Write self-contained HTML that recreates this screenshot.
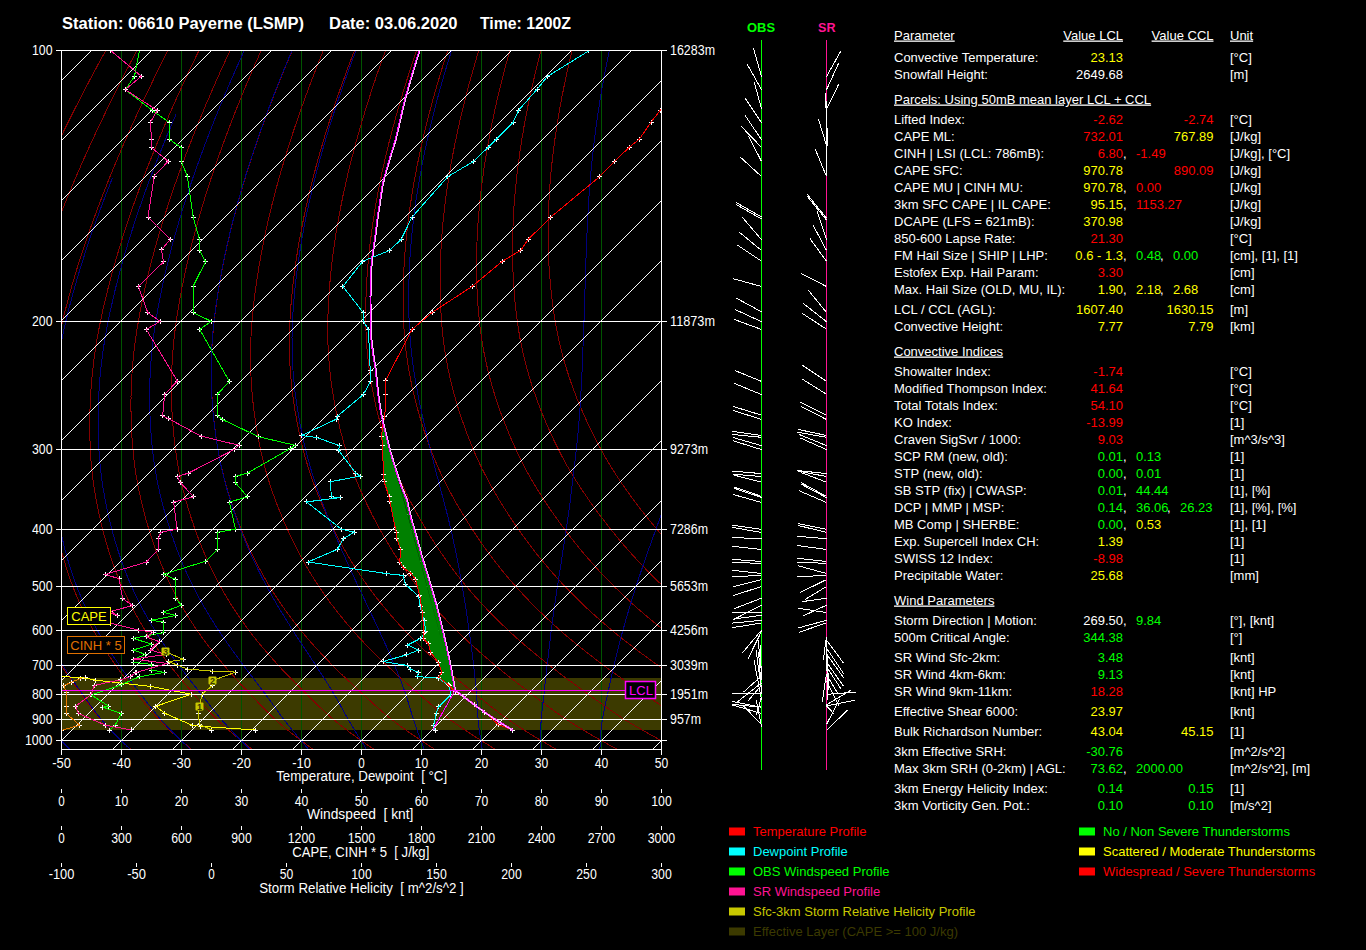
<!DOCTYPE html><html><head><meta charset="utf-8"><style>html,body{margin:0;padding:0;background:#000;width:1366px;height:950px;overflow:hidden}svg{display:block}text{font-family:"Liberation Sans",sans-serif}</style></head><body>
<svg width="1366" height="950" viewBox="0 0 1366 950">
<rect width="1366" height="950" fill="#000"/>
<defs><clipPath id="box"><rect x="62" y="51" width="599" height="698"/></clipPath></defs>
<g clip-path="url(#box)" shape-rendering="crispEdges">
<rect x="61" y="678" width="600" height="52" fill="#3c3a00"/>
<g stroke="#005400" stroke-width="1">
<line x1="121.5" y1="50" x2="121.5" y2="749"/>
<line x1="181.5" y1="50" x2="181.5" y2="749"/>
<line x1="241.5" y1="50" x2="241.5" y2="749"/>
<line x1="301.5" y1="50" x2="301.5" y2="749"/>
<line x1="361.5" y1="50" x2="361.5" y2="749"/>
<line x1="421.5" y1="50" x2="421.5" y2="749"/>
<line x1="481.5" y1="50" x2="481.5" y2="749"/>
<line x1="541.5" y1="50" x2="541.5" y2="749"/>
<line x1="601.5" y1="50" x2="601.5" y2="749"/>
</g>
<g fill="none" stroke="#860000" stroke-width="1">
<polyline points="118.6,27.3 116.6,30.9 114.6,34.5 112.6,38.1 110.6,41.6 108.6,45.2 106.7,48.7 104.8,52.3 102.8,55.8 100.9,59.3 99,62.8 97.1,66.3 95.3,69.8 93.4,73.3 91.6,76.8 89.7,80.2 87.9,83.7 86.1,87.1 84.3,90.5 82.5,94 80.8,97.4 79,100.8 77.3,104.2 75.5,107.6 73.8,111 72.1,114.3 70.4,117.7 68.8,121 67.1,124.4 65.4,127.7 63.8,131 62.2,134.4 60.6,137.7 59,141 57.4,144.2 55.8,147.5 54.2,150.8 52.7,154.1 51.2,157.3 49.6,160.5 48.1,163.8 46.6,167 45.2,170.2 43.7,173.4 42.2,176.6 40.8,179.8 39.3,183 37.9,186.2 36.5,189.3 35.1,192.5 33.7,195.6 32.4,198.8 31,201.9 29.7,205 28.3,208.2 27,211.3 25.7,214.4 24.4,217.4 23.1,220.5 21.9,223.6 20.6,226.6 19.4,229.7 18.2,232.7 16.9,235.8 15.7,238.8 14.5,241.8 13.4,244.8 12.2,247.8 11,250.8 9.9,253.8 8.8,256.8 7.7,259.8 6.6,262.7 5.5,265.7 4.4,268.6 3.3,271.6 2.3,274.5 1.2,277.4 0.2,280.3 -0.8,283.2 -1.8,286.1 -2.8,289 -3.8,291.9 -4.8,294.8 -5.7,297.6 -6.6,300.5 -7.6,303.3 -8.5,306.2 -9.4,309 -10.3,311.8 -11.2,314.6 -12,317.4 -12.9,320.2 -13.7,323 -14.5,325.8 -15.4,328.6 -16.1,331.3 -16.9,334 -17.7,336.8 -18.4,339.5 -19.1,342.2 -19.8,344.9 -20.5,347.6 -21.2,350.2 -21.9,352.9 -22.5,355.6 -23.1,358.2 -23.8,360.8 -24.4,363.4 -24.9,366 -25.5,368.6 -26.1,371.2 -26.6,373.8 -27.1,376.4 -27.7,378.9 -28.2,381.5 -28.7,384 -29.1,386.6 -29.6,389.1 -30,391.6 -30.5,394.1 -30.9,396.6 -31.3,399.1 -31.7,401.6 -32.1,404.1 -32.5,406.6 -32.8,409 -33.2,411.5 -33.5,414 -33.9,416.4 -34.2,418.8 -34.5,421.3 -34.8,423.7 -35.1,426.1 -35.3,428.6 -35.6,431 -35.9,433.4 -36.1,435.8 -36.3,438.2 -36.6,440.6 -36.8,443 -37,445.3 -37.2,447.7 -37.4,450.1 -37.6,452.5 -37.7,454.8 -37.9,457.2 -38,459.5 -38.1,461.8 -38.2,464.2 -38.3,466.5 -38.4,468.8 -38.4,471.1 -38.5,473.4 -38.5,475.6 -38.5,477.9 -38.6,480.2 -38.6,482.4 -38.5,484.7 -38.5,486.9 -38.5,489.2 -38.4,491.4 -38.4,493.6 -38.3,495.8 -38.2,498.1 -38.1,500.3 -38,502.5 -37.9,504.7 -37.8,506.9 -37.6,509.1 -37.5,511.2 -37.3,513.4 -37.2,515.6 -37,517.8 -36.8,519.9 -36.6,522.1 -36.4,524.3 -36.2,526.4 -36,528.6 -35.8,530.7 -35.6,532.9 -35.3,535 -35.1,537.2 -34.8,539.3 -34.5,541.4 -34.2,543.5 -33.9,545.7 -33.6,547.8 -33.3,549.9 -33,552 -32.6,554.1 -32.3,556.1 -31.9,558.2 -31.5,560.3 -31.1,562.4 -30.7,564.4 -30.3,566.5 -29.9,568.6 -29.5,570.6 -29,572.7 -28.6,574.7 -28.1,576.7 -27.6,578.7 -27.1,580.8 -26.6,582.8 -26.1,584.8 -25.6,586.8 -25,588.8 -24.5,590.8 -23.9,592.7 -23.3,594.7 -22.7,596.7 -22.1,598.6 -21.5,600.6 -20.9,602.6 -20.2,604.5 -19.6,606.4 -18.9,608.4 -18.3,610.3 -17.6,612.2 -16.9,614.1 -16.2,616 -15.4,617.9 -14.7,619.8 -14,621.7 -13.2,623.6 -12.4,625.5 -11.7,627.4 -10.9,629.2 -10.1,631.1 -9.3,633 -8.4,634.8 -7.6,636.7 -6.7,638.5 -5.9,640.3 -5,642.2 -4.1,644 -3.2,645.8 -2.3,647.6 -1.4,649.4 -0.5,651.2 0.5,653 1.4,654.8 2.4,656.6 3.4,658.4 4.3,660.2 5.3,662 6.3,663.8 7.3,665.6 8.3,667.4 9.4,669.1 10.4,670.9 11.4,672.7 12.5,674.4 13.6,676.2 14.6,677.9 15.7,679.7 16.8,681.4 17.9,683.2 19,684.9 20.1,686.7 21.3,688.4 22.4,690.2 23.5,691.9 24.7,693.7 25.8,695.4 27,697.2 28.1,699 29.2,700.7 30.4,702.5 31.6,704.3 32.7,706.1 33.9,707.8 35.1,709.6 36.3,711.3 37.6,713.1 38.8,714.8 40.1,716.5 41.4,718.2 42.7,719.9 44,721.5 45.4,723.2 46.7,724.8 48.1,726.5 49.5,728.1 50.9,729.7 52.4,731.3 53.8,732.9 55.3,734.5 56.8,736.1 58.3,737.6 59.8,739.2 61.3,740.7 62.9,742.3 64.4,743.9 66,745.4 67.5,747 69.1,748.5 70.7,750 72.3,751.6"/>
<polyline points="149.2,27.3 147.3,30.9 145.3,34.5 143.4,38.1 141.5,41.6 139.6,45.2 137.8,48.7 135.9,52.3 134,55.8 132.2,59.3 130.4,62.8 128.6,66.3 126.8,69.8 125,73.3 123.2,76.8 121.4,80.2 119.7,83.7 118,87.1 116.2,90.5 114.5,94 112.8,97.4 111.2,100.8 109.5,104.2 107.8,107.6 106.2,111 104.6,114.3 103,117.7 101.4,121 99.8,124.4 98.2,127.7 96.6,131 95.1,134.4 93.5,137.7 92,141 90.5,144.2 89,147.5 87.5,150.8 86.1,154.1 84.6,157.3 83.1,160.5 81.7,163.8 80.3,167 78.9,170.2 77.5,173.4 76.1,176.6 74.7,179.8 73.4,183 72.1,186.2 70.7,189.3 69.4,192.5 68.1,195.6 66.8,198.8 65.5,201.9 64.3,205 63,208.2 61.8,211.3 60.6,214.4 59.4,217.4 58.2,220.5 57,223.6 55.8,226.6 54.6,229.7 53.5,232.7 52.3,235.8 51.2,238.8 50.1,241.8 49,244.8 47.9,247.8 46.9,250.8 45.8,253.8 44.8,256.8 43.7,259.8 42.7,262.7 41.7,265.7 40.7,268.6 39.7,271.6 38.8,274.5 37.8,277.4 36.9,280.3 35.9,283.2 35,286.1 34.1,289 33.2,291.9 32.3,294.8 31.5,297.6 30.6,300.5 29.8,303.3 28.9,306.2 28.1,309 27.3,311.8 26.5,314.6 25.7,317.4 25,320.2 24.2,323 23.5,325.8 22.8,328.6 22.1,331.3 21.4,334 20.7,336.8 20.1,339.5 19.4,342.2 18.8,344.9 18.2,347.6 17.6,350.2 17.1,352.9 16.5,355.6 16,358.2 15.4,360.8 14.9,363.4 14.4,366 13.9,368.6 13.5,371.2 13,373.8 12.6,376.4 12.2,378.9 11.8,381.5 11.4,384 11,386.6 10.6,389.1 10.3,391.6 9.9,394.1 9.6,396.6 9.3,399.1 9,401.6 8.7,404.1 8.4,406.6 8.1,409 7.9,411.5 7.6,414 7.4,416.4 7.2,418.8 6.9,421.3 6.7,423.7 6.5,426.1 6.4,428.6 6.2,431 6,433.4 5.9,435.8 5.8,438.2 5.6,440.6 5.5,443 5.4,445.3 5.3,447.7 5.2,450.1 5.1,452.5 5.1,454.8 5,457.2 5,459.5 5,461.8 5,464.2 5,466.5 5,468.8 5,471.1 5.1,473.4 5.2,475.6 5.2,477.9 5.3,480.2 5.4,482.4 5.5,484.7 5.7,486.9 5.8,489.2 6,491.4 6.1,493.6 6.3,495.8 6.5,498.1 6.7,500.3 6.9,502.5 7.1,504.7 7.3,506.9 7.6,509.1 7.8,511.2 8.1,513.4 8.3,515.6 8.6,517.8 8.9,519.9 9.2,522.1 9.5,524.3 9.8,526.4 10.1,528.6 10.5,530.7 10.8,532.9 11.2,535 11.5,537.2 11.9,539.3 12.3,541.4 12.7,543.5 13.1,545.7 13.5,547.8 13.9,549.9 14.4,552 14.8,554.1 15.3,556.1 15.8,558.2 16.3,560.3 16.8,562.4 17.3,564.4 17.8,566.5 18.3,568.6 18.9,570.6 19.4,572.7 20,574.7 20.6,576.7 21.2,578.7 21.8,580.8 22.4,582.8 23,584.8 23.7,586.8 24.3,588.8 25,590.8 25.7,592.7 26.4,594.7 27.1,596.7 27.8,598.6 28.5,600.6 29.3,602.6 30,604.5 30.8,606.4 31.6,608.4 32.4,610.3 33.2,612.2 34,614.1 34.8,616 35.6,617.9 36.5,619.8 37.4,621.7 38.2,623.6 39.1,625.5 40,627.4 40.9,629.2 41.8,631.1 42.8,633 43.7,634.8 44.7,636.7 45.6,638.5 46.6,640.3 47.6,642.2 48.6,644 49.7,645.8 50.7,647.6 51.7,649.4 52.8,651.2 53.9,653 54.9,654.8 56,656.6 57.1,658.4 58.2,660.2 59.3,662 60.4,663.8 61.6,665.6 62.7,667.4 63.8,669.1 65,670.9 66.2,672.7 67.4,674.4 68.6,676.2 69.8,677.9 71,679.7 72.2,681.4 73.4,683.2 74.7,684.9 75.9,686.7 77.2,688.4 78.4,690.2 79.7,691.9 81,693.7 82.2,695.4 83.5,697.2 84.8,699 86.1,700.7 87.3,702.5 88.6,704.3 89.9,706.1 91.2,707.8 92.6,709.6 93.9,711.3 95.3,713.1 96.7,714.8 98.1,716.5 99.5,718.2 100.9,719.9 102.4,721.5 103.9,723.2 105.4,724.8 106.9,726.5 108.4,728.1 110,729.7 111.6,731.3 113.2,732.9 114.8,734.5 116.4,736.1 118,737.6 119.7,739.2 121.4,740.7 123,742.3 124.7,743.9 126.4,745.4 128.1,747 129.8,748.5 131.6,750 133.3,751.6"/>
<polyline points="179.8,27.3 178,30.9 176.1,34.5 174.3,38.1 172.4,41.6 170.6,45.2 168.8,48.7 167,52.3 165.2,55.8 163.5,59.3 161.7,62.8 160,66.3 158.2,69.8 156.5,73.3 154.8,76.8 153.1,80.2 151.5,83.7 149.8,87.1 148.2,90.5 146.5,94 144.9,97.4 143.3,100.8 141.7,104.2 140.1,107.6 138.6,111 137,114.3 135.5,117.7 133.9,121 132.4,124.4 130.9,127.7 129.4,131 128,134.4 126.5,137.7 125.1,141 123.6,144.2 122.2,147.5 120.8,150.8 119.4,154.1 118,157.3 116.7,160.5 115.3,163.8 114,167 112.6,170.2 111.3,173.4 110,176.6 108.7,179.8 107.4,183 106.2,186.2 104.9,189.3 103.7,192.5 102.5,195.6 101.3,198.8 100.1,201.9 98.9,205 97.7,208.2 96.6,211.3 95.4,214.4 94.3,217.4 93.2,220.5 92.1,223.6 91,226.6 89.9,229.7 88.8,232.7 87.8,235.8 86.7,238.8 85.7,241.8 84.7,244.8 83.7,247.8 82.7,250.8 81.7,253.8 80.7,256.8 79.8,259.8 78.9,262.7 77.9,265.7 77,268.6 76.1,271.6 75.2,274.5 74.4,277.4 73.5,280.3 72.7,283.2 71.8,286.1 71,289 70.2,291.9 69.4,294.8 68.6,297.6 67.9,300.5 67.1,303.3 66.4,306.2 65.6,309 64.9,311.8 64.2,314.6 63.5,317.4 62.8,320.2 62.2,323 61.5,325.8 60.9,328.6 60.3,331.3 59.7,334 59.1,336.8 58.5,339.5 58,342.2 57.5,344.9 57,347.6 56.5,350.2 56,352.9 55.5,355.6 55.1,358.2 54.6,360.8 54.2,363.4 53.8,366 53.4,368.6 53,371.2 52.7,373.8 52.3,376.4 52,378.9 51.7,381.5 51.4,384 51.1,386.6 50.8,389.1 50.5,391.6 50.3,394.1 50.1,396.6 49.8,399.1 49.6,401.6 49.4,404.1 49.2,406.6 49.1,409 48.9,411.5 48.7,414 48.6,416.4 48.5,418.8 48.4,421.3 48.3,423.7 48.2,426.1 48.1,428.6 48,431 47.9,433.4 47.9,435.8 47.8,438.2 47.8,440.6 47.8,443 47.8,445.3 47.8,447.7 47.8,450.1 47.8,452.5 47.8,454.8 47.9,457.2 48,459.5 48,461.8 48.1,464.2 48.3,466.5 48.4,468.8 48.5,471.1 48.7,473.4 48.8,475.6 49,477.9 49.2,480.2 49.4,482.4 49.6,484.7 49.8,486.9 50.1,489.2 50.3,491.4 50.6,493.6 50.9,495.8 51.2,498.1 51.5,500.3 51.8,502.5 52.1,504.7 52.4,506.9 52.8,509.1 53.1,511.2 53.5,513.4 53.9,515.6 54.2,517.8 54.6,519.9 55,522.1 55.4,524.3 55.9,526.4 56.3,528.6 56.7,530.7 57.2,532.9 57.6,535 58.1,537.2 58.6,539.3 59.1,541.4 59.6,543.5 60.1,545.7 60.6,547.8 61.2,549.9 61.7,552 62.3,554.1 62.9,556.1 63.4,558.2 64,560.3 64.7,562.4 65.3,564.4 65.9,566.5 66.6,568.6 67.2,570.6 67.9,572.7 68.6,574.7 69.3,576.7 70,578.7 70.7,580.8 71.4,582.8 72.2,584.8 72.9,586.8 73.7,588.8 74.5,590.8 75.3,592.7 76.1,594.7 76.9,596.7 77.7,598.6 78.6,600.6 79.4,602.6 80.3,604.5 81.2,606.4 82.1,608.4 83,610.3 83.9,612.2 84.8,614.1 85.8,616 86.7,617.9 87.7,619.8 88.7,621.7 89.7,623.6 90.7,625.5 91.7,627.4 92.7,629.2 93.8,631.1 94.8,633 95.9,634.8 97,636.7 98,638.5 99.2,640.3 100.3,642.2 101.4,644 102.5,645.8 103.7,647.6 104.9,649.4 106,651.2 107.2,653 108.4,654.8 109.6,656.6 110.9,658.4 112.1,660.2 113.3,662 114.6,663.8 115.8,665.6 117.1,667.4 118.3,669.1 119.6,670.9 120.9,672.7 122.2,674.4 123.6,676.2 124.9,677.9 126.2,679.7 127.6,681.4 128.9,683.2 130.3,684.9 131.7,686.7 133.1,688.4 134.4,690.2 135.8,691.9 137.2,693.7 138.6,695.4 140,697.2 141.4,699 142.9,700.7 144.3,702.5 145.7,704.3 147.1,706.1 148.6,707.8 150,709.6 151.5,711.3 153,713.1 154.5,714.8 156,716.5 157.6,718.2 159.2,719.9 160.8,721.5 162.4,723.2 164.1,724.8 165.7,726.5 167.4,728.1 169.1,729.7 170.8,731.3 172.5,732.9 174.3,734.5 176,736.1 177.8,737.6 179.6,739.2 181.4,740.7 183.2,742.3 185,743.9 186.9,745.4 188.7,747 190.6,748.5 192.4,750 194.3,751.6"/>
<polyline points="210.5,27.3 208.7,30.9 206.9,34.5 205.1,38.1 203.3,41.6 201.6,45.2 199.9,48.7 198.1,52.3 196.4,55.8 194.7,59.3 193,62.8 191.4,66.3 189.7,69.8 188.1,73.3 186.5,76.8 184.8,80.2 183.2,83.7 181.7,87.1 180.1,90.5 178.5,94 177,97.4 175.4,100.8 173.9,104.2 172.4,107.6 170.9,111 169.5,114.3 168,117.7 166.5,121 165.1,124.4 163.7,127.7 162.3,131 160.9,134.4 159.5,137.7 158.1,141 156.7,144.2 155.4,147.5 154.1,150.8 152.8,154.1 151.5,157.3 150.2,160.5 148.9,163.8 147.6,167 146.4,170.2 145.1,173.4 143.9,176.6 142.7,179.8 141.5,183 140.3,186.2 139.1,189.3 138,192.5 136.8,195.6 135.7,198.8 134.6,201.9 133.5,205 132.4,208.2 131.3,211.3 130.3,214.4 129.2,217.4 128.2,220.5 127.1,223.6 126.1,226.6 125.1,229.7 124.1,232.7 123.2,235.8 122.2,238.8 121.3,241.8 120.3,244.8 119.4,247.8 118.5,250.8 117.6,253.8 116.7,256.8 115.9,259.8 115,262.7 114.2,265.7 113.3,268.6 112.5,271.6 111.7,274.5 110.9,277.4 110.2,280.3 109.4,283.2 108.7,286.1 107.9,289 107.2,291.9 106.5,294.8 105.8,297.6 105.1,300.5 104.4,303.3 103.8,306.2 103.1,309 102.5,311.8 101.9,314.6 101.3,317.4 100.7,320.2 100.1,323 99.6,325.8 99,328.6 98.5,331.3 98,334 97.5,336.8 97,339.5 96.6,342.2 96.1,344.9 95.7,347.6 95.3,350.2 94.9,352.9 94.5,355.6 94.2,358.2 93.8,360.8 93.5,363.4 93.2,366 92.9,368.6 92.6,371.2 92.3,373.8 92.1,376.4 91.8,378.9 91.6,381.5 91.4,384 91.2,386.6 91,389.1 90.8,391.6 90.7,394.1 90.5,396.6 90.4,399.1 90.3,401.6 90.2,404.1 90.1,406.6 90,409 89.9,411.5 89.9,414 89.8,416.4 89.8,418.8 89.8,421.3 89.8,423.7 89.8,426.1 89.8,428.6 89.8,431 89.8,433.4 89.9,435.8 89.9,438.2 90,440.6 90.1,443 90.2,445.3 90.3,447.7 90.4,450.1 90.5,452.5 90.6,454.8 90.8,457.2 90.9,459.5 91.1,461.8 91.3,464.2 91.5,466.5 91.7,468.8 92,471.1 92.2,473.4 92.5,475.6 92.8,477.9 93.1,480.2 93.4,482.4 93.7,484.7 94,486.9 94.4,489.2 94.7,491.4 95.1,493.6 95.5,495.8 95.9,498.1 96.3,500.3 96.7,502.5 97.1,504.7 97.5,506.9 98,509.1 98.4,511.2 98.9,513.4 99.4,515.6 99.9,517.8 100.4,519.9 100.9,522.1 101.4,524.3 101.9,526.4 102.5,528.6 103,530.7 103.6,532.9 104.1,535 104.7,537.2 105.3,539.3 105.9,541.4 106.5,543.5 107.1,545.7 107.8,547.8 108.4,549.9 109.1,552 109.7,554.1 110.4,556.1 111.1,558.2 111.8,560.3 112.5,562.4 113.3,564.4 114,566.5 114.8,568.6 115.5,570.6 116.3,572.7 117.1,574.7 117.9,576.7 118.7,578.7 119.6,580.8 120.4,582.8 121.3,584.8 122.1,586.8 123,588.8 123.9,590.8 124.8,592.7 125.8,594.7 126.7,596.7 127.6,598.6 128.6,600.6 129.6,602.6 130.6,604.5 131.6,606.4 132.6,608.4 133.6,610.3 134.6,612.2 135.7,614.1 136.7,616 137.8,617.9 138.9,619.8 140,621.7 141.1,623.6 142.2,625.5 143.4,627.4 144.5,629.2 145.7,631.1 146.8,633 148,634.8 149.2,636.7 150.4,638.5 151.7,640.3 152.9,642.2 154.2,644 155.4,645.8 156.7,647.6 158,649.4 159.3,651.2 160.6,653 161.9,654.8 163.3,656.6 164.6,658.4 165.9,660.2 167.3,662 168.7,663.8 170,665.6 171.4,667.4 172.8,669.1 174.2,670.9 175.7,672.7 177.1,674.4 178.6,676.2 180,677.9 181.5,679.7 183,681.4 184.4,683.2 185.9,684.9 187.4,686.7 188.9,688.4 190.5,690.2 192,691.9 193.5,693.7 195,695.4 196.6,697.2 198.1,699 199.7,700.7 201.2,702.5 202.8,704.3 204.3,706.1 205.9,707.8 207.5,709.6 209.1,711.3 210.7,713.1 212.4,714.8 214,716.5 215.7,718.2 217.4,719.9 219.2,721.5 220.9,723.2 222.7,724.8 224.5,726.5 226.3,728.1 228.1,729.7 230,731.3 231.9,732.9 233.7,734.5 235.6,736.1 237.5,737.6 239.5,739.2 241.4,740.7 243.4,742.3 245.3,743.9 247.3,745.4 249.3,747 251.3,748.5 253.3,750 255.3,751.6"/>
<polyline points="241.1,27.3 239.4,30.9 237.6,34.5 235.9,38.1 234.2,41.6 232.6,45.2 230.9,48.7 229.3,52.3 227.6,55.8 226,59.3 224.4,62.8 222.8,66.3 221.2,69.8 219.6,73.3 218.1,76.8 216.5,80.2 215,83.7 213.5,87.1 212,90.5 210.5,94 209.1,97.4 207.6,100.8 206.1,104.2 204.7,107.6 203.3,111 201.9,114.3 200.5,117.7 199.1,121 197.8,124.4 196.4,127.7 195.1,131 193.8,134.4 192.4,137.7 191.2,141 189.9,144.2 188.6,147.5 187.3,150.8 186.1,154.1 184.9,157.3 183.7,160.5 182.5,163.8 181.3,167 180.1,170.2 178.9,173.4 177.8,176.6 176.7,179.8 175.5,183 174.4,186.2 173.4,189.3 172.3,192.5 171.2,195.6 170.2,198.8 169.1,201.9 168.1,205 167.1,208.2 166.1,211.3 165.1,214.4 164.1,217.4 163.2,220.5 162.2,223.6 161.3,226.6 160.4,229.7 159.5,232.7 158.6,235.8 157.7,238.8 156.8,241.8 156,244.8 155.2,247.8 154.3,250.8 153.5,253.8 152.7,256.8 151.9,259.8 151.2,262.7 150.4,265.7 149.7,268.6 148.9,271.6 148.2,274.5 147.5,277.4 146.8,280.3 146.1,283.2 145.5,286.1 144.8,289 144.2,291.9 143.6,294.8 143,297.6 142.4,300.5 141.8,303.3 141.2,306.2 140.7,309 140.1,311.8 139.6,314.6 139.1,317.4 138.6,320.2 138.1,323 137.6,325.8 137.1,328.6 136.7,331.3 136.3,334 135.9,336.8 135.5,339.5 135.1,342.2 134.8,344.9 134.4,347.6 134.1,350.2 133.8,352.9 133.5,355.6 133.3,358.2 133,360.8 132.8,363.4 132.5,366 132.3,368.6 132.1,371.2 132,373.8 131.8,376.4 131.7,378.9 131.5,381.5 131.4,384 131.3,386.6 131.2,389.1 131.1,391.6 131.1,394.1 131,396.6 131,399.1 130.9,401.6 130.9,404.1 130.9,406.6 130.9,409 131,411.5 131,414 131.1,416.4 131.1,418.8 131.2,421.3 131.3,423.7 131.4,426.1 131.5,428.6 131.6,431 131.7,433.4 131.9,435.8 132,438.2 132.2,440.6 132.4,443 132.6,445.3 132.7,447.7 133,450.1 133.2,452.5 133.4,454.8 133.7,457.2 133.9,459.5 134.2,461.8 134.5,464.2 134.8,466.5 135.1,468.8 135.5,471.1 135.8,473.4 136.2,475.6 136.6,477.9 137,480.2 137.4,482.4 137.8,484.7 138.2,486.9 138.7,489.2 139.1,491.4 139.6,493.6 140.1,495.8 140.6,498.1 141.1,500.3 141.6,502.5 142.1,504.7 142.7,506.9 143.2,509.1 143.8,511.2 144.3,513.4 144.9,515.6 145.5,517.8 146.1,519.9 146.7,522.1 147.3,524.3 148,526.4 148.6,528.6 149.3,530.7 149.9,532.9 150.6,535 151.3,537.2 152,539.3 152.7,541.4 153.4,543.5 154.1,545.7 154.9,547.8 155.6,549.9 156.4,552 157.2,554.1 158,556.1 158.8,558.2 159.6,560.3 160.4,562.4 161.3,564.4 162.1,566.5 163,568.6 163.9,570.6 164.8,572.7 165.7,574.7 166.6,576.7 167.5,578.7 168.5,580.8 169.4,582.8 170.4,584.8 171.4,586.8 172.4,588.8 173.4,590.8 174.4,592.7 175.4,594.7 176.5,596.7 177.6,598.6 178.6,600.6 179.7,602.6 180.8,604.5 181.9,606.4 183.1,608.4 184.2,610.3 185.4,612.2 186.5,614.1 187.7,616 188.9,617.9 190.1,619.8 191.3,621.7 192.6,623.6 193.8,625.5 195,627.4 196.3,629.2 197.6,631.1 198.9,633 200.2,634.8 201.5,636.7 202.8,638.5 204.2,640.3 205.6,642.2 206.9,644 208.3,645.8 209.7,647.6 211.1,649.4 212.5,651.2 214,653 215.4,654.8 216.9,656.6 218.3,658.4 219.8,660.2 221.3,662 222.8,663.8 224.3,665.6 225.8,667.4 227.3,669.1 228.9,670.9 230.4,672.7 232,674.4 233.6,676.2 235.1,677.9 236.7,679.7 238.3,681.4 239.9,683.2 241.6,684.9 243.2,686.7 244.8,688.4 246.5,690.2 248.1,691.9 249.8,693.7 251.5,695.4 253.1,697.2 254.8,699 256.5,700.7 258.1,702.5 259.8,704.3 261.5,706.1 263.2,707.8 264.9,709.6 266.7,711.3 268.4,713.1 270.2,714.8 272,716.5 273.9,718.2 275.7,719.9 277.6,721.5 279.5,723.2 281.4,724.8 283.3,726.5 285.2,728.1 287.2,729.7 289.2,731.3 291.2,732.9 293.2,734.5 295.2,736.1 297.3,737.6 299.4,739.2 301.5,740.7 303.5,742.3 305.6,743.9 307.8,745.4 309.9,747 312,748.5 314.2,750 316.3,751.6"/>
<polyline points="271.7,27.3 270.1,30.9 268.4,34.5 266.8,38.1 265.2,41.6 263.6,45.2 262,48.7 260.4,52.3 258.8,55.8 257.3,59.3 255.7,62.8 254.2,66.3 252.7,69.8 251.2,73.3 249.7,76.8 248.3,80.2 246.8,83.7 245.4,87.1 243.9,90.5 242.5,94 241.1,97.4 239.7,100.8 238.4,104.2 237,107.6 235.7,111 234.3,114.3 233,117.7 231.7,121 230.4,124.4 229.2,127.7 227.9,131 226.7,134.4 225.4,137.7 224.2,141 223,144.2 221.8,147.5 220.6,150.8 219.5,154.1 218.3,157.3 217.2,160.5 216.1,163.8 214.9,167 213.8,170.2 212.8,173.4 211.7,176.6 210.6,179.8 209.6,183 208.6,186.2 207.6,189.3 206.6,192.5 205.6,195.6 204.6,198.8 203.6,201.9 202.7,205 201.8,208.2 200.8,211.3 199.9,214.4 199.1,217.4 198.2,220.5 197.3,223.6 196.5,226.6 195.6,229.7 194.8,232.7 194,235.8 193.2,238.8 192.4,241.8 191.6,244.8 190.9,247.8 190.2,250.8 189.4,253.8 188.7,256.8 188,259.8 187.3,262.7 186.6,265.7 186,268.6 185.3,271.6 184.7,274.5 184.1,277.4 183.5,280.3 182.9,283.2 182.3,286.1 181.7,289 181.2,291.9 180.7,294.8 180.1,297.6 179.6,300.5 179.1,303.3 178.6,306.2 178.2,309 177.7,311.8 177.3,314.6 176.8,317.4 176.4,320.2 176,323 175.6,325.8 175.3,328.6 174.9,331.3 174.6,334 174.3,336.8 174,339.5 173.7,342.2 173.4,344.9 173.2,347.6 173,350.2 172.7,352.9 172.5,355.6 172.4,358.2 172.2,360.8 172.1,363.4 171.9,366 171.8,368.6 171.7,371.2 171.6,373.8 171.5,376.4 171.5,378.9 171.4,381.5 171.4,384 171.4,386.6 171.4,389.1 171.4,391.6 171.4,394.1 171.5,396.6 171.5,399.1 171.6,401.6 171.7,404.1 171.8,406.6 171.9,409 172,411.5 172.1,414 172.3,416.4 172.5,418.8 172.6,421.3 172.8,423.7 173,426.1 173.2,428.6 173.4,431 173.6,433.4 173.9,435.8 174.1,438.2 174.4,440.6 174.7,443 174.9,445.3 175.2,447.7 175.5,450.1 175.9,452.5 176.2,454.8 176.5,457.2 176.9,459.5 177.3,461.8 177.7,464.2 178.1,466.5 178.5,468.8 178.9,471.1 179.4,473.4 179.9,475.6 180.3,477.9 180.8,480.2 181.3,482.4 181.9,484.7 182.4,486.9 182.9,489.2 183.5,491.4 184.1,493.6 184.7,495.8 185.3,498.1 185.9,500.3 186.5,502.5 187.1,504.7 187.8,506.9 188.4,509.1 189.1,511.2 189.8,513.4 190.4,515.6 191.1,517.8 191.8,519.9 192.6,522.1 193.3,524.3 194,526.4 194.8,528.6 195.5,530.7 196.3,532.9 197.1,535 197.9,537.2 198.7,539.3 199.5,541.4 200.3,543.5 201.2,545.7 202,547.8 202.9,549.9 203.8,552 204.6,554.1 205.6,556.1 206.5,558.2 207.4,560.3 208.3,562.4 209.3,564.4 210.3,566.5 211.2,568.6 212.2,570.6 213.2,572.7 214.2,574.7 215.3,576.7 216.3,578.7 217.4,580.8 218.4,582.8 219.5,584.8 220.6,586.8 221.7,588.8 222.9,590.8 224,592.7 225.1,594.7 226.3,596.7 227.5,598.6 228.7,600.6 229.9,602.6 231.1,604.5 232.3,606.4 233.6,608.4 234.8,610.3 236.1,612.2 237.4,614.1 238.7,616 240,617.9 241.3,619.8 242.7,621.7 244,623.6 245.4,625.5 246.7,627.4 248.1,629.2 249.5,631.1 250.9,633 252.3,634.8 253.8,636.7 255.2,638.5 256.7,640.3 258.2,642.2 259.7,644 261.2,645.8 262.7,647.6 264.2,649.4 265.8,651.2 267.4,653 268.9,654.8 270.5,656.6 272.1,658.4 273.7,660.2 275.3,662 276.9,663.8 278.5,665.6 280.2,667.4 281.8,669.1 283.5,670.9 285.2,672.7 286.8,674.4 288.5,676.2 290.3,677.9 292,679.7 293.7,681.4 295.5,683.2 297.2,684.9 299,686.7 300.7,688.4 302.5,690.2 304.3,691.9 306.1,693.7 307.9,695.4 309.7,697.2 311.4,699 313.3,700.7 315.1,702.5 316.9,704.3 318.7,706.1 320.5,707.8 322.4,709.6 324.3,711.3 326.2,713.1 328.1,714.8 330,716.5 332,718.2 334,719.9 336,721.5 338,723.2 340,724.8 342.1,726.5 344.2,728.1 346.3,729.7 348.4,731.3 350.5,732.9 352.7,734.5 354.9,736.1 357.1,737.6 359.3,739.2 361.5,740.7 363.7,742.3 366,743.9 368.2,745.4 370.5,747 372.7,748.5 375,750 377.3,751.6"/>
<polyline points="302.3,27.3 300.8,30.9 299.2,34.5 297.6,38.1 296.1,41.6 294.5,45.2 293,48.7 291.5,52.3 290,55.8 288.5,59.3 287.1,62.8 285.6,66.3 284.2,69.8 282.8,73.3 281.3,76.8 280,80.2 278.6,83.7 277.2,87.1 275.9,90.5 274.5,94 273.2,97.4 271.9,100.8 270.6,104.2 269.3,107.6 268,111 266.8,114.3 265.5,117.7 264.3,121 263.1,124.4 261.9,127.7 260.7,131 259.5,134.4 258.4,137.7 257.2,141 256.1,144.2 255,147.5 253.9,150.8 252.8,154.1 251.7,157.3 250.7,160.5 249.6,163.8 248.6,167 247.6,170.2 246.6,173.4 245.6,176.6 244.6,179.8 243.7,183 242.7,186.2 241.8,189.3 240.8,192.5 239.9,195.6 239,198.8 238.2,201.9 237.3,205 236.5,208.2 235.6,211.3 234.8,214.4 234,217.4 233.2,220.5 232.4,223.6 231.6,226.6 230.9,229.7 230.1,232.7 229.4,235.8 228.7,238.8 228,241.8 227.3,244.8 226.6,247.8 226,250.8 225.3,253.8 224.7,256.8 224.1,259.8 223.5,262.7 222.9,265.7 222.3,268.6 221.7,271.6 221.2,274.5 220.7,277.4 220.1,280.3 219.6,283.2 219.1,286.1 218.7,289 218.2,291.9 217.7,294.8 217.3,297.6 216.9,300.5 216.5,303.3 216.1,306.2 215.7,309 215.3,311.8 214.9,314.6 214.6,317.4 214.3,320.2 214,323 213.7,325.8 213.4,328.6 213.1,331.3 212.9,334 212.7,336.8 212.4,339.5 212.3,342.2 212.1,344.9 211.9,347.6 211.8,350.2 211.7,352.9 211.6,355.6 211.5,358.2 211.4,360.8 211.3,363.4 211.3,366 211.3,368.6 211.3,371.2 211.3,373.8 211.3,376.4 211.3,378.9 211.4,381.5 211.4,384 211.5,386.6 211.6,389.1 211.7,391.6 211.8,394.1 212,396.6 212.1,399.1 212.3,401.6 212.5,404.1 212.6,406.6 212.8,409 213.1,411.5 213.3,414 213.5,416.4 213.8,418.8 214,421.3 214.3,423.7 214.6,426.1 214.9,428.6 215.2,431 215.5,433.4 215.9,435.8 216.2,438.2 216.6,440.6 216.9,443 217.3,445.3 217.7,447.7 218.1,450.1 218.5,452.5 219,454.8 219.4,457.2 219.9,459.5 220.3,461.8 220.8,464.2 221.4,466.5 221.9,468.8 222.4,471.1 223,473.4 223.5,475.6 224.1,477.9 224.7,480.2 225.3,482.4 225.9,484.7 226.6,486.9 227.2,489.2 227.9,491.4 228.6,493.6 229.2,495.8 229.9,498.1 230.7,500.3 231.4,502.5 232.1,504.7 232.9,506.9 233.6,509.1 234.4,511.2 235.2,513.4 236,515.6 236.8,517.8 237.6,519.9 238.4,522.1 239.2,524.3 240.1,526.4 240.9,528.6 241.8,530.7 242.7,532.9 243.6,535 244.5,537.2 245.4,539.3 246.3,541.4 247.2,543.5 248.2,545.7 249.1,547.8 250.1,549.9 251.1,552 252.1,554.1 253.1,556.1 254.1,558.2 255.2,560.3 256.2,562.4 257.3,564.4 258.4,566.5 259.5,568.6 260.6,570.6 261.7,572.7 262.8,574.7 263.9,576.7 265.1,578.7 266.3,580.8 267.5,582.8 268.6,584.8 269.9,586.8 271.1,588.8 272.3,590.8 273.6,592.7 274.8,594.7 276.1,596.7 277.4,598.6 278.7,600.6 280,602.6 281.4,604.5 282.7,606.4 284.1,608.4 285.4,610.3 286.8,612.2 288.2,614.1 289.7,616 291.1,617.9 292.5,619.8 294,621.7 295.4,623.6 296.9,625.5 298.4,627.4 299.9,629.2 301.4,631.1 303,633 304.5,634.8 306.1,636.7 307.6,638.5 309.2,640.3 310.8,642.2 312.4,644 314.1,645.8 315.7,647.6 317.4,649.4 319,651.2 320.7,653 322.4,654.8 324.1,656.6 325.8,658.4 327.5,660.2 329.3,662 331,663.8 332.8,665.6 334.5,667.4 336.3,669.1 338.1,670.9 339.9,672.7 341.7,674.4 343.5,676.2 345.4,677.9 347.2,679.7 349.1,681.4 351,683.2 352.8,684.9 354.7,686.7 356.6,688.4 358.5,690.2 360.4,691.9 362.3,693.7 364.3,695.4 366.2,697.2 368.1,699 370.1,700.7 372,702.5 373.9,704.3 375.9,706.1 377.9,707.8 379.9,709.6 381.9,711.3 383.9,713.1 385.9,714.8 388,716.5 390.1,718.2 392.2,719.9 394.4,721.5 396.5,723.2 398.7,724.8 400.9,726.5 403.1,728.1 405.4,729.7 407.6,731.3 409.9,732.9 412.2,734.5 414.5,736.1 416.8,737.6 419.2,739.2 421.5,740.7 423.9,742.3 426.3,743.9 428.7,745.4 431.1,747 433.5,748.5 435.9,750 438.3,751.6"/>
<polyline points="333,27.3 331.5,30.9 329.9,34.5 328.5,38.1 327,41.6 325.5,45.2 324.1,48.7 322.6,52.3 321.2,55.8 319.8,59.3 318.4,62.8 317,66.3 315.7,69.8 314.3,73.3 313,76.8 311.7,80.2 310.3,83.7 309.1,87.1 307.8,90.5 306.5,94 305.3,97.4 304,100.8 302.8,104.2 301.6,107.6 300.4,111 299.2,114.3 298.1,117.7 296.9,121 295.8,124.4 294.6,127.7 293.5,131 292.4,134.4 291.4,137.7 290.3,141 289.2,144.2 288.2,147.5 287.2,150.8 286.2,154.1 285.2,157.3 284.2,160.5 283.2,163.8 282.3,167 281.3,170.2 280.4,173.4 279.5,176.6 278.6,179.8 277.7,183 276.8,186.2 276,189.3 275.1,192.5 274.3,195.6 273.5,198.8 272.7,201.9 271.9,205 271.1,208.2 270.4,211.3 269.6,214.4 268.9,217.4 268.2,220.5 267.5,223.6 266.8,226.6 266.1,229.7 265.5,232.7 264.8,235.8 264.2,238.8 263.6,241.8 263,244.8 262.4,247.8 261.8,250.8 261.2,253.8 260.7,256.8 260.2,259.8 259.6,262.7 259.1,265.7 258.6,268.6 258.2,271.6 257.7,274.5 257.2,277.4 256.8,280.3 256.4,283.2 256,286.1 255.6,289 255.2,291.9 254.8,294.8 254.5,297.6 254.1,300.5 253.8,303.3 253.5,306.2 253.2,309 252.9,311.8 252.6,314.6 252.4,317.4 252.1,320.2 251.9,323 251.7,325.8 251.5,328.6 251.3,331.3 251.2,334 251,336.8 250.9,339.5 250.8,342.2 250.7,344.9 250.7,347.6 250.6,350.2 250.6,352.9 250.6,355.6 250.6,358.2 250.6,360.8 250.6,363.4 250.7,366 250.7,368.6 250.8,371.2 250.9,373.8 251,376.4 251.1,378.9 251.3,381.5 251.4,384 251.6,386.6 251.8,389.1 252,391.6 252.2,394.1 252.4,396.6 252.7,399.1 252.9,401.6 253.2,404.1 253.5,406.6 253.8,409 254.1,411.5 254.4,414 254.8,416.4 255.1,418.8 255.5,421.3 255.8,423.7 256.2,426.1 256.6,428.6 257,431 257.4,433.4 257.9,435.8 258.3,438.2 258.8,440.6 259.2,443 259.7,445.3 260.2,447.7 260.7,450.1 261.2,452.5 261.7,454.8 262.3,457.2 262.8,459.5 263.4,461.8 264,464.2 264.6,466.5 265.2,468.8 265.9,471.1 266.5,473.4 267.2,475.6 267.9,477.9 268.6,480.2 269.3,482.4 270,484.7 270.8,486.9 271.5,489.2 272.3,491.4 273,493.6 273.8,495.8 274.6,498.1 275.5,500.3 276.3,502.5 277.1,504.7 278,506.9 278.8,509.1 279.7,511.2 280.6,513.4 281.5,515.6 282.4,517.8 283.3,519.9 284.2,522.1 285.2,524.3 286.1,526.4 287.1,528.6 288.1,530.7 289,532.9 290,535 291,537.2 292.1,539.3 293.1,541.4 294.1,543.5 295.2,545.7 296.3,547.8 297.4,549.9 298.4,552 299.6,554.1 300.7,556.1 301.8,558.2 303,560.3 304.1,562.4 305.3,564.4 306.5,566.5 307.7,568.6 308.9,570.6 310.1,572.7 311.4,574.7 312.6,576.7 313.9,578.7 315.2,580.8 316.5,582.8 317.8,584.8 319.1,586.8 320.4,588.8 321.8,590.8 323.1,592.7 324.5,594.7 325.9,596.7 327.3,598.6 328.7,600.6 330.2,602.6 331.6,604.5 333.1,606.4 334.6,608.4 336.1,610.3 337.6,612.2 339.1,614.1 340.6,616 342.2,617.9 343.7,619.8 345.3,621.7 346.9,623.6 348.5,625.5 350.1,627.4 351.7,629.2 353.3,631.1 355,633 356.7,634.8 358.3,636.7 360,638.5 361.7,640.3 363.5,642.2 365.2,644 367,645.8 368.7,647.6 370.5,649.4 372.3,651.2 374.1,653 375.9,654.8 377.7,656.6 379.6,658.4 381.4,660.2 383.3,662 385.1,663.8 387,665.6 388.9,667.4 390.8,669.1 392.7,670.9 394.6,672.7 396.6,674.4 398.5,676.2 400.5,677.9 402.5,679.7 404.5,681.4 406.5,683.2 408.5,684.9 410.5,686.7 412.5,688.4 414.5,690.2 416.6,691.9 418.6,693.7 420.7,695.4 422.7,697.2 424.8,699 426.9,700.7 428.9,702.5 431,704.3 433.1,706.1 435.2,707.8 437.3,709.6 439.5,711.3 441.6,713.1 443.8,714.8 446,716.5 448.2,718.2 450.5,719.9 452.8,721.5 455.1,723.2 457.4,724.8 459.7,726.5 462.1,728.1 464.4,729.7 466.8,731.3 469.2,732.9 471.7,734.5 474.1,736.1 476.6,737.6 479.1,739.2 481.6,740.7 484.1,742.3 486.6,743.9 489.1,745.4 491.6,747 494.2,748.5 496.8,750 499.4,751.6"/>
<polyline points="363.6,27.3 362.2,30.9 360.7,34.5 359.3,38.1 357.9,41.6 356.5,45.2 355.1,48.7 353.8,52.3 352.4,55.8 351.1,59.3 349.7,62.8 348.4,66.3 347.1,69.8 345.9,73.3 344.6,76.8 343.4,80.2 342.1,83.7 340.9,87.1 339.7,90.5 338.5,94 337.3,97.4 336.2,100.8 335,104.2 333.9,107.6 332.8,111 331.7,114.3 330.6,117.7 329.5,121 328.4,124.4 327.4,127.7 326.4,131 325.3,134.4 324.3,137.7 323.3,141 322.4,144.2 321.4,147.5 320.4,150.8 319.5,154.1 318.6,157.3 317.7,160.5 316.8,163.8 315.9,167 315.1,170.2 314.2,173.4 313.4,176.6 312.6,179.8 311.8,183 311,186.2 310.2,189.3 309.4,192.5 308.7,195.6 307.9,198.8 307.2,201.9 306.5,205 305.8,208.2 305.1,211.3 304.5,214.4 303.8,217.4 303.2,220.5 302.6,223.6 302,226.6 301.4,229.7 300.8,232.7 300.2,235.8 299.7,238.8 299.1,241.8 298.6,244.8 298.1,247.8 297.6,250.8 297.1,253.8 296.7,256.8 296.2,259.8 295.8,262.7 295.4,265.7 295,268.6 294.6,271.6 294.2,274.5 293.8,277.4 293.5,280.3 293.1,283.2 292.8,286.1 292.5,289 292.2,291.9 291.9,294.8 291.6,297.6 291.4,300.5 291.1,303.3 290.9,306.2 290.7,309 290.5,311.8 290.3,314.6 290.1,317.4 290,320.2 289.9,323 289.7,325.8 289.6,328.6 289.5,331.3 289.5,334 289.4,336.8 289.4,339.5 289.4,342.2 289.4,344.9 289.4,347.6 289.4,350.2 289.5,352.9 289.6,355.6 289.7,358.2 289.8,360.8 289.9,363.4 290,366 290.2,368.6 290.4,371.2 290.5,373.8 290.8,376.4 291,378.9 291.2,381.5 291.5,384 291.7,386.6 292,389.1 292.3,391.6 292.6,394.1 292.9,396.6 293.3,399.1 293.6,401.6 294,404.1 294.3,406.6 294.7,409 295.1,411.5 295.6,414 296,416.4 296.4,418.8 296.9,421.3 297.4,423.7 297.8,426.1 298.3,428.6 298.8,431 299.3,433.4 299.9,435.8 300.4,438.2 301,440.6 301.5,443 302.1,445.3 302.7,447.7 303.3,450.1 303.9,452.5 304.5,454.8 305.2,457.2 305.8,459.5 306.5,461.8 307.2,464.2 307.9,466.5 308.6,468.8 309.4,471.1 310.1,473.4 310.9,475.6 311.7,477.9 312.5,480.2 313.3,482.4 314.1,484.7 314.9,486.9 315.8,489.2 316.7,491.4 317.5,493.6 318.4,495.8 319.3,498.1 320.3,500.3 321.2,502.5 322.1,504.7 323.1,506.9 324,509.1 325,511.2 326,513.4 327,515.6 328,517.8 329.1,519.9 330.1,522.1 331.1,524.3 332.2,526.4 333.3,528.6 334.3,530.7 335.4,532.9 336.5,535 337.6,537.2 338.8,539.3 339.9,541.4 341.1,543.5 342.2,545.7 343.4,547.8 344.6,549.9 345.8,552 347,554.1 348.2,556.1 349.5,558.2 350.7,560.3 352,562.4 353.3,564.4 354.6,566.5 355.9,568.6 357.2,570.6 358.6,572.7 359.9,574.7 361.3,576.7 362.7,578.7 364.1,580.8 365.5,582.8 366.9,584.8 368.3,586.8 369.8,588.8 371.2,590.8 372.7,592.7 374.2,594.7 375.7,596.7 377.2,598.6 378.8,600.6 380.3,602.6 381.9,604.5 383.5,606.4 385.1,608.4 386.7,610.3 388.3,612.2 389.9,614.1 391.6,616 393.3,617.9 394.9,619.8 396.6,621.7 398.3,623.6 400,625.5 401.8,627.4 403.5,629.2 405.3,631.1 407,633 408.8,634.8 410.6,636.7 412.4,638.5 414.3,640.3 416.1,642.2 418,644 419.8,645.8 421.7,647.6 423.6,649.4 425.5,651.2 427.5,653 429.4,654.8 431.4,656.6 433.3,658.4 435.3,660.2 437.3,662 439.3,663.8 441.3,665.6 443.3,667.4 445.3,669.1 447.3,670.9 449.4,672.7 451.5,674.4 453.5,676.2 455.6,677.9 457.7,679.7 459.8,681.4 462,683.2 464.1,684.9 466.2,686.7 468.4,688.4 470.6,690.2 472.7,691.9 474.9,693.7 477.1,695.4 479.3,697.2 481.5,699 483.7,700.7 485.9,702.5 488.1,704.3 490.3,706.1 492.5,707.8 494.8,709.6 497.1,711.3 499.3,713.1 501.7,714.8 504,716.5 506.4,718.2 508.7,719.9 511.2,721.5 513.6,723.2 516,724.8 518.5,726.5 521,728.1 523.5,729.7 526,731.3 528.6,732.9 531.1,734.5 533.7,736.1 536.3,737.6 538.9,739.2 541.6,740.7 544.2,742.3 546.9,743.9 549.5,745.4 552.2,747 554.9,748.5 557.6,750 560.4,751.6"/>
<polyline points="394.2,27.3 392.8,30.9 391.5,34.5 390.1,38.1 388.8,41.6 387.5,45.2 386.2,48.7 384.9,52.3 383.6,55.8 382.3,59.3 381.1,62.8 379.9,66.3 378.6,69.8 377.4,73.3 376.2,76.8 375.1,80.2 373.9,83.7 372.8,87.1 371.6,90.5 370.5,94 369.4,97.4 368.3,100.8 367.2,104.2 366.2,107.6 365.1,111 364.1,114.3 363.1,117.7 362.1,121 361.1,124.4 360.1,127.7 359.2,131 358.2,134.4 357.3,137.7 356.4,141 355.5,144.2 354.6,147.5 353.7,150.8 352.9,154.1 352,157.3 351.2,160.5 350.4,163.8 349.6,167 348.8,170.2 348,173.4 347.3,176.6 346.5,179.8 345.8,183 345.1,186.2 344.4,189.3 343.7,192.5 343,195.6 342.4,198.8 341.7,201.9 341.1,205 340.5,208.2 339.9,211.3 339.3,214.4 338.8,217.4 338.2,220.5 337.7,223.6 337.1,226.6 336.6,229.7 336.1,232.7 335.6,235.8 335.2,238.8 334.7,241.8 334.3,244.8 333.9,247.8 333.4,250.8 333,253.8 332.7,256.8 332.3,259.8 331.9,262.7 331.6,265.7 331.3,268.6 331,271.6 330.7,274.5 330.4,277.4 330.1,280.3 329.9,283.2 329.6,286.1 329.4,289 329.2,291.9 329,294.8 328.8,297.6 328.6,300.5 328.5,303.3 328.3,306.2 328.2,309 328.1,311.8 328,314.6 327.9,317.4 327.9,320.2 327.8,323 327.8,325.8 327.7,328.6 327.8,331.3 327.8,334 327.8,336.8 327.9,339.5 327.9,342.2 328,344.9 328.2,347.6 328.3,350.2 328.4,352.9 328.6,355.6 328.8,358.2 329,360.8 329.2,363.4 329.4,366 329.7,368.6 329.9,371.2 330.2,373.8 330.5,376.4 330.8,378.9 331.1,381.5 331.5,384 331.8,386.6 332.2,389.1 332.6,391.6 333,394.1 333.4,396.6 333.8,399.1 334.3,401.6 334.7,404.1 335.2,406.6 335.7,409 336.2,411.5 336.7,414 337.2,416.4 337.8,418.8 338.3,421.3 338.9,423.7 339.4,426.1 340,428.6 340.6,431 341.2,433.4 341.9,435.8 342.5,438.2 343.2,440.6 343.8,443 344.5,445.3 345.2,447.7 345.9,450.1 346.6,452.5 347.3,454.8 348,457.2 348.8,459.5 349.6,461.8 350.4,464.2 351.2,466.5 352,468.8 352.8,471.1 353.7,473.4 354.6,475.6 355.4,477.9 356.3,480.2 357.3,482.4 358.2,484.7 359.1,486.9 360.1,489.2 361,491.4 362,493.6 363,495.8 364,498.1 365.1,500.3 366.1,502.5 367.1,504.7 368.2,506.9 369.3,509.1 370.3,511.2 371.4,513.4 372.5,515.6 373.7,517.8 374.8,519.9 375.9,522.1 377.1,524.3 378.2,526.4 379.4,528.6 380.6,530.7 381.8,532.9 383,535 384.2,537.2 385.5,539.3 386.7,541.4 388,543.5 389.2,545.7 390.5,547.8 391.8,549.9 393.1,552 394.5,554.1 395.8,556.1 397.2,558.2 398.5,560.3 399.9,562.4 401.3,564.4 402.7,566.5 404.1,568.6 405.6,570.6 407,572.7 408.5,574.7 410,576.7 411.5,578.7 413,580.8 414.5,582.8 416,584.8 417.6,586.8 419.1,588.8 420.7,590.8 422.3,592.7 423.9,594.7 425.5,596.7 427.2,598.6 428.8,600.6 430.5,602.6 432.2,604.5 433.9,606.4 435.6,608.4 437.3,610.3 439,612.2 440.8,614.1 442.6,616 444.3,617.9 446.1,619.8 447.9,621.7 449.8,623.6 451.6,625.5 453.4,627.4 455.3,629.2 457.2,631.1 459.1,633 461,634.8 462.9,636.7 464.8,638.5 466.8,640.3 468.8,642.2 470.7,644 472.7,645.8 474.7,647.6 476.8,649.4 478.8,651.2 480.8,653 482.9,654.8 485,656.6 487.1,658.4 489.2,660.2 491.3,662 493.4,663.8 495.5,665.6 497.6,667.4 499.8,669.1 502,670.9 504.1,672.7 506.3,674.4 508.5,676.2 510.8,677.9 513,679.7 515.2,681.4 517.5,683.2 519.7,684.9 522,686.7 524.3,688.4 526.6,690.2 528.9,691.9 531.2,693.7 533.5,695.4 535.8,697.2 538.1,699 540.5,700.7 542.8,702.5 545.1,704.3 547.5,706.1 549.9,707.8 552.2,709.6 554.6,711.3 557.1,713.1 559.5,714.8 562,716.5 564.5,718.2 567,719.9 569.5,721.5 572.1,723.2 574.7,724.8 577.3,726.5 579.9,728.1 582.6,729.7 585.2,731.3 587.9,732.9 590.6,734.5 593.3,736.1 596.1,737.6 598.8,739.2 601.6,740.7 604.4,742.3 607.2,743.9 610,745.4 612.8,747 615.7,748.5 618.5,750 621.4,751.6"/>
<polyline points="424.9,27.3 423.5,30.9 422.2,34.5 421,38.1 419.7,41.6 418.5,45.2 417.2,48.7 416,52.3 414.8,55.8 413.6,59.3 412.4,62.8 411.3,66.3 410.1,69.8 409,73.3 407.9,76.8 406.8,80.2 405.7,83.7 404.6,87.1 403.5,90.5 402.5,94 401.5,97.4 400.5,100.8 399.5,104.2 398.5,107.6 397.5,111 396.5,114.3 395.6,117.7 394.7,121 393.8,124.4 392.9,127.7 392,131 391.1,134.4 390.3,137.7 389.4,141 388.6,144.2 387.8,147.5 387,150.8 386.2,154.1 385.5,157.3 384.7,160.5 384,163.8 383.2,167 382.5,170.2 381.8,173.4 381.2,176.6 380.5,179.8 379.9,183 379.2,186.2 378.6,189.3 378,192.5 377.4,195.6 376.8,198.8 376.3,201.9 375.7,205 375.2,208.2 374.7,211.3 374.2,214.4 373.7,217.4 373.2,220.5 372.7,223.6 372.3,226.6 371.9,229.7 371.5,232.7 371.1,235.8 370.7,238.8 370.3,241.8 369.9,244.8 369.6,247.8 369.3,250.8 368.9,253.8 368.6,256.8 368.4,259.8 368.1,262.7 367.8,265.7 367.6,268.6 367.4,271.6 367.2,274.5 367,277.4 366.8,280.3 366.6,283.2 366.4,286.1 366.3,289 366.2,291.9 366.1,294.8 366,297.6 365.9,300.5 365.8,303.3 365.8,306.2 365.7,309 365.7,311.8 365.7,314.6 365.7,317.4 365.7,320.2 365.7,323 365.8,325.8 365.9,328.6 366,331.3 366.1,334 366.2,336.8 366.3,339.5 366.5,342.2 366.7,344.9 366.9,347.6 367.1,350.2 367.3,352.9 367.6,355.6 367.9,358.2 368.2,360.8 368.5,363.4 368.8,366 369.1,368.6 369.5,371.2 369.8,373.8 370.2,376.4 370.6,378.9 371,381.5 371.5,384 371.9,386.6 372.4,389.1 372.9,391.6 373.4,394.1 373.9,396.6 374.4,399.1 374.9,401.6 375.5,404.1 376,406.6 376.6,409 377.2,411.5 377.8,414 378.4,416.4 379.1,418.8 379.7,421.3 380.4,423.7 381.1,426.1 381.7,428.6 382.4,431 383.1,433.4 383.9,435.8 384.6,438.2 385.3,440.6 386.1,443 386.9,445.3 387.7,447.7 388.4,450.1 389.3,452.5 390.1,454.8 390.9,457.2 391.8,459.5 392.7,461.8 393.5,464.2 394.4,466.5 395.4,468.8 396.3,471.1 397.3,473.4 398.2,475.6 399.2,477.9 400.2,480.2 401.2,482.4 402.3,484.7 403.3,486.9 404.4,489.2 405.4,491.4 406.5,493.6 407.6,495.8 408.7,498.1 409.8,500.3 411,502.5 412.1,504.7 413.3,506.9 414.5,509.1 415.7,511.2 416.9,513.4 418.1,515.6 419.3,517.8 420.5,519.9 421.8,522.1 423,524.3 424.3,526.4 425.6,528.6 426.9,530.7 428.2,532.9 429.5,535 430.8,537.2 432.2,539.3 433.5,541.4 434.9,543.5 436.3,545.7 437.7,547.8 439.1,549.9 440.5,552 441.9,554.1 443.4,556.1 444.8,558.2 446.3,560.3 447.8,562.4 449.3,564.4 450.8,566.5 452.4,568.6 453.9,570.6 455.5,572.7 457,574.7 458.6,576.7 460.2,578.7 461.9,580.8 463.5,582.8 465.1,584.8 466.8,586.8 468.5,588.8 470.2,590.8 471.9,592.7 473.6,594.7 475.3,596.7 477.1,598.6 478.9,600.6 480.6,602.6 482.4,604.5 484.3,606.4 486.1,608.4 487.9,610.3 489.8,612.2 491.6,614.1 493.5,616 495.4,617.9 497.3,619.8 499.3,621.7 501.2,623.6 503.2,625.5 505.1,627.4 507.1,629.2 509.1,631.1 511.1,633 513.1,634.8 515.2,636.7 517.2,638.5 519.3,640.3 521.4,642.2 523.5,644 525.6,645.8 527.7,647.6 529.9,649.4 532,651.2 534.2,653 536.4,654.8 538.6,656.6 540.8,658.4 543,660.2 545.2,662 547.5,663.8 549.7,665.6 552,667.4 554.3,669.1 556.6,670.9 558.9,672.7 561.2,674.4 563.5,676.2 565.9,677.9 568.2,679.7 570.6,681.4 573,683.2 575.4,684.9 577.8,686.7 580.2,688.4 582.6,690.2 585,691.9 587.5,693.7 589.9,695.4 592.3,697.2 594.8,699 597.3,700.7 599.7,702.5 602.2,704.3 604.7,706.1 607.2,707.8 609.7,709.6 612.2,711.3 614.8,713.1 617.4,714.8 620,716.5 622.6,718.2 625.3,719.9 627.9,721.5 630.6,723.2 633.4,724.8 636.1,726.5 638.9,728.1 641.6,729.7 644.4,731.3 647.3,732.9 650.1,734.5 653,736.1 655.8,737.6 658.7,739.2 661.6,740.7 664.6,742.3 667.5,743.9 670.4,745.4 673.4,747 676.4,748.5 679.4,750 682.4,751.6"/>
<polyline points="455.5,27.3 454.2,30.9 453,34.5 451.8,38.1 450.6,41.6 449.4,45.2 448.3,48.7 447.1,52.3 446,55.8 444.9,59.3 443.8,62.8 442.7,66.3 441.6,69.8 440.5,73.3 439.5,76.8 438.5,80.2 437.5,83.7 436.5,87.1 435.5,90.5 434.5,94 433.5,97.4 432.6,100.8 431.7,104.2 430.8,107.6 429.9,111 429,114.3 428.1,117.7 427.3,121 426.4,124.4 425.6,127.7 424.8,131 424,134.4 423.2,137.7 422.5,141 421.7,144.2 421,147.5 420.3,150.8 419.6,154.1 418.9,157.3 418.2,160.5 417.6,163.8 416.9,167 416.3,170.2 415.7,173.4 415.1,176.6 414.5,179.8 413.9,183 413.4,186.2 412.8,189.3 412.3,192.5 411.8,195.6 411.3,198.8 410.8,201.9 410.3,205 409.9,208.2 409.4,211.3 409,214.4 408.6,217.4 408.2,220.5 407.8,223.6 407.5,226.6 407.1,229.7 406.8,232.7 406.5,235.8 406.2,238.8 405.9,241.8 405.6,244.8 405.3,247.8 405.1,250.8 404.9,253.8 404.6,256.8 404.4,259.8 404.2,262.7 404.1,265.7 403.9,268.6 403.8,271.6 403.6,274.5 403.5,277.4 403.4,280.3 403.3,283.2 403.3,286.1 403.2,289 403.2,291.9 403.2,294.8 403.1,297.6 403.1,300.5 403.2,303.3 403.2,306.2 403.2,309 403.3,311.8 403.4,314.6 403.5,317.4 403.6,320.2 403.7,323 403.8,325.8 404,328.6 404.2,331.3 404.4,334 404.6,336.8 404.8,339.5 405.1,342.2 405.3,344.9 405.6,347.6 405.9,350.2 406.3,352.9 406.6,355.6 407,358.2 407.3,360.8 407.7,363.4 408.2,366 408.6,368.6 409,371.2 409.5,373.8 410,376.4 410.5,378.9 411,381.5 411.5,384 412,386.6 412.6,389.1 413.2,391.6 413.7,394.1 414.3,396.6 415,399.1 415.6,401.6 416.2,404.1 416.9,406.6 417.6,409 418.3,411.5 419,414 419.7,416.4 420.4,418.8 421.1,421.3 421.9,423.7 422.7,426.1 423.4,428.6 424.2,431 425,433.4 425.9,435.8 426.7,438.2 427.5,440.6 428.4,443 429.3,445.3 430.1,447.7 431,450.1 431.9,452.5 432.9,454.8 433.8,457.2 434.8,459.5 435.7,461.8 436.7,464.2 437.7,466.5 438.7,468.8 439.8,471.1 440.8,473.4 441.9,475.6 443,477.9 444.1,480.2 445.2,482.4 446.3,484.7 447.5,486.9 448.6,489.2 449.8,491.4 451,493.6 452.2,495.8 453.4,498.1 454.6,500.3 455.9,502.5 457.1,504.7 458.4,506.9 459.7,509.1 461,511.2 462.3,513.4 463.6,515.6 464.9,517.8 466.3,519.9 467.6,522.1 469,524.3 470.3,526.4 471.7,528.6 473.1,530.7 474.5,532.9 476,535 477.4,537.2 478.8,539.3 480.3,541.4 481.8,543.5 483.3,545.7 484.8,547.8 486.3,549.9 487.8,552 489.4,554.1 490.9,556.1 492.5,558.2 494.1,560.3 495.7,562.4 497.3,564.4 498.9,566.5 500.6,568.6 502.2,570.6 503.9,572.7 505.6,574.7 507.3,576.7 509,578.7 510.8,580.8 512.5,582.8 514.3,584.8 516,586.8 517.8,588.8 519.6,590.8 521.5,592.7 523.3,594.7 525.1,596.7 527,598.6 528.9,600.6 530.8,602.6 532.7,604.5 534.6,606.4 536.6,608.4 538.5,610.3 540.5,612.2 542.5,614.1 544.5,616 546.5,617.9 548.5,619.8 550.6,621.7 552.6,623.6 554.7,625.5 556.8,627.4 558.9,629.2 561,631.1 563.1,633 565.3,634.8 567.5,636.7 569.6,638.5 571.8,640.3 574,642.2 576.3,644 578.5,645.8 580.8,647.6 583,649.4 585.3,651.2 587.6,653 589.9,654.8 592.2,656.6 594.5,658.4 596.9,660.2 599.2,662 601.6,663.8 604,665.6 606.4,667.4 608.8,669.1 611.2,670.9 613.6,672.7 616.1,674.4 618.5,676.2 621,677.9 623.5,679.7 626,681.4 628.5,683.2 631,684.9 633.5,686.7 636.1,688.4 638.6,690.2 641.2,691.9 643.7,693.7 646.3,695.4 648.9,697.2 651.5,699 654.1,700.7 656.6,702.5 659.3,704.3 661.9,706.1 664.5,707.8 667.2,709.6 669.8,711.3 672.5,713.1 675.2,714.8 678,716.5 680.7,718.2 683.5,719.9 686.3,721.5 689.2,723.2 692,724.8 694.9,726.5 697.8,728.1 700.7,729.7 703.6,731.3 706.6,732.9 709.6,734.5 712.6,736.1 715.6,737.6 718.6,739.2 721.7,740.7 724.7,742.3 727.8,743.9 730.9,745.4 734,747 737.1,748.5 740.2,750 743.4,751.6"/>
<polyline points="486.1,27.3 484.9,30.9 483.8,34.5 482.6,38.1 481.5,41.6 480.4,45.2 479.3,48.7 478.2,52.3 477.2,55.8 476.1,59.3 475.1,62.8 474.1,66.3 473.1,69.8 472.1,73.3 471.1,76.8 470.2,80.2 469.2,83.7 468.3,87.1 467.4,90.5 466.5,94 465.6,97.4 464.7,100.8 463.9,104.2 463.1,107.6 462.2,111 461.4,114.3 460.6,117.7 459.9,121 459.1,124.4 458.4,127.7 457.6,131 456.9,134.4 456.2,137.7 455.5,141 454.8,144.2 454.2,147.5 453.6,150.8 452.9,154.1 452.3,157.3 451.7,160.5 451.1,163.8 450.6,167 450,170.2 449.5,173.4 449,176.6 448.5,179.8 448,183 447.5,186.2 447,189.3 446.6,192.5 446.1,195.6 445.7,198.8 445.3,201.9 444.9,205 444.6,208.2 444.2,211.3 443.9,214.4 443.5,217.4 443.2,220.5 442.9,223.6 442.6,226.6 442.4,229.7 442.1,232.7 441.9,235.8 441.7,238.8 441.4,241.8 441.3,244.8 441.1,247.8 440.9,250.8 440.8,253.8 440.6,256.8 440.5,259.8 440.4,262.7 440.3,265.7 440.2,268.6 440.2,271.6 440.1,274.5 440.1,277.4 440.1,280.3 440.1,283.2 440.1,286.1 440.1,289 440.2,291.9 440.2,294.8 440.3,297.6 440.4,300.5 440.5,303.3 440.6,306.2 440.8,309 440.9,311.8 441.1,314.6 441.2,317.4 441.4,320.2 441.6,323 441.9,325.8 442.1,328.6 442.4,331.3 442.7,334 443,336.8 443.3,339.5 443.6,342.2 444,344.9 444.4,347.6 444.8,350.2 445.2,352.9 445.6,355.6 446.1,358.2 446.5,360.8 447,363.4 447.5,366 448,368.6 448.6,371.2 449.1,373.8 449.7,376.4 450.3,378.9 450.9,381.5 451.5,384 452.1,386.6 452.8,389.1 453.4,391.6 454.1,394.1 454.8,396.6 455.5,399.1 456.3,401.6 457,404.1 457.7,406.6 458.5,409 459.3,411.5 460.1,414 460.9,416.4 461.7,418.8 462.6,421.3 463.4,423.7 464.3,426.1 465.2,428.6 466,431 466.9,433.4 467.9,435.8 468.8,438.2 469.7,440.6 470.7,443 471.6,445.3 472.6,447.7 473.6,450.1 474.6,452.5 475.6,454.8 476.7,457.2 477.7,459.5 478.8,461.8 479.9,464.2 481,466.5 482.1,468.8 483.3,471.1 484.4,473.4 485.6,475.6 486.8,477.9 488,480.2 489.2,482.4 490.4,484.7 491.7,486.9 492.9,489.2 494.2,491.4 495.5,493.6 496.8,495.8 498.1,498.1 499.4,500.3 500.8,502.5 502.1,504.7 503.5,506.9 504.9,509.1 506.3,511.2 507.7,513.4 509.1,515.6 510.6,517.8 512,519.9 513.5,522.1 514.9,524.3 516.4,526.4 517.9,528.6 519.4,530.7 520.9,532.9 522.4,535 524,537.2 525.5,539.3 527.1,541.4 528.7,543.5 530.3,545.7 531.9,547.8 533.5,549.9 535.2,552 536.8,554.1 538.5,556.1 540.2,558.2 541.9,560.3 543.6,562.4 545.3,564.4 547.1,566.5 548.8,568.6 550.6,570.6 552.4,572.7 554.2,574.7 556,576.7 557.8,578.7 559.7,580.8 561.5,582.8 563.4,584.8 565.3,586.8 567.2,588.8 569.1,590.8 571,592.7 573,594.7 575,596.7 576.9,598.6 578.9,600.6 580.9,602.6 583,604.5 585,606.4 587.1,608.4 589.2,610.3 591.2,612.2 593.3,614.1 595.5,616 597.6,617.9 599.7,619.8 601.9,621.7 604.1,623.6 606.3,625.5 608.5,627.4 610.7,629.2 612.9,631.1 615.2,633 617.4,634.8 619.7,636.7 622,638.5 624.3,640.3 626.7,642.2 629,644 631.4,645.8 633.8,647.6 636.1,649.4 638.5,651.2 641,653 643.4,654.8 645.8,656.6 648.3,658.4 650.8,660.2 653.2,662 655.7,663.8 658.2,665.6 660.7,667.4 663.3,669.1 665.8,670.9 668.4,672.7 670.9,674.4 673.5,676.2 676.1,677.9 678.7,679.7 681.4,681.4 684,683.2 686.6,684.9 689.3,686.7 692,688.4 694.6,690.2 697.3,691.9 700,693.7 702.7,695.4 705.4,697.2 708.1,699 710.9,700.7 713.6,702.5 716.3,704.3 719.1,706.1 721.8,707.8 724.6,709.6 727.4,711.3 730.2,713.1 733.1,714.8 736,716.5 738.9,718.2 741.8,719.9 744.7,721.5 747.7,723.2 750.7,724.8 753.7,726.5 756.7,728.1 759.8,729.7 762.8,731.3 765.9,732.9 769.1,734.5 772.2,736.1 775.3,737.6 778.5,739.2 781.7,740.7 784.9,742.3 788.1,743.9 791.3,745.4 794.6,747 797.8,748.5 801.1,750 804.4,751.6"/>
<polyline points="516.7,27.3 515.6,30.9 514.6,34.5 513.5,38.1 512.4,41.6 511.4,45.2 510.4,48.7 509.4,52.3 508.4,55.8 507.4,59.3 506.4,62.8 505.5,66.3 504.6,69.8 503.7,73.3 502.8,76.8 501.9,80.2 501,83.7 500.2,87.1 499.3,90.5 498.5,94 497.7,97.4 496.9,100.8 496.1,104.2 495.4,107.6 494.6,111 493.9,114.3 493.2,117.7 492.5,121 491.8,124.4 491.1,127.7 490.4,131 489.8,134.4 489.2,137.7 488.6,141 488,144.2 487.4,147.5 486.8,150.8 486.3,154.1 485.7,157.3 485.2,160.5 484.7,163.8 484.2,167 483.8,170.2 483.3,173.4 482.9,176.6 482.4,179.8 482,183 481.6,186.2 481.2,189.3 480.9,192.5 480.5,195.6 480.2,198.8 479.8,201.9 479.5,205 479.2,208.2 479,211.3 478.7,214.4 478.5,217.4 478.2,220.5 478,223.6 477.8,226.6 477.6,229.7 477.4,232.7 477.3,235.8 477.1,238.8 477,241.8 476.9,244.8 476.8,247.8 476.7,250.8 476.7,253.8 476.6,256.8 476.6,259.8 476.6,262.7 476.5,265.7 476.6,268.6 476.6,271.6 476.6,274.5 476.7,277.4 476.7,280.3 476.8,283.2 476.9,286.1 477,289 477.2,291.9 477.3,294.8 477.5,297.6 477.6,300.5 477.8,303.3 478,306.2 478.3,309 478.5,311.8 478.7,314.6 479,317.4 479.3,320.2 479.6,323 479.9,325.8 480.2,328.6 480.6,331.3 481,334 481.4,336.8 481.8,339.5 482.2,342.2 482.7,344.9 483.1,347.6 483.6,350.2 484.1,352.9 484.6,355.6 485.2,358.2 485.7,360.8 486.3,363.4 486.9,366 487.5,368.6 488.1,371.2 488.8,373.8 489.4,376.4 490.1,378.9 490.8,381.5 491.5,384 492.2,386.6 493,389.1 493.7,391.6 494.5,394.1 495.3,396.6 496.1,399.1 496.9,401.6 497.8,404.1 498.6,406.6 499.5,409 500.3,411.5 501.2,414 502.1,416.4 503.1,418.8 504,421.3 504.9,423.7 505.9,426.1 506.9,428.6 507.9,431 508.8,433.4 509.9,435.8 510.9,438.2 511.9,440.6 513,443 514,445.3 515.1,447.7 516.2,450.1 517.3,452.5 518.4,454.8 519.6,457.2 520.7,459.5 521.9,461.8 523.1,464.2 524.3,466.5 525.5,468.8 526.7,471.1 528,473.4 529.3,475.6 530.5,477.9 531.8,480.2 533.2,482.4 534.5,484.7 535.8,486.9 537.2,489.2 538.6,491.4 540,493.6 541.4,495.8 542.8,498.1 544.2,500.3 545.7,502.5 547.1,504.7 548.6,506.9 550.1,509.1 551.6,511.2 553.1,513.4 554.6,515.6 556.2,517.8 557.7,519.9 559.3,522.1 560.9,524.3 562.5,526.4 564.1,528.6 565.7,530.7 567.3,532.9 568.9,535 570.6,537.2 572.2,539.3 573.9,541.4 575.6,543.5 577.3,545.7 579,547.8 580.8,549.9 582.5,552 584.3,554.1 586.1,556.1 587.9,558.2 589.7,560.3 591.5,562.4 593.3,564.4 595.2,566.5 597,568.6 598.9,570.6 600.8,572.7 602.7,574.7 604.7,576.7 606.6,578.7 608.6,580.8 610.5,582.8 612.5,584.8 614.5,586.8 616.5,588.8 618.6,590.8 620.6,592.7 622.7,594.7 624.8,596.7 626.9,598.6 629,600.6 631.1,602.6 633.2,604.5 635.4,606.4 637.6,608.4 639.8,610.3 642,612.2 644.2,614.1 646.4,616 648.7,617.9 651,619.8 653.2,621.7 655.5,623.6 657.8,625.5 660.2,627.4 662.5,629.2 664.8,631.1 667.2,633 669.6,634.8 672,636.7 674.4,638.5 676.9,640.3 679.3,642.2 681.8,644 684.3,645.8 686.8,647.6 689.3,649.4 691.8,651.2 694.3,653 696.9,654.8 699.5,656.6 702,658.4 704.6,660.2 707.2,662 709.8,663.8 712.5,665.6 715.1,667.4 717.8,669.1 720.4,670.9 723.1,672.7 725.8,674.4 728.5,676.2 731.2,677.9 734,679.7 736.7,681.4 739.5,683.2 742.3,684.9 745.1,686.7 747.9,688.4 750.7,690.2 753.5,691.9 756.3,693.7 759.1,695.4 762,697.2 764.8,699 767.7,700.7 770.5,702.5 773.4,704.3 776.3,706.1 779.2,707.8 782.1,709.6 785,711.3 788,713.1 790.9,714.8 793.9,716.5 797,718.2 800,719.9 803.1,721.5 806.2,723.2 809.3,724.8 812.5,726.5 815.7,728.1 818.8,729.7 822.1,731.3 825.3,732.9 828.5,734.5 831.8,736.1 835.1,737.6 838.4,739.2 841.7,740.7 845.1,742.3 848.4,743.9 851.8,745.4 855.2,747 858.6,748.5 862,750 865.4,751.6"/>
<polyline points="547.4,27.3 546.3,30.9 545.3,34.5 544.3,38.1 543.3,41.6 542.4,45.2 541.4,48.7 540.5,52.3 539.6,55.8 538.7,59.3 537.8,62.8 536.9,66.3 536.1,69.8 535.2,73.3 534.4,76.8 533.6,80.2 532.8,83.7 532,87.1 531.2,90.5 530.5,94 529.8,97.4 529,100.8 528.3,104.2 527.6,107.6 527,111 526.3,114.3 525.7,117.7 525,121 524.4,124.4 523.8,127.7 523.3,131 522.7,134.4 522.1,137.7 521.6,141 521.1,144.2 520.6,147.5 520.1,150.8 519.6,154.1 519.2,157.3 518.7,160.5 518.3,163.8 517.9,167 517.5,170.2 517.1,173.4 516.7,176.6 516.4,179.8 516.1,183 515.7,186.2 515.4,189.3 515.1,192.5 514.9,195.6 514.6,198.8 514.4,201.9 514.1,205 513.9,208.2 513.7,211.3 513.5,214.4 513.4,217.4 513.2,220.5 513.1,223.6 513,226.6 512.9,229.7 512.8,232.7 512.7,235.8 512.6,238.8 512.6,241.8 512.6,244.8 512.6,247.8 512.6,250.8 512.6,253.8 512.6,256.8 512.6,259.8 512.7,262.7 512.8,265.7 512.9,268.6 513,271.6 513.1,274.5 513.2,277.4 513.4,280.3 513.6,283.2 513.8,286.1 514,289 514.2,291.9 514.4,294.8 514.6,297.6 514.9,300.5 515.2,303.3 515.5,306.2 515.8,309 516.1,311.8 516.4,314.6 516.8,317.4 517.2,320.2 517.5,323 517.9,325.8 518.4,328.6 518.8,331.3 519.3,334 519.7,336.8 520.2,339.5 520.8,342.2 521.3,344.9 521.9,347.6 522.4,350.2 523,352.9 523.6,355.6 524.3,358.2 524.9,360.8 525.6,363.4 526.3,366 527,368.6 527.7,371.2 528.4,373.8 529.2,376.4 529.9,378.9 530.7,381.5 531.5,384 532.3,386.6 533.2,389.1 534,391.6 534.9,394.1 535.8,396.6 536.7,399.1 537.6,401.6 538.5,404.1 539.5,406.6 540.4,409 541.4,411.5 542.4,414 543.4,416.4 544.4,418.8 545.4,421.3 546.4,423.7 547.5,426.1 548.6,428.6 549.7,431 550.8,433.4 551.9,435.8 553,438.2 554.1,440.6 555.3,443 556.4,445.3 557.6,447.7 558.8,450.1 560,452.5 561.2,454.8 562.4,457.2 563.7,459.5 565,461.8 566.2,464.2 567.5,466.5 568.9,468.8 570.2,471.1 571.6,473.4 572.9,475.6 574.3,477.9 575.7,480.2 577.1,482.4 578.6,484.7 580,486.9 581.5,489.2 583,491.4 584.5,493.6 586,495.8 587.5,498.1 589,500.3 590.6,502.5 592.2,504.7 593.7,506.9 595.3,509.1 596.9,511.2 598.5,513.4 600.2,515.6 601.8,517.8 603.5,519.9 605.1,522.1 606.8,524.3 608.5,526.4 610.2,528.6 611.9,530.7 613.7,532.9 615.4,535 617.2,537.2 618.9,539.3 620.7,541.4 622.5,543.5 624.3,545.7 626.2,547.8 628,549.9 629.9,552 631.7,554.1 633.6,556.1 635.5,558.2 637.4,560.3 639.4,562.4 641.3,564.4 643.3,566.5 645.3,568.6 647.3,570.6 649.3,572.7 651.3,574.7 653.3,576.7 655.4,578.7 657.4,580.8 659.5,582.8 661.6,584.8 663.7,586.8 665.9,588.8 668,590.8 670.2,592.7 672.4,594.7 674.6,596.7 676.8,598.6 679,600.6 681.3,602.6 683.5,604.5 685.8,606.4 688.1,608.4 690.4,610.3 692.7,612.2 695.1,614.1 697.4,616 699.8,617.9 702.2,619.8 704.6,621.7 707,623.6 709.4,625.5 711.8,627.4 714.3,629.2 716.8,631.1 719.3,633 721.8,634.8 724.3,636.7 726.8,638.5 729.4,640.3 732,642.2 734.5,644 737.1,645.8 739.8,647.6 742.4,649.4 745,651.2 747.7,653 750.4,654.8 753.1,656.6 755.8,658.4 758.5,660.2 761.2,662 764,663.8 766.7,665.6 769.5,667.4 772.2,669.1 775,670.9 777.9,672.7 780.7,674.4 783.5,676.2 786.4,677.9 789.2,679.7 792.1,681.4 795,683.2 797.9,684.9 800.8,686.7 803.7,688.4 806.7,690.2 809.6,691.9 812.6,693.7 815.5,695.4 818.5,697.2 821.5,699 824.5,700.7 827.4,702.5 830.4,704.3 833.5,706.1 836.5,707.8 839.5,709.6 842.6,711.3 845.7,713.1 848.8,714.8 851.9,716.5 855.1,718.2 858.3,719.9 861.5,721.5 864.7,723.2 868,724.8 871.3,726.5 874.6,728.1 877.9,729.7 881.3,731.3 884.6,732.9 888,734.5 891.4,736.1 894.9,737.6 898.3,739.2 901.8,740.7 905.2,742.3 908.7,743.9 912.2,745.4 915.8,747 919.3,748.5 922.8,750 926.4,751.6"/>
<polyline points="578,27.3 577,30.9 576.1,34.5 575.2,38.1 574.3,41.6 573.4,45.2 572.5,48.7 571.6,52.3 570.8,55.8 569.9,59.3 569.1,62.8 568.3,66.3 567.5,69.8 566.8,73.3 566,76.8 565.3,80.2 564.6,83.7 563.9,87.1 563.2,90.5 562.5,94 561.8,97.4 561.2,100.8 560.6,104.2 559.9,107.6 559.3,111 558.8,114.3 558.2,117.7 557.6,121 557.1,124.4 556.6,127.7 556.1,131 555.6,134.4 555.1,137.7 554.7,141 554.2,144.2 553.8,147.5 553.4,150.8 553,154.1 552.6,157.3 552.2,160.5 551.9,163.8 551.6,167 551.2,170.2 550.9,173.4 550.6,176.6 550.4,179.8 550.1,183 549.9,186.2 549.6,189.3 549.4,192.5 549.2,195.6 549.1,198.8 548.9,201.9 548.7,205 548.6,208.2 548.5,211.3 548.4,214.4 548.3,217.4 548.2,220.5 548.2,223.6 548.1,226.6 548.1,229.7 548.1,232.7 548.1,235.8 548.1,238.8 548.2,241.8 548.2,244.8 548.3,247.8 548.4,250.8 548.5,253.8 548.6,256.8 548.7,259.8 548.9,262.7 549,265.7 549.2,268.6 549.4,271.6 549.6,274.5 549.8,277.4 550.1,280.3 550.3,283.2 550.6,286.1 550.9,289 551.2,291.9 551.5,294.8 551.8,297.6 552.2,300.5 552.5,303.3 552.9,306.2 553.3,309 553.7,311.8 554.1,314.6 554.6,317.4 555,320.2 555.5,323 556,325.8 556.5,328.6 557,331.3 557.6,334 558.1,336.8 558.7,339.5 559.3,342.2 560,344.9 560.6,347.6 561.3,350.2 562,352.9 562.7,355.6 563.4,358.2 564.1,360.8 564.9,363.4 565.6,366 566.4,368.6 567.2,371.2 568.1,373.8 568.9,376.4 569.8,378.9 570.7,381.5 571.5,384 572.5,386.6 573.4,389.1 574.3,391.6 575.3,394.1 576.3,396.6 577.2,399.1 578.2,401.6 579.3,404.1 580.3,406.6 581.4,409 582.4,411.5 583.5,414 584.6,416.4 585.7,418.8 586.8,421.3 588,423.7 589.1,426.1 590.3,428.6 591.5,431 592.7,433.4 593.9,435.8 595.1,438.2 596.3,440.6 597.5,443 598.8,445.3 600.1,447.7 601.4,450.1 602.7,452.5 604,454.8 605.3,457.2 606.7,459.5 608,461.8 609.4,464.2 610.8,466.5 612.2,468.8 613.7,471.1 615.1,473.4 616.6,475.6 618.1,477.9 619.6,480.2 621.1,482.4 622.7,484.7 624.2,486.9 625.8,489.2 627.4,491.4 629,493.6 630.6,495.8 632.2,498.1 633.8,500.3 635.5,502.5 637.2,504.7 638.8,506.9 640.5,509.1 642.2,511.2 644,513.4 645.7,515.6 647.4,517.8 649.2,519.9 651,522.1 652.8,524.3 654.6,526.4 656.4,528.6 658.2,530.7 660,532.9 661.9,535 663.7,537.2 665.6,539.3 667.5,541.4 669.4,543.5 671.3,545.7 673.3,547.8 675.2,549.9 677.2,552 679.2,554.1 681.2,556.1 683.2,558.2 685.2,560.3 687.3,562.4 689.3,564.4 691.4,566.5 693.5,568.6 695.6,570.6 697.7,572.7 699.8,574.7 702,576.7 704.2,578.7 706.3,580.8 708.5,582.8 710.8,584.8 713,586.8 715.2,588.8 717.5,590.8 719.8,592.7 722.1,594.7 724.4,596.7 726.7,598.6 729,600.6 731.4,602.6 733.8,604.5 736.2,606.4 738.6,608.4 741,610.3 743.4,612.2 745.9,614.1 748.4,616 750.9,617.9 753.4,619.8 755.9,621.7 758.4,623.6 761,625.5 763.5,627.4 766.1,629.2 768.7,631.1 771.3,633 773.9,634.8 776.6,636.7 779.2,638.5 781.9,640.3 784.6,642.2 787.3,644 790,645.8 792.8,647.6 795.5,649.4 798.3,651.2 801.1,653 803.9,654.8 806.7,656.6 809.5,658.4 812.4,660.2 815.2,662 818.1,663.8 820.9,665.6 823.8,667.4 826.7,669.1 829.7,670.9 832.6,672.7 835.5,674.4 838.5,676.2 841.5,677.9 844.5,679.7 847.5,681.4 850.5,683.2 853.5,684.9 856.6,686.7 859.6,688.4 862.7,690.2 865.8,691.9 868.9,693.7 871.9,695.4 875,697.2 878.1,699 881.3,700.7 884.4,702.5 887.5,704.3 890.7,706.1 893.8,707.8 897,709.6 900.2,711.3 903.4,713.1 906.7,714.8 909.9,716.5 913.2,718.2 916.6,719.9 919.9,721.5 923.3,723.2 926.7,724.8 930.1,726.5 933.5,728.1 937,729.7 940.5,731.3 944,732.9 947.5,734.5 951,736.1 954.6,737.6 958.2,739.2 961.8,740.7 965.4,742.3 969,743.9 972.7,745.4 976.3,747 980,748.5 983.7,750 987.4,751.6"/>
</g>
<g fill="none" stroke="#000080" stroke-width="1">
<polyline points="72,751.6 71.7,751.2 71.3,750.9 70.9,750.5 70.6,750.1 70.2,749.8 69.8,749.4 69.5,749 69.1,748.7 68.7,748.3 68.4,747.9 68,747.6 67.6,747.2 67.3,746.8 66.9,746.5 66.5,746.1 66.2,745.7 65.8,745.3 65.4,745 65.1,744.6 64.7,744.2 64.3,743.8 64,743.5 63.6,743.1 63.2,742.7 62.8,742.3 62.5,741.9 62.1,741.6 61.7,741.2 61.4,740.8 61,740.4 60.6,740 60.2,739.6 59.9,739.2 59.5,738.9 59.1,738.5 58.8,738.1 58.4,737.7 58,737.3 57.6,736.9 57.3,736.5 56.9,736.1 56.5,735.7 56.1,735.3 55.8,734.9 55.4,734.5 55,734.1 54.7,733.7 54.3,733.3 53.9,732.9 53.5,732.5 53.2,732.1 52.8,731.6 52.4,731.2 52.1,730.8 51.7,730.4 51.3,730 51,729.5 50.6,729.1 50.2,728.7 49.9,728.3 49.5,727.8 49.1,727.4 48.8,727 48.4,726.6 48,726.1 47.7,725.7 47.3,725.2 46.9,724.8 46.6,724.4 46.2,723.9 45.8,723.5 45.5,723 45.1,722.6 44.8,722.1 44.4,721.7 44,721.2 43.7,720.8 43.3,720.3 43,719.9 42.6,719.4 42.2,718.9 41.9,718.5 41.5,718 41.2,717.5 40.8,717.1 40.5,716.6 40.1,716.1 39.8,715.6 39.4,715.2 39.1,714.7 38.7,714.2 38.4,713.7 38,713.2 37.7,712.7 37.3,712.2 37,711.7 36.6,711.2 36.3,710.7 35.9,710.2 35.6,709.7 35.2,709.2 34.9,708.7 34.6,708.2 34.2,707.7 33.9,707.2 33.5,706.7 33.2,706.1 32.9,705.6 32.5,705.1 32.2,704.6 31.8,704.1 31.5,703.5 31.1,703 30.8,702.5 30.5,702 30.1,701.4 29.8,700.9 29.4,700.4 29.1,699.8 28.8,699.3 28.4,698.8 28.1,698.2 27.7,697.7 27.4,697.1 27,696.6 26.7,696.1 26.3,695.5 26,695 25.6,694.4 25.3,693.9 24.9,693.4 24.6,692.8 24.2,692.3 23.9,691.7 23.5,691.2 23.2,690.6 22.8,690.1 22.5,689.5 22.1,689 21.7,688.4 21.4,687.9 21,687.3 20.7,686.7 20.3,686.2 20,685.6 19.6,685 19.2,684.5 18.9,683.9 18.5,683.3 18.2,682.8 17.8,682.2 17.5,681.6 17.1,681.1 16.7,680.5 16.4,679.9 16,679.3 15.7,678.7 15.3,678.2 14.9,677.6 14.6,677 14.2,676.4 13.9,675.8 13.5,675.2 13.2,674.6 12.8,674 12.4,673.4 12.1,672.8 11.7,672.2 11.4,671.6 11,671 10.7,670.4 10.3,669.8 9.9,669.2 9.6,668.6 9.2,667.9 8.9,667.3 8.5,666.7 8.2,666.1 7.8,665.4 7.5,664.8 7.1,664.2 6.7,663.5 6.4,662.9 6,662.3 5.7,661.6 5.3,661 5,660.3 4.6,659.7 4.3,659 3.9,658.4 3.6,657.7 3.2,657.1 2.9,656.4 2.5,655.7 2.2,655.1 1.8,654.4 1.5,653.7 1.1,653.1 0.7,652.4 0.4,651.7 0,651.1 -0.3,650.4 -0.7,649.7 -1,649 -1.4,648.3 -1.7,647.6 -2.1,646.9 -2.4,646.2 -2.8,645.5 -3.1,644.8 -3.5,644.1 -3.8,643.4 -4.1,642.7 -4.5,642 -4.8,641.3 -5.2,640.6 -5.5,639.8 -5.9,639.1 -6.2,638.4 -6.5,637.6 -6.9,636.9 -7.2,636.2 -7.6,635.4 -7.9,634.7 -8.2,633.9 -8.6,633.2 -8.9,632.4 -9.2,631.6 -9.6,630.9 -9.9,630.1 -10.2,629.3 -10.5,628.5 -10.9,627.8 -11.2,627 -11.5,626.2 -11.8,625.4 -12.2,624.6 -12.5,623.8 -12.8,623 -13.1,622.2 -13.5,621.4 -13.8,620.6 -14.1,619.8 -14.4,618.9 -14.7,618.1 -15,617.3 -15.4,616.5 -15.7,615.6 -16,614.8 -16.3,613.9 -16.6,613.1 -16.9,612.2 -17.2,611.4 -17.5,610.5 -17.8,609.7 -18.1,608.8 -18.4,607.9 -18.7,607 -19,606.2 -19.3,605.3 -19.6,604.4 -19.9,603.5 -20.2,602.6 -20.5,601.7 -20.8,600.8 -21.1,599.8 -21.4,598.9 -21.7,598 -22,597.1 -22.3,596.1 -22.5,595.2 -22.8,594.3 -23.1,593.3 -23.4,592.3 -23.6,591.4 -23.9,590.4 -24.2,589.4 -24.5,588.5 -24.7,587.5 -25,586.5 -25.2,585.5 -25.5,584.5 -25.8,583.5 -26,582.5 -26.3,581.5 -26.5,580.5 -26.8,579.4 -27,578.4 -27.3,577.4 -27.5,576.3 -27.8,575.3 -28,574.2 -28.2,573.1 -28.5,572.1 -28.7,571 -28.9,569.9 -29.2,568.8 -29.4,567.7 -29.6,566.6 -29.9,565.5 -30.1,564.4 -30.3,563.3 -30.5,562.2 -30.7,561 -30.9,559.9 -31.1,558.7 -31.3,557.6 -31.5,556.4 -31.7,555.3 -31.9,554.1 -32.1,552.9 -32.3,551.7 -32.5,550.5 -32.7,549.3 -32.9,548.1 -33.1,546.9 -33.3,545.7 -33.4,544.4 -33.6,543.2 -33.8,541.9 -33.9,540.7 -34.1,539.4 -34.3,538.1 -34.4,536.9 -34.6,535.6 -34.7,534.3 -34.9,533 -35,531.7 -35.2,530.3 -35.3,529 -35.4,527.7 -35.6,526.3 -35.7,525 -35.8,523.6 -36,522.2 -36.1,520.8 -36.2,519.5 -36.3,518.1 -36.4,516.7 -36.5,515.2 -36.6,513.8 -36.7,512.4 -36.8,510.9 -36.9,509.5 -37,508 -37.1,506.6 -37.2,505.1 -37.3,503.6 -37.4,502.1 -37.4,500.6 -37.5,499 -37.6,497.5 -37.6,496 -37.7,494.4 -37.7,492.8 -37.7,491.3 -37.8,489.7 -37.8,488.1 -37.8,486.4 -37.9,484.8 -37.9,483.2 -37.9,481.5 -37.9,479.8 -37.9,478.1 -37.8,476.4 -37.8,474.7 -37.8,473 -37.7,471.3 -37.7,469.5 -37.6,467.7 -37.6,465.9 -37.5,464.1 -37.4,462.3 -37.3,460.4 -37.2,458.6 -37.1,456.7 -37,454.8 -36.9,452.9 -36.7,451 -36.6,449 -36.4,447 -36.3,445 -36.1,443 -35.9,441 -35.7,439 -35.5,436.9 -35.3,434.8 -35.1,432.8 -34.9,430.6 -34.6,428.5 -34.4,426.4 -34.1,424.2 -33.9,422 -33.6,419.8 -33.3,417.6 -33,415.3 -32.7,413 -32.4,410.7 -32,408.4 -31.7,406.1 -31.3,403.7 -31,401.3 -30.6,398.9 -30.2,396.5 -29.7,394 -29.3,391.5 -28.9,388.9 -28.4,386.4 -27.9,383.8 -27.4,381.2 -26.9,378.5 -26.3,375.9 -25.8,373.1 -25.2,370.4 -24.6,367.6 -24,364.8 -23.3,361.9 -22.6,359 -21.9,356.1 -21.2,353.1 -20.5,350.1 -19.7,347.1 -18.9,344 -18.1,340.8 -17.2,337.7 -16.3,334.4 -15.4,331.1 -14.4,327.8 -13.4,324.4 -12.4,321 -11.4,317.5 -10.3,314 -9.1,310.4 -8,306.8 -6.8,303.1 -5.6,299.4 -4.3,295.6"/>
<polyline points="132.6,751.6 132.2,751.2 131.9,750.9 131.5,750.5 131.1,750.1 130.7,749.8 130.3,749.4 129.9,749 129.6,748.7 129.2,748.3 128.8,747.9 128.4,747.6 128,747.2 127.6,746.8 127.2,746.5 126.8,746.1 126.5,745.7 126.1,745.3 125.7,745 125.3,744.6 124.9,744.2 124.5,743.8 124.1,743.5 123.7,743.1 123.3,742.7 123,742.3 122.6,741.9 122.2,741.6 121.8,741.2 121.4,740.8 121,740.4 120.6,740 120.2,739.6 119.8,739.2 119.4,738.9 119,738.5 118.6,738.1 118.2,737.7 117.8,737.3 117.4,736.9 117,736.5 116.6,736.1 116.2,735.7 115.8,735.3 115.4,734.9 115,734.5 114.7,734.1 114.3,733.7 113.9,733.3 113.5,732.9 113.1,732.5 112.7,732.1 112.3,731.6 111.9,731.2 111.5,730.8 111.1,730.4 110.7,730 110.3,729.5 109.9,729.1 109.5,728.7 109.1,728.3 108.7,727.8 108.3,727.4 107.9,727 107.6,726.6 107.2,726.1 106.8,725.7 106.4,725.2 106,724.8 105.6,724.4 105.2,723.9 104.8,723.5 104.4,723 104,722.6 103.6,722.1 103.3,721.7 102.9,721.2 102.5,720.8 102.1,720.3 101.7,719.9 101.3,719.4 100.9,718.9 100.5,718.5 100.1,718 99.8,717.5 99.4,717.1 99,716.6 98.6,716.1 98.2,715.6 97.8,715.2 97.5,714.7 97.1,714.2 96.7,713.7 96.3,713.2 95.9,712.7 95.6,712.2 95.2,711.7 94.8,711.2 94.4,710.7 94.1,710.2 93.7,709.7 93.3,709.2 92.9,708.7 92.6,708.2 92.2,707.7 91.8,707.2 91.4,706.7 91.1,706.1 90.7,705.6 90.3,705.1 89.9,704.6 89.6,704.1 89.2,703.5 88.8,703 88.4,702.5 88.1,702 87.7,701.4 87.3,700.9 86.9,700.4 86.6,699.8 86.2,699.3 85.8,698.8 85.4,698.2 85,697.7 84.7,697.1 84.3,696.6 83.9,696.1 83.5,695.5 83.1,695 82.7,694.4 82.3,693.9 82,693.4 81.6,692.8 81.2,692.3 80.8,691.7 80.4,691.2 80,690.6 79.6,690.1 79.2,689.5 78.8,689 78.4,688.4 78,687.9 77.7,687.3 77.3,686.7 76.9,686.2 76.5,685.6 76.1,685 75.7,684.5 75.3,683.9 74.9,683.3 74.5,682.8 74.1,682.2 73.7,681.6 73.3,681.1 72.9,680.5 72.5,679.9 72.1,679.3 71.7,678.7 71.3,678.2 70.9,677.6 70.5,677 70.1,676.4 69.7,675.8 69.3,675.2 68.9,674.6 68.5,674 68.1,673.4 67.7,672.8 67.3,672.2 66.9,671.6 66.5,671 66.1,670.4 65.7,669.8 65.3,669.2 64.9,668.6 64.5,667.9 64.1,667.3 63.7,666.7 63.3,666.1 62.9,665.4 62.6,664.8 62.2,664.2 61.8,663.5 61.4,662.9 61,662.3 60.6,661.6 60.2,661 59.8,660.3 59.4,659.7 59,659 58.6,658.4 58.2,657.7 57.8,657.1 57.4,656.4 57,655.7 56.6,655.1 56.2,654.4 55.8,653.7 55.4,653.1 55,652.4 54.6,651.7 54.2,651.1 53.8,650.4 53.4,649.7 53,649 52.6,648.3 52.2,647.6 51.8,646.9 51.4,646.2 51.1,645.5 50.7,644.8 50.3,644.1 49.9,643.4 49.5,642.7 49.1,642 48.7,641.3 48.3,640.6 47.9,639.8 47.5,639.1 47.1,638.4 46.7,637.6 46.4,636.9 46,636.2 45.6,635.4 45.2,634.7 44.8,633.9 44.4,633.2 44.1,632.4 43.7,631.6 43.3,630.9 42.9,630.1 42.5,629.3 42.2,628.5 41.8,627.8 41.4,627 41,626.2 40.7,625.4 40.3,624.6 39.9,623.8 39.5,623 39.2,622.2 38.8,621.4 38.4,620.6 38.1,619.8 37.7,618.9 37.3,618.1 36.9,617.3 36.6,616.5 36.2,615.6 35.9,614.8 35.5,613.9 35.1,613.1 34.8,612.2 34.4,611.4 34,610.5 33.7,609.7 33.3,608.8 33,607.9 32.6,607 32.3,606.2 31.9,605.3 31.6,604.4 31.2,603.5 30.9,602.6 30.5,601.7 30.2,600.8 29.8,599.8 29.5,598.9 29.1,598 28.8,597.1 28.5,596.1 28.1,595.2 27.8,594.3 27.5,593.3 27.1,592.3 26.8,591.4 26.5,590.4 26.1,589.4 25.8,588.5 25.5,587.5 25.2,586.5 24.8,585.5 24.5,584.5 24.2,583.5 23.9,582.5 23.6,581.5 23.3,580.5 23,579.4 22.7,578.4 22.3,577.4 22,576.3 21.7,575.3 21.4,574.2 21.1,573.1 20.8,572.1 20.6,571 20.3,569.9 20,568.8 19.7,567.7 19.4,566.6 19.1,565.5 18.8,564.4 18.6,563.3 18.3,562.2 18,561 17.7,559.9 17.5,558.7 17.2,557.6 16.9,556.4 16.7,555.3 16.4,554.1 16.2,552.9 15.9,551.7 15.6,550.5 15.4,549.3 15.1,548.1 14.9,546.9 14.7,545.7 14.4,544.4 14.2,543.2 13.9,541.9 13.7,540.7 13.5,539.4 13.3,538.1 13,536.9 12.8,535.6 12.6,534.3 12.4,533 12.2,531.7 12,530.3 11.8,529 11.6,527.7 11.4,526.3 11.2,525 11,523.6 10.8,522.2 10.6,520.8 10.4,519.5 10.2,518.1 10,516.7 9.8,515.2 9.7,513.8 9.5,512.4 9.3,510.9 9.2,509.5 9,508 8.8,506.6 8.7,505.1 8.5,503.6 8.4,502.1 8.2,500.6 8.1,499 8,497.5 7.8,496 7.7,494.4 7.6,492.8 7.5,491.3 7.4,489.7 7.3,488.1 7.2,486.4 7.1,484.8 7,483.2 6.9,481.5 6.8,479.8 6.8,478.1 6.7,476.4 6.6,474.7 6.6,473 6.6,471.3 6.5,469.5 6.5,467.7 6.5,465.9 6.5,464.1 6.5,462.3 6.5,460.4 6.5,458.6 6.5,456.7 6.6,454.8 6.6,452.9 6.7,451 6.7,449 6.8,447 6.9,445 7,443 7.1,441 7.2,439 7.3,436.9 7.4,434.8 7.6,432.8 7.7,430.6 7.9,428.5 8,426.4 8.2,424.2 8.4,422 8.6,419.8 8.7,417.6 9,415.3 9.2,413 9.4,410.7 9.7,408.4 9.9,406.1 10.2,403.7 10.5,401.3 10.8,398.9 11.1,396.5 11.4,394 11.7,391.5 12.1,388.9 12.5,386.4 12.9,383.8 13.3,381.2 13.7,378.5 14.1,375.9 14.6,373.1 15.1,370.4 15.6,367.6 16.1,364.8 16.7,361.9 17.2,359 17.8,356.1 18.4,353.1 19.1,350.1 19.8,347.1 20.5,344 21.2,340.8 21.9,337.7 22.7,334.4 23.5,331.1 24.4,327.8 25.3,324.4 26.2,321 27.1,317.5 28.1,314 29.1,310.4 30.2,306.8 31.2,303.1 32.3,299.4 33.5,295.6 34.7,291.7 35.9,287.8 37.1,283.9 38.4,279.8 39.7,275.7 41.1,271.6 42.5,267.4 44,263.1 45.5,258.8 47,254.4 48.6,249.9 50.2,245.3 51.9,240.7 53.7,236"/>
<polyline points="192.7,751.6 192.3,751.2 191.9,750.9 191.6,750.5 191.2,750.1 190.8,749.8 190.4,749.4 190,749 189.6,748.7 189.2,748.3 188.9,747.9 188.5,747.6 188.1,747.2 187.7,746.8 187.3,746.5 186.9,746.1 186.5,745.7 186.1,745.3 185.7,745 185.3,744.6 185,744.2 184.6,743.8 184.2,743.5 183.8,743.1 183.4,742.7 183,742.3 182.6,741.9 182.2,741.6 181.8,741.2 181.4,740.8 181,740.4 180.6,740 180.2,739.6 179.8,739.2 179.4,738.9 179,738.5 178.6,738.1 178.2,737.7 177.8,737.3 177.4,736.9 176.9,736.5 176.5,736.1 176.1,735.7 175.7,735.3 175.3,734.9 174.9,734.5 174.5,734.1 174.1,733.7 173.7,733.3 173.3,732.9 172.9,732.5 172.5,732.1 172.1,731.6 171.7,731.2 171.3,730.8 170.9,730.4 170.5,730 170,729.5 169.6,729.1 169.2,728.7 168.8,728.3 168.4,727.8 168,727.4 167.6,727 167.2,726.6 166.8,726.1 166.4,725.7 166,725.2 165.6,724.8 165.2,724.4 164.8,723.9 164.3,723.5 163.9,723 163.5,722.6 163.1,722.1 162.7,721.7 162.3,721.2 161.9,720.8 161.5,720.3 161.1,719.9 160.7,719.4 160.3,718.9 159.9,718.5 159.5,718 159.1,717.5 158.7,717.1 158.3,716.6 157.9,716.1 157.5,715.6 157.1,715.2 156.7,714.7 156.3,714.2 155.9,713.7 155.5,713.2 155.1,712.7 154.7,712.2 154.3,711.7 153.9,711.2 153.5,710.7 153.1,710.2 152.7,709.7 152.3,709.2 151.9,708.7 151.5,708.2 151.1,707.7 150.7,707.2 150.3,706.7 149.9,706.1 149.5,705.6 149.1,705.1 148.7,704.6 148.3,704.1 147.9,703.5 147.5,703 147.1,702.5 146.7,702 146.3,701.4 145.9,700.9 145.5,700.4 145.1,699.8 144.7,699.3 144.2,698.8 143.8,698.2 143.4,697.7 143,697.1 142.6,696.6 142.2,696.1 141.8,695.5 141.4,695 141,694.4 140.5,693.9 140.1,693.4 139.7,692.8 139.3,692.3 138.9,691.7 138.4,691.2 138,690.6 137.6,690.1 137.2,689.5 136.8,689 136.3,688.4 135.9,687.9 135.5,687.3 135.1,686.7 134.6,686.2 134.2,685.6 133.8,685 133.4,684.5 132.9,683.9 132.5,683.3 132.1,682.8 131.6,682.2 131.2,681.6 130.8,681.1 130.3,680.5 129.9,679.9 129.5,679.3 129,678.7 128.6,678.2 128.2,677.6 127.7,677 127.3,676.4 126.9,675.8 126.4,675.2 126,674.6 125.6,674 125.1,673.4 124.7,672.8 124.3,672.2 123.8,671.6 123.4,671 123,670.4 122.5,669.8 122.1,669.2 121.6,668.6 121.2,667.9 120.8,667.3 120.3,666.7 119.9,666.1 119.5,665.4 119,664.8 118.6,664.2 118.2,663.5 117.7,662.9 117.3,662.3 116.9,661.6 116.4,661 116,660.3 115.5,659.7 115.1,659 114.7,658.4 114.2,657.7 113.8,657.1 113.3,656.4 112.9,655.7 112.5,655.1 112,654.4 111.6,653.7 111.1,653.1 110.7,652.4 110.3,651.7 109.8,651.1 109.4,650.4 108.9,649.7 108.5,649 108.1,648.3 107.6,647.6 107.2,646.9 106.7,646.2 106.3,645.5 105.9,644.8 105.4,644.1 105,643.4 104.6,642.7 104.1,642 103.7,641.3 103.2,640.6 102.8,639.8 102.4,639.1 101.9,638.4 101.5,637.6 101.1,636.9 100.6,636.2 100.2,635.4 99.8,634.7 99.3,633.9 98.9,633.2 98.5,632.4 98,631.6 97.6,630.9 97.2,630.1 96.8,629.3 96.3,628.5 95.9,627.8 95.5,627 95.1,626.2 94.6,625.4 94.2,624.6 93.8,623.8 93.4,623 92.9,622.2 92.5,621.4 92.1,620.6 91.7,619.8 91.3,618.9 90.8,618.1 90.4,617.3 90,616.5 89.6,615.6 89.2,614.8 88.8,613.9 88.3,613.1 87.9,612.2 87.5,611.4 87.1,610.5 86.7,609.7 86.3,608.8 85.9,607.9 85.5,607 85.1,606.2 84.6,605.3 84.2,604.4 83.8,603.5 83.4,602.6 83,601.7 82.6,600.8 82.2,599.8 81.8,598.9 81.4,598 81,597.1 80.6,596.1 80.3,595.2 79.9,594.3 79.5,593.3 79.1,592.3 78.7,591.4 78.3,590.4 77.9,589.4 77.5,588.5 77.2,587.5 76.8,586.5 76.4,585.5 76,584.5 75.6,583.5 75.3,582.5 74.9,581.5 74.5,580.5 74.2,579.4 73.8,578.4 73.4,577.4 73.1,576.3 72.7,575.3 72.3,574.2 72,573.1 71.6,572.1 71.3,571 70.9,569.9 70.6,568.8 70.2,567.7 69.9,566.6 69.5,565.5 69.2,564.4 68.8,563.3 68.5,562.2 68.2,561 67.8,559.9 67.5,558.7 67.2,557.6 66.8,556.4 66.5,555.3 66.2,554.1 65.9,552.9 65.6,551.7 65.2,550.5 64.9,549.3 64.6,548.1 64.3,546.9 64,545.7 63.7,544.4 63.4,543.2 63.1,541.9 62.8,540.7 62.5,539.4 62.2,538.1 61.9,536.9 61.6,535.6 61.3,534.3 61,533 60.8,531.7 60.5,530.3 60.2,529 59.9,527.7 59.7,526.3 59.4,525 59.1,523.6 58.9,522.2 58.6,520.8 58.4,519.5 58.1,518.1 57.8,516.7 57.6,515.2 57.3,513.8 57.1,512.4 56.9,510.9 56.6,509.5 56.4,508 56.1,506.6 55.9,505.1 55.7,503.6 55.5,502.1 55.3,500.6 55,499 54.8,497.5 54.6,496 54.4,494.4 54.2,492.8 54,491.3 53.9,489.7 53.7,488.1 53.5,486.4 53.3,484.8 53.2,483.2 53,481.5 52.8,479.8 52.7,478.1 52.6,476.4 52.4,474.7 52.3,473 52.2,471.3 52.1,469.5 52,467.7 51.9,465.9 51.8,464.1 51.7,462.3 51.6,460.4 51.6,458.6 51.5,456.7 51.5,454.8 51.4,452.9 51.4,451 51.4,449 51.4,447 51.4,445 51.4,443 51.4,441 51.4,439 51.4,436.9 51.5,434.8 51.5,432.8 51.6,430.6 51.6,428.5 51.7,426.4 51.8,424.2 51.8,422 51.9,419.8 52,417.6 52.2,415.3 52.3,413 52.4,410.7 52.6,408.4 52.7,406.1 52.9,403.7 53.1,401.3 53.3,398.9 53.5,396.5 53.8,394 54,391.5 54.3,388.9 54.5,386.4 54.8,383.8 55.1,381.2 55.5,378.5 55.8,375.9 56.2,373.1 56.5,370.4 56.9,367.6 57.4,364.8 57.8,361.9 58.3,359 58.8,356.1 59.3,353.1 59.8,350.1 60.4,347.1 61,344 61.6,340.8 62.2,337.7 62.9,334.4 63.6,331.1 64.3,327.8 65.1,324.4 65.9,321 66.8,317.5 67.6,314 68.5,310.4 69.4,306.8 70.4,303.1 71.4,299.4 72.4,295.6 73.5,291.7 74.5,287.8 75.7,283.9 76.8,279.8 78,275.7 79.3,271.6 80.6,267.4 81.9,263.1 83.3,258.8 84.7,254.4 86.1,249.9 87.6,245.3 89.2,240.7 90.8,236 92.4,231.2 94.2,226.3 95.9,221.3 97.8,216.3 99.7,211.1 101.6,205.9 103.6,200.5 105.7,195.1 107.9,189.6 110.1,183.9 112.4,178.1"/>
<polyline points="252,751.6 251.6,751.2 251.2,750.9 250.9,750.5 250.5,750.1 250.2,749.8 249.8,749.4 249.5,749 249.1,748.7 248.7,748.3 248.4,747.9 248,747.6 247.7,747.2 247.3,746.8 246.9,746.5 246.6,746.1 246.2,745.7 245.8,745.3 245.5,745 245.1,744.6 244.7,744.2 244.4,743.8 244,743.5 243.6,743.1 243.2,742.7 242.9,742.3 242.5,741.9 242.1,741.6 241.8,741.2 241.4,740.8 241,740.4 240.6,740 240.2,739.6 239.8,739.2 239.5,738.9 239.1,738.5 238.7,738.1 238.3,737.7 237.9,737.3 237.5,736.9 237.1,736.5 236.7,736.1 236.4,735.7 236,735.3 235.6,734.9 235.2,734.5 234.8,734.1 234.4,733.7 234,733.3 233.6,732.9 233.2,732.5 232.8,732.1 232.4,731.6 232.1,731.2 231.7,730.8 231.3,730.4 230.9,730 230.5,729.5 230.1,729.1 229.7,728.7 229.3,728.3 228.9,727.8 228.5,727.4 228.1,727 227.7,726.6 227.3,726.1 226.9,725.7 226.5,725.2 226.1,724.8 225.7,724.4 225.3,723.9 224.9,723.5 224.5,723 224.1,722.6 223.7,722.1 223.3,721.7 222.9,721.2 222.5,720.8 222.1,720.3 221.7,719.9 221.3,719.4 220.9,718.9 220.5,718.5 220.1,718 219.7,717.5 219.3,717.1 218.9,716.6 218.5,716.1 218.1,715.6 217.7,715.2 217.3,714.7 216.9,714.2 216.5,713.7 216.1,713.2 215.7,712.7 215.3,712.2 214.9,711.7 214.5,711.2 214.1,710.7 213.7,710.2 213.3,709.7 212.9,709.2 212.5,708.7 212.1,708.2 211.7,707.7 211.3,707.2 210.9,706.7 210.5,706.1 210.1,705.6 209.7,705.1 209.3,704.6 208.9,704.1 208.5,703.5 208.1,703 207.7,702.5 207.3,702 206.9,701.4 206.4,700.9 206,700.4 205.6,699.8 205.2,699.3 204.8,698.8 204.4,698.2 204,697.7 203.5,697.1 203.1,696.6 202.7,696.1 202.3,695.5 201.8,695 201.4,694.4 201,693.9 200.6,693.4 200.1,692.8 199.7,692.3 199.3,691.7 198.8,691.2 198.4,690.6 198,690.1 197.5,689.5 197.1,689 196.6,688.4 196.2,687.9 195.8,687.3 195.3,686.7 194.9,686.2 194.4,685.6 194,685 193.5,684.5 193.1,683.9 192.6,683.3 192.2,682.8 191.7,682.2 191.3,681.6 190.8,681.1 190.4,680.5 189.9,679.9 189.5,679.3 189,678.7 188.6,678.2 188.1,677.6 187.6,677 187.2,676.4 186.7,675.8 186.3,675.2 185.8,674.6 185.4,674 184.9,673.4 184.4,672.8 184,672.2 183.5,671.6 183,671 182.6,670.4 182.1,669.8 181.7,669.2 181.2,668.6 180.7,667.9 180.3,667.3 179.8,666.7 179.3,666.1 178.9,665.4 178.4,664.8 177.9,664.2 177.5,663.5 177,662.9 176.5,662.3 176.1,661.6 175.6,661 175.1,660.3 174.7,659.7 174.2,659 173.7,658.4 173.3,657.7 172.8,657.1 172.3,656.4 171.8,655.7 171.4,655.1 170.9,654.4 170.4,653.7 169.9,653.1 169.5,652.4 169,651.7 168.5,651.1 168,650.4 167.5,649.7 167.1,649 166.6,648.3 166.1,647.6 165.6,646.9 165.2,646.2 164.7,645.5 164.2,644.8 163.7,644.1 163.2,643.4 162.8,642.7 162.3,642 161.8,641.3 161.3,640.6 160.9,639.8 160.4,639.1 159.9,638.4 159.4,637.6 158.9,636.9 158.5,636.2 158,635.4 157.5,634.7 157,633.9 156.6,633.2 156.1,632.4 155.6,631.6 155.1,630.9 154.7,630.1 154.2,629.3 153.7,628.5 153.3,627.8 152.8,627 152.3,626.2 151.8,625.4 151.4,624.6 150.9,623.8 150.4,623 150,622.2 149.5,621.4 149,620.6 148.6,619.8 148.1,618.9 147.6,618.1 147.1,617.3 146.7,616.5 146.2,615.6 145.7,614.8 145.3,613.9 144.8,613.1 144.3,612.2 143.9,611.4 143.4,610.5 143,609.7 142.5,608.8 142,607.9 141.6,607 141.1,606.2 140.6,605.3 140.2,604.4 139.7,603.5 139.3,602.6 138.8,601.7 138.4,600.8 137.9,599.8 137.4,598.9 137,598 136.5,597.1 136.1,596.1 135.6,595.2 135.2,594.3 134.7,593.3 134.3,592.3 133.9,591.4 133.4,590.4 133,589.4 132.5,588.5 132.1,587.5 131.6,586.5 131.2,585.5 130.8,584.5 130.3,583.5 129.9,582.5 129.5,581.5 129,580.5 128.6,579.4 128.2,578.4 127.8,577.4 127.3,576.3 126.9,575.3 126.5,574.2 126.1,573.1 125.6,572.1 125.2,571 124.8,569.9 124.4,568.8 124,567.7 123.6,566.6 123.2,565.5 122.8,564.4 122.4,563.3 121.9,562.2 121.5,561 121.1,559.9 120.7,558.7 120.3,557.6 120,556.4 119.6,555.3 119.2,554.1 118.8,552.9 118.4,551.7 118,550.5 117.6,549.3 117.2,548.1 116.9,546.9 116.5,545.7 116.1,544.4 115.7,543.2 115.4,541.9 115,540.7 114.6,539.4 114.3,538.1 113.9,536.9 113.5,535.6 113.2,534.3 112.8,533 112.5,531.7 112.1,530.3 111.8,529 111.4,527.7 111.1,526.3 110.8,525 110.4,523.6 110.1,522.2 109.7,520.8 109.4,519.5 109.1,518.1 108.7,516.7 108.4,515.2 108.1,513.8 107.8,512.4 107.5,510.9 107.1,509.5 106.8,508 106.5,506.6 106.2,505.1 105.9,503.6 105.6,502.1 105.3,500.6 105,499 104.7,497.5 104.4,496 104.2,494.4 103.9,492.8 103.6,491.3 103.3,489.7 103.1,488.1 102.8,486.4 102.6,484.8 102.3,483.2 102.1,481.5 101.8,479.8 101.6,478.1 101.4,476.4 101.2,474.7 101,473 100.7,471.3 100.5,469.5 100.4,467.7 100.2,465.9 100,464.1 99.8,462.3 99.7,460.4 99.5,458.6 99.4,456.7 99.2,454.8 99.1,452.9 99,451 98.9,449 98.8,447 98.7,445 98.6,443 98.5,441 98.5,439 98.4,436.9 98.3,434.8 98.3,432.8 98.2,430.6 98.2,428.5 98.2,426.4 98.1,424.2 98.1,422 98.1,419.8 98.1,417.6 98.2,415.3 98.2,413 98.2,410.7 98.3,408.4 98.3,406.1 98.4,403.7 98.5,401.3 98.6,398.9 98.7,396.5 98.8,394 99,391.5 99.1,388.9 99.3,386.4 99.5,383.8 99.7,381.2 99.9,378.5 100.1,375.9 100.4,373.1 100.7,370.4 101,367.6 101.3,364.8 101.6,361.9 102,359 102.3,356.1 102.7,353.1 103.2,350.1 103.6,347.1 104.1,344 104.6,340.8 105.1,337.7 105.7,334.4 106.3,331.1 106.9,327.8 107.5,324.4 108.2,321 108.9,317.5 109.7,314 110.4,310.4 111.2,306.8 112.1,303.1 112.9,299.4 113.8,295.6 114.7,291.7 115.7,287.8 116.7,283.9 117.7,279.8 118.8,275.7 119.9,271.6 121.1,267.4 122.2,263.1 123.5,258.8 124.7,254.4 126.1,249.9 127.4,245.3 128.8,240.7 130.3,236 131.8,231.2 133.4,226.3 135,221.3 136.7,216.3 138.4,211.1 140.2,205.9 142.1,200.5 144,195.1 146,189.6 148.1,183.9 150.2,178.1 152.5,172.3 154.7,166.3 157.1,160.2 159.6,153.9 162.2,147.5 164.8,141 167.5,134.4 170.4,127.6 173.3,120.6 176.4,113.5"/>
<polyline points="310.2,751.6 309.9,751.2 309.6,750.9 309.3,750.5 309,750.1 308.7,749.8 308.4,749.4 308.1,749 307.8,748.7 307.5,748.3 307.2,747.9 306.9,747.6 306.6,747.2 306.3,746.8 306,746.5 305.7,746.1 305.4,745.7 305.1,745.3 304.8,745 304.5,744.6 304.2,744.2 303.8,743.8 303.5,743.5 303.2,743.1 302.9,742.7 302.6,742.3 302.3,741.9 302,741.6 301.6,741.2 301.3,740.8 301,740.4 300.7,740 300.3,739.6 300,739.2 299.7,738.9 299.3,738.5 299,738.1 298.7,737.7 298.3,737.3 298,736.9 297.7,736.5 297.3,736.1 297,735.7 296.7,735.3 296.3,734.9 296,734.5 295.6,734.1 295.3,733.7 295,733.3 294.6,732.9 294.3,732.5 294,732.1 293.6,731.6 293.3,731.2 292.9,730.8 292.6,730.4 292.2,730 291.9,729.5 291.6,729.1 291.2,728.7 290.9,728.3 290.5,727.8 290.2,727.4 289.8,727 289.5,726.6 289.1,726.1 288.8,725.7 288.4,725.2 288.1,724.8 287.7,724.4 287.4,723.9 287,723.5 286.7,723 286.3,722.6 286,722.1 285.6,721.7 285.2,721.2 284.9,720.8 284.5,720.3 284.2,719.9 283.8,719.4 283.5,718.9 283.1,718.5 282.7,718 282.4,717.5 282,717.1 281.7,716.6 281.3,716.1 280.9,715.6 280.6,715.2 280.2,714.7 279.9,714.2 279.5,713.7 279.1,713.2 278.8,712.7 278.4,712.2 278.1,711.7 277.7,711.2 277.3,710.7 277,710.2 276.6,709.7 276.2,709.2 275.9,708.7 275.5,708.2 275.2,707.7 274.8,707.2 274.4,706.7 274,706.1 273.7,705.6 273.3,705.1 272.9,704.6 272.6,704.1 272.2,703.5 271.8,703 271.4,702.5 271.1,702 270.7,701.4 270.3,700.9 269.9,700.4 269.5,699.8 269.1,699.3 268.7,698.8 268.4,698.2 268,697.7 267.6,697.1 267.2,696.6 266.8,696.1 266.4,695.5 266,695 265.6,694.4 265.2,693.9 264.8,693.4 264.4,692.8 263.9,692.3 263.5,691.7 263.1,691.2 262.7,690.6 262.3,690.1 261.9,689.5 261.4,689 261,688.4 260.6,687.9 260.2,687.3 259.7,686.7 259.3,686.2 258.9,685.6 258.5,685 258,684.5 257.6,683.9 257.2,683.3 256.7,682.8 256.3,682.2 255.8,681.6 255.4,681.1 255,680.5 254.5,679.9 254.1,679.3 253.6,678.7 253.2,678.2 252.7,677.6 252.3,677 251.8,676.4 251.4,675.8 250.9,675.2 250.5,674.6 250,674 249.6,673.4 249.1,672.8 248.6,672.2 248.2,671.6 247.7,671 247.3,670.4 246.8,669.8 246.3,669.2 245.9,668.6 245.4,667.9 244.9,667.3 244.5,666.7 244,666.1 243.5,665.4 243.1,664.8 242.6,664.2 242.1,663.5 241.7,662.9 241.2,662.3 240.7,661.6 240.2,661 239.8,660.3 239.3,659.7 238.8,659 238.3,658.4 237.8,657.7 237.4,657.1 236.9,656.4 236.4,655.7 235.9,655.1 235.4,654.4 234.9,653.7 234.4,653.1 233.9,652.4 233.5,651.7 233,651.1 232.5,650.4 232,649.7 231.5,649 231,648.3 230.5,647.6 230,646.9 229.5,646.2 229,645.5 228.5,644.8 228,644.1 227.5,643.4 227,642.7 226.5,642 226,641.3 225.5,640.6 225,639.8 224.5,639.1 224,638.4 223.5,637.6 223,636.9 222.5,636.2 222,635.4 221.5,634.7 221,633.9 220.4,633.2 219.9,632.4 219.4,631.6 218.9,630.9 218.4,630.1 217.9,629.3 217.4,628.5 216.9,627.8 216.4,627 215.9,626.2 215.4,625.4 214.9,624.6 214.4,623.8 213.9,623 213.4,622.2 212.9,621.4 212.3,620.6 211.8,619.8 211.3,618.9 210.8,618.1 210.3,617.3 209.8,616.5 209.3,615.6 208.8,614.8 208.3,613.9 207.8,613.1 207.3,612.2 206.7,611.4 206.2,610.5 205.7,609.7 205.2,608.8 204.7,607.9 204.2,607 203.7,606.2 203.2,605.3 202.7,604.4 202.2,603.5 201.7,602.6 201.2,601.7 200.7,600.8 200.1,599.8 199.6,598.9 199.1,598 198.6,597.1 198.1,596.1 197.6,595.2 197.1,594.3 196.6,593.3 196.1,592.3 195.6,591.4 195.1,590.4 194.6,589.4 194.1,588.5 193.6,587.5 193.1,586.5 192.6,585.5 192.1,584.5 191.6,583.5 191.2,582.5 190.7,581.5 190.2,580.5 189.7,579.4 189.2,578.4 188.7,577.4 188.2,576.3 187.7,575.3 187.2,574.2 186.8,573.1 186.3,572.1 185.8,571 185.3,569.9 184.8,568.8 184.4,567.7 183.9,566.6 183.4,565.5 182.9,564.4 182.5,563.3 182,562.2 181.5,561 181,559.9 180.6,558.7 180.1,557.6 179.6,556.4 179.2,555.3 178.7,554.1 178.3,552.9 177.8,551.7 177.3,550.5 176.9,549.3 176.4,548.1 176,546.9 175.5,545.7 175.1,544.4 174.6,543.2 174.2,541.9 173.7,540.7 173.3,539.4 172.9,538.1 172.4,536.9 172,535.6 171.5,534.3 171.1,533 170.7,531.7 170.3,530.3 169.8,529 169.4,527.7 169,526.3 168.6,525 168.1,523.6 167.7,522.2 167.3,520.8 166.9,519.5 166.5,518.1 166.1,516.7 165.6,515.2 165.2,513.8 164.8,512.4 164.4,510.9 164,509.5 163.6,508 163.2,506.6 162.8,505.1 162.5,503.6 162.1,502.1 161.7,500.6 161.3,499 160.9,497.5 160.5,496 160.2,494.4 159.8,492.8 159.4,491.3 159.1,489.7 158.7,488.1 158.4,486.4 158,484.8 157.7,483.2 157.4,481.5 157,479.8 156.7,478.1 156.4,476.4 156.1,474.7 155.8,473 155.5,471.3 155.2,469.5 154.9,467.7 154.6,465.9 154.3,464.1 154.1,462.3 153.8,460.4 153.5,458.6 153.3,456.7 153.1,454.8 152.8,452.9 152.6,451 152.4,449 152.2,447 152,445 151.8,443 151.6,441 151.5,439 151.3,436.9 151.1,434.8 151,432.8 150.8,430.6 150.7,428.5 150.5,426.4 150.4,424.2 150.3,422 150.2,419.8 150.1,417.6 150,415.3 149.9,413 149.8,410.7 149.8,408.4 149.7,406.1 149.7,403.7 149.6,401.3 149.6,398.9 149.6,396.5 149.6,394 149.7,391.5 149.7,388.9 149.7,386.4 149.8,383.8 149.9,381.2 150,378.5 150.1,375.9 150.2,373.1 150.4,370.4 150.6,367.6 150.7,364.8 150.9,361.9 151.2,359 151.4,356.1 151.7,353.1 152,350.1 152.3,347.1 152.7,344 153,340.8 153.4,337.7 153.8,334.4 154.3,331.1 154.8,327.8 155.3,324.4 155.8,321 156.4,317.5 157,314 157.6,310.4 158.3,306.8 159,303.1 159.7,299.4 160.5,295.6 161.2,291.7 162.1,287.8 162.9,283.9 163.8,279.8 164.7,275.7 165.7,271.6 166.7,267.4 167.7,263.1 168.8,258.8 169.9,254.4 171,249.9 172.2,245.3 173.5,240.7 174.8,236 176.2,231.2 177.6,226.3 179,221.3 180.5,216.3 182.1,211.1 183.7,205.9 185.4,200.5 187.2,195.1 189,189.6 190.9,183.9 192.8,178.1 194.9,172.3 197,166.3 199.2,160.2 201.5,153.9 203.8,147.5 206.3,141 208.8,134.4 211.5,127.6 214.2,120.6 217.1,113.5 220.1,106.2 223.2,98.8 226.4,91.1 229.7,83.3 233.2,75.3 236.8,67.1 240.6,58.7 244.5,50 248.6,41.1"/>
<polyline points="367.6,751.6 367.4,751.2 367.2,750.9 367,750.5 366.8,750.1 366.6,749.8 366.4,749.4 366.2,749 365.9,748.7 365.7,748.3 365.5,747.9 365.3,747.6 365.1,747.2 364.9,746.8 364.6,746.5 364.4,746.1 364.2,745.7 364,745.3 363.7,745 363.5,744.6 363.3,744.2 363.1,743.8 362.8,743.5 362.6,743.1 362.4,742.7 362.2,742.3 361.9,741.9 361.7,741.6 361.5,741.2 361.2,740.8 361,740.4 360.7,740 360.5,739.6 360.2,739.2 360,738.9 359.7,738.5 359.5,738.1 359.2,737.7 359,737.3 358.8,736.9 358.5,736.5 358.3,736.1 358,735.7 357.8,735.3 357.5,734.9 357.3,734.5 357,734.1 356.8,733.7 356.5,733.3 356.3,732.9 356,732.5 355.8,732.1 355.5,731.6 355.2,731.2 355,730.8 354.7,730.4 354.5,730 354.2,729.5 354,729.1 353.7,728.7 353.5,728.3 353.2,727.8 352.9,727.4 352.7,727 352.4,726.6 352.2,726.1 351.9,725.7 351.6,725.2 351.4,724.8 351.1,724.4 350.9,723.9 350.6,723.5 350.3,723 350.1,722.6 349.8,722.1 349.5,721.7 349.3,721.2 349,720.8 348.7,720.3 348.5,719.9 348.2,719.4 347.9,718.9 347.7,718.5 347.4,718 347.1,717.5 346.9,717.1 346.6,716.6 346.3,716.1 346,715.6 345.8,715.2 345.5,714.7 345.2,714.2 345,713.7 344.7,713.2 344.4,712.7 344.2,712.2 343.9,711.7 343.6,711.2 343.3,710.7 343.1,710.2 342.8,709.7 342.5,709.2 342.2,708.7 342,708.2 341.7,707.7 341.4,707.2 341.1,706.7 340.8,706.1 340.5,705.6 340.3,705.1 340,704.6 339.7,704.1 339.4,703.5 339.1,703 338.8,702.5 338.5,702 338.2,701.4 337.9,700.9 337.6,700.4 337.3,699.8 337,699.3 336.7,698.8 336.4,698.2 336.1,697.7 335.8,697.1 335.5,696.6 335.2,696.1 334.9,695.5 334.6,695 334.2,694.4 333.9,693.9 333.6,693.4 333.3,692.8 332.9,692.3 332.6,691.7 332.3,691.2 331.9,690.6 331.6,690.1 331.3,689.5 330.9,689 330.6,688.4 330.2,687.9 329.9,687.3 329.5,686.7 329.2,686.2 328.8,685.6 328.5,685 328.1,684.5 327.8,683.9 327.4,683.3 327,682.8 326.7,682.2 326.3,681.6 325.9,681.1 325.6,680.5 325.2,679.9 324.8,679.3 324.5,678.7 324.1,678.2 323.7,677.6 323.3,677 322.9,676.4 322.6,675.8 322.2,675.2 321.8,674.6 321.4,674 321,673.4 320.6,672.8 320.2,672.2 319.8,671.6 319.4,671 319,670.4 318.6,669.8 318.2,669.2 317.8,668.6 317.4,667.9 317,667.3 316.6,666.7 316.2,666.1 315.8,665.4 315.4,664.8 315,664.2 314.6,663.5 314.2,662.9 313.7,662.3 313.3,661.6 312.9,661 312.5,660.3 312,659.7 311.6,659 311.2,658.4 310.8,657.7 310.3,657.1 309.9,656.4 309.4,655.7 309,655.1 308.6,654.4 308.1,653.7 307.7,653.1 307.2,652.4 306.8,651.7 306.3,651.1 305.9,650.4 305.4,649.7 305,649 304.5,648.3 304,647.6 303.6,646.9 303.1,646.2 302.7,645.5 302.2,644.8 301.7,644.1 301.3,643.4 300.8,642.7 300.3,642 299.9,641.3 299.4,640.6 298.9,639.8 298.4,639.1 297.9,638.4 297.5,637.6 297,636.9 296.5,636.2 296,635.4 295.5,634.7 295.1,633.9 294.6,633.2 294.1,632.4 293.6,631.6 293.1,630.9 292.6,630.1 292.1,629.3 291.6,628.5 291.1,627.8 290.6,627 290.2,626.2 289.7,625.4 289.2,624.6 288.7,623.8 288.2,623 287.6,622.2 287.1,621.4 286.6,620.6 286.1,619.8 285.6,618.9 285.1,618.1 284.6,617.3 284.1,616.5 283.6,615.6 283.1,614.8 282.6,613.9 282,613.1 281.5,612.2 281,611.4 280.5,610.5 280,609.7 279.4,608.8 278.9,607.9 278.4,607 277.9,606.2 277.4,605.3 276.8,604.4 276.3,603.5 275.8,602.6 275.3,601.7 274.7,600.8 274.2,599.8 273.7,598.9 273.1,598 272.6,597.1 272.1,596.1 271.5,595.2 271,594.3 270.5,593.3 270,592.3 269.4,591.4 268.9,590.4 268.4,589.4 267.8,588.5 267.3,587.5 266.8,586.5 266.2,585.5 265.7,584.5 265.2,583.5 264.6,582.5 264.1,581.5 263.6,580.5 263,579.4 262.5,578.4 262,577.4 261.4,576.3 260.9,575.3 260.4,574.2 259.8,573.1 259.3,572.1 258.8,571 258.2,569.9 257.7,568.8 257.2,567.7 256.6,566.6 256.1,565.5 255.6,564.4 255,563.3 254.5,562.2 254,561 253.4,559.9 252.9,558.7 252.4,557.6 251.8,556.4 251.3,555.3 250.8,554.1 250.3,552.9 249.7,551.7 249.2,550.5 248.7,549.3 248.2,548.1 247.6,546.9 247.1,545.7 246.6,544.4 246.1,543.2 245.5,541.9 245,540.7 244.5,539.4 244,538.1 243.5,536.9 243,535.6 242.4,534.3 241.9,533 241.4,531.7 240.9,530.3 240.4,529 239.9,527.7 239.4,526.3 238.9,525 238.4,523.6 237.9,522.2 237.3,520.8 236.8,519.5 236.3,518.1 235.8,516.7 235.3,515.2 234.8,513.8 234.3,512.4 233.8,510.9 233.3,509.5 232.8,508 232.4,506.6 231.9,505.1 231.4,503.6 230.9,502.1 230.4,500.6 229.9,499 229.4,497.5 229,496 228.5,494.4 228,492.8 227.6,491.3 227.1,489.7 226.6,488.1 226.2,486.4 225.7,484.8 225.3,483.2 224.8,481.5 224.4,479.8 224,478.1 223.5,476.4 223.1,474.7 222.7,473 222.3,471.3 221.9,469.5 221.5,467.7 221.1,465.9 220.7,464.1 220.3,462.3 219.9,460.4 219.5,458.6 219.2,456.7 218.8,454.8 218.5,452.9 218.1,451 217.8,449 217.5,447 217.2,445 216.8,443 216.5,441 216.2,439 215.9,436.9 215.6,434.8 215.4,432.8 215.1,430.6 214.8,428.5 214.5,426.4 214.3,424.2 214,422 213.8,419.8 213.6,417.6 213.3,415.3 213.1,413 212.9,410.7 212.7,408.4 212.5,406.1 212.3,403.7 212.2,401.3 212,398.9 211.9,396.5 211.7,394 211.6,391.5 211.5,388.9 211.4,386.4 211.3,383.8 211.3,381.2 211.2,378.5 211.2,375.9 211.2,373.1 211.2,370.4 211.2,367.6 211.2,364.8 211.3,361.9 211.3,359 211.4,356.1 211.5,353.1 211.7,350.1 211.8,347.1 212,344 212.2,340.8 212.5,337.7 212.7,334.4 213,331.1 213.3,327.8 213.7,324.4 214,321 214.5,317.5 214.9,314 215.3,310.4 215.8,306.8 216.3,303.1 216.9,299.4 217.5,295.6 218.1,291.7 218.7,287.8 219.4,283.9 220.1,279.8 220.8,275.7 221.6,271.6 222.4,267.4 223.2,263.1 224.1,258.8 225,254.4 226,249.9 227,245.3 228.1,240.7 229.2,236 230.3,231.2 231.5,226.3 232.8,221.3 234.1,216.3 235.4,211.1 236.8,205.9 238.3,200.5 239.9,195.1 241.5,189.6 243.1,183.9 244.9,178.1 246.7,172.3 248.6,166.3 250.5,160.2 252.6,153.9 254.7,147.5 256.9,141 259.2,134.4 261.7,127.6 264.2,120.6 266.8,113.5 269.5,106.2 272.3,98.8 275.3,91.1 278.4,83.3 281.6,75.3 285,67.1 288.5,58.7 292.1,50 295.9,41.1 299.9,32 304.1,22.6"/>
<polyline points="424.9,751.6 424.7,751.2 424.6,750.9 424.5,750.5 424.4,750.1 424.2,749.8 424.1,749.4 424,749 423.9,748.7 423.7,748.3 423.6,747.9 423.5,747.6 423.4,747.2 423.2,746.8 423.1,746.5 423,746.1 422.8,745.7 422.7,745.3 422.6,745 422.5,744.6 422.3,744.2 422.2,743.8 422.1,743.5 421.9,743.1 421.8,742.7 421.7,742.3 421.5,741.9 421.4,741.6 421.3,741.2 421.1,740.8 421,740.4 420.8,740 420.6,739.6 420.5,739.2 420.3,738.9 420.2,738.5 420,738.1 419.9,737.7 419.7,737.3 419.6,736.9 419.4,736.5 419.3,736.1 419.1,735.7 419,735.3 418.8,734.9 418.7,734.5 418.5,734.1 418.4,733.7 418.2,733.3 418.1,732.9 417.9,732.5 417.8,732.1 417.7,731.6 417.5,731.2 417.4,730.8 417.2,730.4 417.1,730 416.9,729.5 416.8,729.1 416.6,728.7 416.5,728.3 416.3,727.8 416.2,727.4 416,727 415.9,726.6 415.7,726.1 415.6,725.7 415.4,725.2 415.3,724.8 415.1,724.4 415,723.9 414.8,723.5 414.7,723 414.5,722.6 414.4,722.1 414.2,721.7 414.1,721.2 413.9,720.8 413.8,720.3 413.6,719.9 413.5,719.4 413.3,718.9 413.2,718.5 413,718 412.9,717.5 412.7,717.1 412.6,716.6 412.4,716.1 412.3,715.6 412.1,715.2 412,714.7 411.8,714.2 411.7,713.7 411.5,713.2 411.4,712.7 411.2,712.2 411.1,711.7 410.9,711.2 410.8,710.7 410.6,710.2 410.5,709.7 410.3,709.2 410.2,708.7 410,708.2 409.9,707.7 409.7,707.2 409.6,706.7 409.4,706.1 409.3,705.6 409.1,705.1 409,704.6 408.8,704.1 408.6,703.5 408.5,703 408.3,702.5 408.2,702 408,701.4 407.8,700.9 407.7,700.4 407.5,699.8 407.3,699.3 407.2,698.8 407,698.2 406.8,697.7 406.7,697.1 406.5,696.6 406.3,696.1 406.1,695.5 406,695 405.8,694.4 405.6,693.9 405.4,693.4 405.2,692.8 405,692.3 404.8,691.7 404.6,691.2 404.4,690.6 404.2,690.1 404,689.5 403.8,689 403.6,688.4 403.4,687.9 403.2,687.3 403,686.7 402.8,686.2 402.6,685.6 402.4,685 402.2,684.5 402,683.9 401.8,683.3 401.6,682.8 401.3,682.2 401.1,681.6 400.9,681.1 400.7,680.5 400.4,679.9 400.2,679.3 400,678.7 399.8,678.2 399.5,677.6 399.3,677 399.1,676.4 398.8,675.8 398.6,675.2 398.4,674.6 398.1,674 397.9,673.4 397.6,672.8 397.4,672.2 397.2,671.6 396.9,671 396.7,670.4 396.4,669.8 396.2,669.2 395.9,668.6 395.7,667.9 395.4,667.3 395.1,666.7 394.9,666.1 394.6,665.4 394.4,664.8 394.1,664.2 393.8,663.5 393.6,662.9 393.3,662.3 393,661.6 392.8,661 392.5,660.3 392.2,659.7 391.9,659 391.7,658.4 391.4,657.7 391.1,657.1 390.8,656.4 390.5,655.7 390.2,655.1 389.9,654.4 389.6,653.7 389.4,653.1 389.1,652.4 388.8,651.7 388.5,651.1 388.2,650.4 387.8,649.7 387.5,649 387.2,648.3 386.9,647.6 386.6,646.9 386.3,646.2 386,645.5 385.7,644.8 385.3,644.1 385,643.4 384.7,642.7 384.4,642 384,641.3 383.7,640.6 383.4,639.8 383,639.1 382.7,638.4 382.4,637.6 382,636.9 381.7,636.2 381.3,635.4 381,634.7 380.6,633.9 380.3,633.2 380,632.4 379.6,631.6 379.2,630.9 378.9,630.1 378.5,629.3 378.2,628.5 377.8,627.8 377.5,627 377.1,626.2 376.7,625.4 376.4,624.6 376,623.8 375.6,623 375.2,622.2 374.9,621.4 374.5,620.6 374.1,619.8 373.7,618.9 373.3,618.1 372.9,617.3 372.5,616.5 372.1,615.6 371.7,614.8 371.3,613.9 370.9,613.1 370.5,612.2 370.1,611.4 369.7,610.5 369.3,609.7 368.9,608.8 368.5,607.9 368.1,607 367.6,606.2 367.2,605.3 366.8,604.4 366.4,603.5 365.9,602.6 365.5,601.7 365.1,600.8 364.6,599.8 364.2,598.9 363.8,598 363.3,597.1 362.9,596.1 362.4,595.2 362,594.3 361.5,593.3 361.1,592.3 360.6,591.4 360.2,590.4 359.7,589.4 359.3,588.5 358.8,587.5 358.3,586.5 357.9,585.5 357.4,584.5 356.9,583.5 356.5,582.5 356,581.5 355.5,580.5 355,579.4 354.6,578.4 354.1,577.4 353.6,576.3 353.1,575.3 352.6,574.2 352.1,573.1 351.6,572.1 351.2,571 350.7,569.9 350.2,568.8 349.7,567.7 349.2,566.6 348.7,565.5 348.1,564.4 347.6,563.3 347.1,562.2 346.6,561 346.1,559.9 345.6,558.7 345.1,557.6 344.6,556.4 344,555.3 343.5,554.1 343,552.9 342.5,551.7 341.9,550.5 341.4,549.3 340.9,548.1 340.4,546.9 339.8,545.7 339.3,544.4 338.8,543.2 338.2,541.9 337.7,540.7 337.1,539.4 336.6,538.1 336.1,536.9 335.5,535.6 335,534.3 334.4,533 333.9,531.7 333.3,530.3 332.8,529 332.2,527.7 331.7,526.3 331.1,525 330.6,523.6 330,522.2 329.5,520.8 328.9,519.5 328.3,518.1 327.8,516.7 327.2,515.2 326.7,513.8 326.1,512.4 325.5,510.9 325,509.5 324.4,508 323.8,506.6 323.3,505.1 322.7,503.6 322.1,502.1 321.6,500.6 321,499 320.4,497.5 319.9,496 319.3,494.4 318.7,492.8 318.2,491.3 317.6,489.7 317,488.1 316.5,486.4 315.9,484.8 315.4,483.2 314.8,481.5 314.3,479.8 313.7,478.1 313.2,476.4 312.6,474.7 312.1,473 311.6,471.3 311,469.5 310.5,467.7 310,465.9 309.5,464.1 309,462.3 308.4,460.4 307.9,458.6 307.4,456.7 307,454.8 306.5,452.9 306,451 305.5,449 305,447 304.6,445 304.1,443 303.7,441 303.2,439 302.8,436.9 302.3,434.8 301.9,432.8 301.4,430.6 301,428.5 300.6,426.4 300.1,424.2 299.7,422 299.3,419.8 298.9,417.6 298.5,415.3 298.1,413 297.8,410.7 297.4,408.4 297,406.1 296.7,403.7 296.3,401.3 296,398.9 295.6,396.5 295.3,394 295,391.5 294.7,388.9 294.4,386.4 294.2,383.8 293.9,381.2 293.7,378.5 293.4,375.9 293.2,373.1 293,370.4 292.8,367.6 292.7,364.8 292.5,361.9 292.4,359 292.3,356.1 292.2,353.1 292.1,350.1 292.1,347.1 292,344 292,340.8 292,337.7 292.1,334.4 292.2,331.1 292.2,327.8 292.4,324.4 292.5,321 292.7,317.5 292.9,314 293.1,310.4 293.4,306.8 293.7,303.1 294,299.4 294.3,295.6 294.7,291.7 295,287.8 295.5,283.9 295.9,279.8 296.4,275.7 296.9,271.6 297.5,267.4 298.1,263.1 298.7,258.8 299.4,254.4 300.1,249.9 300.8,245.3 301.6,240.7 302.4,236 303.3,231.2 304.2,226.3 305.2,221.3 306.2,216.3 307.3,211.1 308.4,205.9 309.6,200.5 310.9,195.1 312.2,189.6 313.6,183.9 315,178.1 316.5,172.3 318.1,166.3 319.7,160.2 321.5,153.9 323.3,147.5 325.2,141 327.2,134.4 329.2,127.6 331.4,120.6 333.7,113.5 336.1,106.2 338.6,98.8 341.2,91.1 343.9,83.3 346.8,75.3 349.8,67.1 352.9,58.7 356.2,50 359.6,41.1 363.2,32 367,22.6"/>
<polyline points="482.4,751.6 482.3,751.2 482.3,750.9 482.3,750.5 482.2,750.1 482.2,749.8 482.1,749.4 482.1,749 482,748.7 482,748.3 481.9,747.9 481.9,747.6 481.8,747.2 481.8,746.8 481.7,746.5 481.7,746.1 481.7,745.7 481.6,745.3 481.6,745 481.5,744.6 481.5,744.2 481.4,743.8 481.4,743.5 481.3,743.1 481.3,742.7 481.2,742.3 481.2,741.9 481.1,741.6 481.1,741.2 481,740.8 481,740.4 480.9,740 480.8,739.6 480.7,739.2 480.6,738.9 480.5,738.5 480.5,738.1 480.4,737.7 480.3,737.3 480.3,736.9 480.2,736.5 480.1,736.1 480.1,735.7 480,735.3 479.9,734.9 479.9,734.5 479.8,734.1 479.8,733.7 479.7,733.3 479.6,732.9 479.6,732.5 479.5,732.1 479.5,731.6 479.4,731.2 479.4,730.8 479.3,730.4 479.3,730 479.2,729.5 479.2,729.1 479.1,728.7 479,728.3 479,727.8 478.9,727.4 478.9,727 478.8,726.6 478.8,726.1 478.7,725.7 478.7,725.2 478.6,724.8 478.6,724.4 478.6,723.9 478.5,723.5 478.5,723 478.4,722.6 478.4,722.1 478.3,721.7 478.3,721.2 478.2,720.8 478.2,720.3 478.1,719.9 478.1,719.4 478.1,718.9 478,718.5 478,718 477.9,717.5 477.9,717.1 477.9,716.6 477.8,716.1 477.8,715.6 477.8,715.2 477.7,714.7 477.7,714.2 477.7,713.7 477.6,713.2 477.6,712.7 477.6,712.2 477.5,711.7 477.5,711.2 477.5,710.7 477.4,710.2 477.4,709.7 477.4,709.2 477.4,708.7 477.3,708.2 477.3,707.7 477.3,707.2 477.2,706.7 477.2,706.1 477.2,705.6 477.2,705.1 477.1,704.6 477.1,704.1 477.1,703.5 477,703 477,702.5 477,702 477,701.4 476.9,700.9 476.9,700.4 476.9,699.8 476.8,699.3 476.8,698.8 476.8,698.2 476.7,697.7 476.7,697.1 476.7,696.6 476.6,696.1 476.6,695.5 476.6,695 476.5,694.4 476.5,693.9 476.4,693.4 476.4,692.8 476.3,692.3 476.3,691.7 476.2,691.2 476.2,690.6 476.2,690.1 476.1,689.5 476.1,689 476,688.4 476,687.9 475.9,687.3 475.9,686.7 475.8,686.2 475.7,685.6 475.7,685 475.6,684.5 475.6,683.9 475.5,683.3 475.5,682.8 475.4,682.2 475.4,681.6 475.3,681.1 475.2,680.5 475.2,679.9 475.1,679.3 475.1,678.7 475,678.2 474.9,677.6 474.9,677 474.8,676.4 474.8,675.8 474.7,675.2 474.6,674.6 474.6,674 474.5,673.4 474.4,672.8 474.4,672.2 474.3,671.6 474.2,671 474.2,670.4 474.1,669.8 474,669.2 474,668.6 473.9,667.9 473.8,667.3 473.8,666.7 473.7,666.1 473.6,665.4 473.5,664.8 473.5,664.2 473.4,663.5 473.3,662.9 473.3,662.3 473.2,661.6 473.1,661 473,660.3 473,659.7 472.9,659 472.8,658.4 472.7,657.7 472.6,657.1 472.6,656.4 472.5,655.7 472.4,655.1 472.3,654.4 472.2,653.7 472.1,653.1 472.1,652.4 472,651.7 471.9,651.1 471.8,650.4 471.7,649.7 471.6,649 471.5,648.3 471.4,647.6 471.3,646.9 471.2,646.2 471.2,645.5 471.1,644.8 471,644.1 470.9,643.4 470.8,642.7 470.7,642 470.6,641.3 470.5,640.6 470.4,639.8 470.3,639.1 470.2,638.4 470.1,637.6 470,636.9 469.9,636.2 469.8,635.4 469.7,634.7 469.6,633.9 469.5,633.2 469.4,632.4 469.3,631.6 469.2,630.9 469,630.1 468.9,629.3 468.8,628.5 468.7,627.8 468.6,627 468.5,626.2 468.4,625.4 468.3,624.6 468.2,623.8 468.1,623 467.9,622.2 467.8,621.4 467.7,620.6 467.6,619.8 467.5,618.9 467.3,618.1 467.2,617.3 467.1,616.5 467,615.6 466.8,614.8 466.7,613.9 466.6,613.1 466.5,612.2 466.3,611.4 466.2,610.5 466.1,609.7 465.9,608.8 465.8,607.9 465.6,607 465.5,606.2 465.4,605.3 465.2,604.4 465.1,603.5 464.9,602.6 464.8,601.7 464.6,600.8 464.5,599.8 464.3,598.9 464.2,598 464,597.1 463.9,596.1 463.7,595.2 463.6,594.3 463.4,593.3 463.3,592.3 463.1,591.4 462.9,590.4 462.8,589.4 462.6,588.5 462.4,587.5 462.3,586.5 462.1,585.5 461.9,584.5 461.8,583.5 461.6,582.5 461.4,581.5 461.2,580.5 461,579.4 460.9,578.4 460.7,577.4 460.5,576.3 460.3,575.3 460.1,574.2 459.9,573.1 459.7,572.1 459.5,571 459.3,569.9 459.1,568.8 458.9,567.7 458.7,566.6 458.5,565.5 458.3,564.4 458,563.3 457.8,562.2 457.6,561 457.4,559.9 457.1,558.7 456.9,557.6 456.7,556.4 456.4,555.3 456.2,554.1 456,552.9 455.7,551.7 455.5,550.5 455.2,549.3 455,548.1 454.7,546.9 454.5,545.7 454.2,544.4 453.9,543.2 453.7,541.9 453.4,540.7 453.1,539.4 452.8,538.1 452.5,536.9 452.3,535.6 452,534.3 451.7,533 451.4,531.7 451.1,530.3 450.8,529 450.5,527.7 450.1,526.3 449.8,525 449.5,523.6 449.2,522.2 448.8,520.8 448.5,519.5 448.2,518.1 447.8,516.7 447.4,515.2 447.1,513.8 446.7,512.4 446.4,510.9 446,509.5 445.6,508 445.2,506.6 444.8,505.1 444.5,503.6 444.1,502.1 443.7,500.6 443.3,499 442.8,497.5 442.4,496 442,494.4 441.6,492.8 441.2,491.3 440.7,489.7 440.3,488.1 439.9,486.4 439.4,484.8 439,483.2 438.6,481.5 438.1,479.8 437.7,478.1 437.2,476.4 436.7,474.7 436.3,473 435.8,471.3 435.4,469.5 434.9,467.7 434.4,465.9 434,464.1 433.5,462.3 433,460.4 432.5,458.6 432.1,456.7 431.6,454.8 431.1,452.9 430.6,451 430.2,449 429.7,447 429.2,445 428.7,443 428.2,441 427.7,439 427.3,436.9 426.8,434.8 426.3,432.8 425.8,430.6 425.3,428.5 424.8,426.4 424.3,424.2 423.8,422 423.3,419.8 422.8,417.6 422.3,415.3 421.8,413 421.3,410.7 420.8,408.4 420.3,406.1 419.8,403.7 419.3,401.3 418.8,398.9 418.3,396.5 417.8,394 417.4,391.5 416.9,388.9 416.4,386.4 416,383.8 415.5,381.2 415.1,378.5 414.7,375.9 414.2,373.1 413.8,370.4 413.4,367.6 413,364.8 412.6,361.9 412.3,359 411.9,356.1 411.6,353.1 411.3,350.1 410.9,347.1 410.7,344 410.4,340.8 410.1,337.7 409.9,334.4 409.7,331.1 409.5,327.8 409.3,324.4 409.2,321 409,317.5 408.9,314 408.8,310.4 408.8,306.8 408.7,303.1 408.7,299.4 408.7,295.6 408.7,291.7 408.8,287.8 408.9,283.9 409,279.8 409.1,275.7 409.3,271.6 409.5,267.4 409.7,263.1 409.9,258.8 410.2,254.4 410.5,249.9 410.9,245.3 411.3,240.7 411.7,236 412.2,231.2 412.7,226.3 413.3,221.3 413.9,216.3 414.6,211.1 415.3,205.9 416,200.5 416.9,195.1 417.7,189.6 418.7,183.9 419.6,178.1 420.7,172.3 421.8,166.3 423,160.2 424.3,153.9 425.6,147.5 427,141 428.5,134.4 430.1,127.6 431.8,120.6 433.6,113.5 435.4,106.2 437.4,98.8 439.5,91.1 441.7,83.3 444,75.3 446.4,67.1 449,58.7 451.7,50 454.6,41.1 457.6,32 460.8,22.6"/>
<polyline points="540.6,751.6 540.6,751.2 540.6,750.9 540.6,750.5 540.6,750.1 540.6,749.8 540.6,749.4 540.6,749 540.7,748.7 540.7,748.3 540.7,747.9 540.7,747.6 540.7,747.2 540.7,746.8 540.7,746.5 540.8,746.1 540.8,745.7 540.8,745.3 540.8,745 540.8,744.6 540.8,744.2 540.8,743.8 540.9,743.5 540.9,743.1 540.9,742.7 540.9,742.3 540.9,741.9 540.9,741.6 541,741.2 541,740.8 541,740.4 540.8,740 540.8,739.6 540.7,739.2 540.7,738.9 540.7,738.5 540.7,738.1 540.6,737.7 540.6,737.3 540.6,736.9 540.6,736.5 540.6,736.1 540.6,735.7 540.6,735.3 540.6,734.9 540.6,734.5 540.6,734.1 540.6,733.7 540.6,733.3 540.6,732.9 540.6,732.5 540.6,732.1 540.6,731.6 540.6,731.2 540.6,730.8 540.6,730.4 540.6,730 540.6,729.5 540.7,729.1 540.7,728.7 540.7,728.3 540.7,727.8 540.7,727.4 540.7,727 540.8,726.6 540.8,726.1 540.8,725.7 540.8,725.2 540.8,724.8 540.9,724.4 540.9,723.9 540.9,723.5 540.9,723 541,722.6 541,722.1 541,721.7 541,721.2 541.1,720.8 541.1,720.3 541.1,719.9 541.2,719.4 541.2,718.9 541.2,718.5 541.3,718 541.3,717.5 541.4,717.1 541.4,716.6 541.4,716.1 541.5,715.6 541.5,715.2 541.6,714.7 541.6,714.2 541.7,713.7 541.7,713.2 541.8,712.7 541.8,712.2 541.9,711.7 541.9,711.2 542,710.7 542,710.2 542.1,709.7 542.2,709.2 542.2,708.7 542.3,708.2 542.3,707.7 542.4,707.2 542.5,706.7 542.5,706.1 542.6,705.6 542.6,705.1 542.7,704.6 542.8,704.1 542.8,703.5 542.9,703 543,702.5 543,702 543.1,701.4 543.2,700.9 543.2,700.4 543.3,699.8 543.4,699.3 543.4,698.8 543.5,698.2 543.5,697.7 543.6,697.1 543.7,696.6 543.7,696.1 543.8,695.5 543.9,695 543.9,694.4 544,693.9 544,693.4 544.1,692.8 544.2,692.3 544.2,691.7 544.3,691.2 544.3,690.6 544.4,690.1 544.5,689.5 544.5,689 544.6,688.4 544.6,687.9 544.7,687.3 544.8,686.7 544.8,686.2 544.9,685.6 544.9,685 545,684.5 545.1,683.9 545.1,683.3 545.2,682.8 545.3,682.2 545.3,681.6 545.4,681.1 545.4,680.5 545.5,679.9 545.6,679.3 545.6,678.7 545.7,678.2 545.7,677.6 545.8,677 545.9,676.4 545.9,675.8 546,675.2 546.1,674.6 546.1,674 546.2,673.4 546.3,672.8 546.3,672.2 546.4,671.6 546.5,671 546.5,670.4 546.6,669.8 546.7,669.2 546.7,668.6 546.8,667.9 546.9,667.3 546.9,666.7 547,666.1 547.1,665.4 547.2,664.8 547.2,664.2 547.3,663.5 547.4,662.9 547.5,662.3 547.5,661.6 547.6,661 547.7,660.3 547.7,659.7 547.8,659 547.9,658.4 548,657.7 548,657.1 548.1,656.4 548.2,655.7 548.3,655.1 548.4,654.4 548.4,653.7 548.5,653.1 548.6,652.4 548.7,651.7 548.7,651.1 548.8,650.4 548.9,649.7 549,649 549.1,648.3 549.1,647.6 549.2,646.9 549.3,646.2 549.4,645.5 549.5,644.8 549.6,644.1 549.6,643.4 549.7,642.7 549.8,642 549.9,641.3 550,640.6 550.1,639.8 550.2,639.1 550.3,638.4 550.3,637.6 550.4,636.9 550.5,636.2 550.6,635.4 550.7,634.7 550.8,633.9 550.9,633.2 551,632.4 551.1,631.6 551.2,630.9 551.3,630.1 551.4,629.3 551.5,628.5 551.6,627.8 551.7,627 551.8,626.2 551.9,625.4 552,624.6 552.2,623.8 552.3,623 552.4,622.2 552.5,621.4 552.6,620.6 552.7,619.8 552.8,618.9 552.9,618.1 553,617.3 553.2,616.5 553.3,615.6 553.4,614.8 553.5,613.9 553.6,613.1 553.7,612.2 553.9,611.4 554,610.5 554.1,609.7 554.2,608.8 554.3,607.9 554.5,607 554.6,606.2 554.7,605.3 554.9,604.4 555,603.5 555.1,602.6 555.2,601.7 555.4,600.8 555.5,599.8 555.6,598.9 555.8,598 555.9,597.1 556,596.1 556.2,595.2 556.3,594.3 556.5,593.3 556.6,592.3 556.7,591.4 556.9,590.4 557,589.4 557.2,588.5 557.3,587.5 557.5,586.5 557.6,585.5 557.8,584.5 557.9,583.5 558.1,582.5 558.2,581.5 558.4,580.5 558.6,579.4 558.7,578.4 558.9,577.4 559,576.3 559.2,575.3 559.4,574.2 559.5,573.1 559.7,572.1 559.9,571 560,569.9 560.2,568.8 560.4,567.7 560.5,566.6 560.7,565.5 560.9,564.4 561.1,563.3 561.2,562.2 561.4,561 561.6,559.9 561.8,558.7 561.9,557.6 562.1,556.4 562.3,555.3 562.5,554.1 562.7,552.9 562.9,551.7 563,550.5 563.2,549.3 563.4,548.1 563.6,546.9 563.8,545.7 564,544.4 564.2,543.2 564.4,541.9 564.6,540.7 564.7,539.4 564.9,538.1 565.1,536.9 565.3,535.6 565.5,534.3 565.7,533 565.9,531.7 566.1,530.3 566.3,529 566.5,527.7 566.7,526.3 566.9,525 567.1,523.6 567.3,522.2 567.5,520.8 567.7,519.5 567.9,518.1 568.1,516.7 568.3,515.2 568.5,513.8 568.7,512.4 568.9,510.9 569.1,509.5 569.3,508 569.5,506.6 569.7,505.1 569.9,503.6 570.1,502.1 570.3,500.6 570.4,499 570.6,497.5 570.8,496 571,494.4 571.2,492.8 571.4,491.3 571.6,489.7 571.8,488.1 572,486.4 572.2,484.8 572.4,483.2 572.6,481.5 572.8,479.8 573,478.1 573.2,476.4 573.4,474.7 573.6,473 573.8,471.3 574,469.5 574.2,467.7 574.4,465.9 574.6,464.1 574.9,462.3 575.1,460.4 575.3,458.6 575.5,456.7 575.7,454.8 575.9,452.9 576.1,451 576.3,449 576.6,447 576.8,445 577,443 577.2,441 577.4,439 577.6,436.9 577.8,434.8 578,432.8 578.2,430.6 578.4,428.5 578.6,426.4 578.7,424.2 578.9,422 579.1,419.8 579.3,417.6 579.5,415.3 579.6,413 579.8,410.7 580,408.4 580.1,406.1 580.3,403.7 580.4,401.3 580.6,398.9 580.7,396.5 580.9,394 581,391.5 581.2,388.9 581.3,386.4 581.4,383.8 581.6,381.2 581.7,378.5 581.8,375.9 581.9,373.1 582.1,370.4 582.2,367.6 582.3,364.8 582.4,361.9 582.5,359 582.7,356.1 582.8,353.1 582.9,350.1 583,347.1 583.1,344 583.2,340.8 583.4,337.7 583.5,334.4 583.6,331.1 583.7,327.8 583.8,324.4 584,321 584.1,317.5 584.2,314 584.3,310.4 584.5,306.8 584.6,303.1 584.7,299.4 584.8,295.6 584.9,291.7 585.1,287.8 585.2,283.9 585.3,279.8 585.4,275.7 585.6,271.6 585.7,267.4 585.8,263.1 586,258.8 586.1,254.4 586.3,249.9 586.5,245.3 586.7,240.7 586.8,236 587.1,231.2 587.3,226.3 587.5,221.3 587.8,216.3 588.1,211.1 588.4,205.9 588.7,200.5 589.1,195.1 589.5,189.6 590,183.9 590.4,178.1 590.9,172.3 591.5,166.3 592.1,160.2 592.8,153.9 593.5,147.5 594.2,141 595.1,134.4 595.9,127.6 596.9,120.6 597.9,113.5 599.1,106.2 600.2,98.8 601.5,91.1 602.9,83.3 604.4,75.3 606,67.1 607.7,58.7 609.5,50 611.5,41.1 613.6,32 615.8,22.6"/>
<polyline points="599.4,751.6 599.4,751.2 599.4,750.9 599.5,750.5 599.6,750.1 599.6,749.8 599.7,749.4 599.7,749 599.8,748.7 599.8,748.3 599.9,747.9 599.9,747.6 600,747.2 600,746.8 600.1,746.5 600.1,746.1 600.2,745.7 600.2,745.3 600.3,745 600.4,744.6 600.4,744.2 600.5,743.8 600.5,743.5 600.6,743.1 600.6,742.7 600.7,742.3 600.8,741.9 600.8,741.6 600.9,741.2 600.9,740.8 601,740.4 600.7,740 600.7,739.6 600.6,739.2 600.6,738.9 600.6,738.5 600.5,738.1 600.5,737.7 600.5,737.3 600.5,736.9 600.6,736.5 600.6,736.1 600.6,735.7 600.6,735.3 600.6,734.9 600.6,734.5 600.7,734.1 600.7,733.7 600.7,733.3 600.8,732.9 600.8,732.5 600.8,732.1 600.9,731.6 600.9,731.2 600.9,730.8 601,730.4 601,730 601.1,729.5 601.1,729.1 601.2,728.7 601.2,728.3 601.2,727.8 601.3,727.4 601.4,727 601.4,726.6 601.5,726.1 601.5,725.7 601.6,725.2 601.6,724.8 601.7,724.4 601.7,723.9 601.8,723.5 601.9,723 601.9,722.6 602,722.1 602.1,721.7 602.1,721.2 602.2,720.8 602.3,720.3 602.3,719.9 602.4,719.4 602.5,718.9 602.6,718.5 602.6,718 602.7,717.5 602.8,717.1 602.9,716.6 603,716.1 603.1,715.6 603.1,715.2 603.2,714.7 603.3,714.2 603.4,713.7 603.5,713.2 603.6,712.7 603.7,712.2 603.8,711.7 603.9,711.2 604,710.7 604.1,710.2 604.2,709.7 604.3,709.2 604.4,708.7 604.5,708.2 604.6,707.7 604.7,707.2 604.9,706.7 605,706.1 605.1,705.6 605.2,705.1 605.3,704.6 605.4,704.1 605.5,703.5 605.6,703 605.8,702.5 605.9,702 606,701.4 606.1,700.9 606.2,700.4 606.3,699.8 606.5,699.3 606.6,698.8 606.7,698.2 606.8,697.7 606.9,697.1 607,696.6 607.2,696.1 607.3,695.5 607.4,695 607.5,694.4 607.6,693.9 607.7,693.4 607.9,692.8 608,692.3 608.1,691.7 608.2,691.2 608.3,690.6 608.5,690.1 608.6,689.5 608.7,689 608.8,688.4 608.9,687.9 609.1,687.3 609.2,686.7 609.3,686.2 609.4,685.6 609.5,685 609.7,684.5 609.8,683.9 609.9,683.3 610,682.8 610.2,682.2 610.3,681.6 610.4,681.1 610.5,680.5 610.7,679.9 610.8,679.3 610.9,678.7 611.1,678.2 611.2,677.6 611.3,677 611.5,676.4 611.6,675.8 611.7,675.2 611.9,674.6 612,674 612.1,673.4 612.3,672.8 612.4,672.2 612.5,671.6 612.7,671 612.8,670.4 613,669.8 613.1,669.2 613.3,668.6 613.4,667.9 613.5,667.3 613.7,666.7 613.8,666.1 614,665.4 614.1,664.8 614.3,664.2 614.4,663.5 614.6,662.9 614.7,662.3 614.9,661.6 615.1,661 615.2,660.3 615.4,659.7 615.5,659 615.7,658.4 615.8,657.7 616,657.1 616.2,656.4 616.3,655.7 616.5,655.1 616.7,654.4 616.8,653.7 617,653.1 617.2,652.4 617.3,651.7 617.5,651.1 617.7,650.4 617.8,649.7 618,649 618.2,648.3 618.3,647.6 618.5,646.9 618.7,646.2 618.9,645.5 619.1,644.8 619.2,644.1 619.4,643.4 619.6,642.7 619.8,642 620,641.3 620.2,640.6 620.4,639.8 620.5,639.1 620.7,638.4 620.9,637.6 621.1,636.9 621.3,636.2 621.5,635.4 621.7,634.7 621.9,633.9 622.1,633.2 622.3,632.4 622.6,631.6 622.8,630.9 623,630.1 623.2,629.3 623.4,628.5 623.6,627.8 623.8,627 624.1,626.2 624.3,625.4 624.5,624.6 624.7,623.8 625,623 625.2,622.2 625.4,621.4 625.7,620.6 625.9,619.8 626.1,618.9 626.4,618.1 626.6,617.3 626.9,616.5 627.1,615.6 627.3,614.8 627.6,613.9 627.8,613.1 628.1,612.2 628.3,611.4 628.6,610.5 628.9,609.7 629.1,608.8 629.4,607.9 629.6,607 629.9,606.2 630.2,605.3 630.4,604.4 630.7,603.5 631,602.6 631.3,601.7 631.5,600.8 631.8,599.8 632.1,598.9 632.4,598 632.7,597.1 633,596.1 633.3,595.2 633.6,594.3 633.9,593.3 634.2,592.3 634.5,591.4 634.8,590.4 635.1,589.4 635.4,588.5 635.7,587.5 636,586.5 636.4,585.5 636.7,584.5 637,583.5 637.4,582.5 637.7,581.5 638,580.5 638.4,579.4 638.7,578.4 639,577.4 639.4,576.3 639.7,575.3 640.1,574.2 640.5,573.1 640.8,572.1 641.2,571 641.5,569.9 641.9,568.8 642.3,567.7 642.7,566.6 643,565.5 643.4,564.4 643.8,563.3 644.2,562.2 644.6,561 645,559.9 645.4,558.7 645.8,557.6 646.2,556.4 646.6,555.3 647,554.1 647.4,552.9 647.8,551.7 648.3,550.5 648.7,549.3 649.1,548.1 649.5,546.9 650,545.7 650.4,544.4 650.9,543.2 651.3,541.9 651.8,540.7 652.2,539.4 652.7,538.1 653.1,536.9 653.6,535.6 654.1,534.3 654.5,533 655,531.7 655.5,530.3 656,529 656.5,527.7 657,526.3 657.5,525 658,523.6 658.5,522.2 659,520.8 659.5,519.5 660,518.1 660.5,516.7 661.1,515.2 661.6,513.8 662.1,512.4 662.6,510.9 663.2,509.5 663.7,508 664.3,506.6 664.8,505.1 665.4,503.6 665.9,502.1 666.5,500.6 667.1,499 667.7,497.5 668.2,496 668.8,494.4 669.4,492.8 670,491.3 670.6,489.7 671.3,488.1 671.9,486.4 672.5,484.8 673.1,483.2 673.8,481.5 674.4,479.8 675.1,478.1 675.7,476.4 676.4,474.7 677.1,473 677.8,471.3 678.4,469.5 679.1,467.7 679.8,465.9 680.6,464.1 681.3,462.3 682,460.4 682.8,458.6 683.5,456.7 684.3,454.8 685.1,452.9 685.8,451 686.6,449 687.4,447 688.3,445 689.1,443 689.9,441 690.7,439 691.6,436.9 692.4,434.8 693.3,432.8 694.1,430.6 695,428.5 695.9,426.4 696.8,424.2 697.7,422 698.6,419.8 699.5,417.6 700.5,415.3 701.4,413 702.4,410.7 703.3,408.4 704.3,406.1 705.3,403.7 706.3,401.3 707.3,398.9 708.3,396.5 709.4,394 710.4,391.5 711.5,388.9 712.6,386.4 713.7,383.8 714.8,381.2 715.9,378.5 717,375.9 718.2,373.1 719.4,370.4 720.6,367.6 721.8,364.8 723,361.9 724.3,359 725.5,356.1 726.8,353.1 728.1,350.1 729.5,347.1 730.8,344 732.2,340.8 733.6,337.7 735,334.4 736.5,331.1 738,327.8 739.5,324.4 741,321 742.6,317.5 744.2,314 745.8,310.4 747.4,306.8 749,303.1 750.7,299.4 752.4,295.6 754.1,291.7 755.9,287.8 757.7,283.9 759.5,279.8 761.3,275.7 763.2,271.6 765,267.4 767,263.1 768.9,258.8 770.9,254.4 772.9,249.9 774.9,245.3 777,240.7 779.1,236 781.2,231.2 783.4,226.3 785.6,221.3 787.8,216.3 790.1,211.1 792.4,205.9 794.7,200.5 797.1,195.1 799.5,189.6 801.9,183.9 804.4,178.1 806.9,172.3 809.5,166.3 812.1,160.2 814.8,153.9 817.4,147.5 820.2,141 822.9,134.4 825.8,127.6 828.6,120.6 831.5,113.5 834.5,106.2 837.5,98.8 840.5,91.1 843.6,83.3 846.7,75.3 849.9,67.1 853.1,58.7 856.3,50 859.6,41.1 863,32 866.4,22.6"/>
</g>
<g stroke="#fff" stroke-width="1">
<line x1="-678" y1="760" x2="42" y2="40"/>
<line x1="-618" y1="760" x2="102" y2="40"/>
<line x1="-558" y1="760" x2="162" y2="40"/>
<line x1="-498" y1="760" x2="222" y2="40"/>
<line x1="-438" y1="760" x2="282" y2="40"/>
<line x1="-378" y1="760" x2="342" y2="40"/>
<line x1="-318" y1="760" x2="402" y2="40"/>
<line x1="-258" y1="760" x2="462" y2="40"/>
<line x1="-198" y1="760" x2="522" y2="40"/>
<line x1="-138" y1="760" x2="582" y2="40"/>
<line x1="-78" y1="760" x2="642" y2="40"/>
<line x1="-18" y1="760" x2="702" y2="40"/>
<line x1="42" y1="760" x2="762" y2="40"/>
<line x1="102" y1="760" x2="822" y2="40"/>
<line x1="162" y1="760" x2="882" y2="40"/>
<line x1="222" y1="760" x2="942" y2="40"/>
<line x1="282" y1="760" x2="1002" y2="40"/>
<line x1="342" y1="760" x2="1062" y2="40"/>
<line x1="402" y1="760" x2="1122" y2="40"/>
<line x1="462" y1="760" x2="1182" y2="40"/>
<line x1="522" y1="760" x2="1242" y2="40"/>
<line x1="582" y1="760" x2="1302" y2="40"/>
<line x1="642" y1="760" x2="1362" y2="40"/>
</g>
</g>
<g stroke="#fff" stroke-width="1" shape-rendering="crispEdges">
<line x1="56" y1="50.5" x2="667" y2="50.5"/>
<line x1="56" y1="321.5" x2="667" y2="321.5"/>
<line x1="56" y1="449.5" x2="667" y2="449.5"/>
<line x1="56" y1="529.5" x2="667" y2="529.5"/>
<line x1="56" y1="586.5" x2="667" y2="586.5"/>
<line x1="56" y1="630.5" x2="667" y2="630.5"/>
<line x1="56" y1="665.5" x2="667" y2="665.5"/>
<line x1="56" y1="694.5" x2="667" y2="694.5"/>
<line x1="56" y1="719.5" x2="667" y2="719.5"/>
<line x1="56" y1="740.5" x2="667" y2="740.5"/>
<rect x="61.5" y="50.5" width="600" height="699" fill="none"/>
<line x1="61.5" y1="749" x2="61.5" y2="755"/>
<line x1="121.5" y1="749" x2="121.5" y2="755"/>
<line x1="181.5" y1="749" x2="181.5" y2="755"/>
<line x1="241.5" y1="749" x2="241.5" y2="755"/>
<line x1="301.5" y1="749" x2="301.5" y2="755"/>
<line x1="361.5" y1="749" x2="361.5" y2="755"/>
<line x1="421.5" y1="749" x2="421.5" y2="755"/>
<line x1="481.5" y1="749" x2="481.5" y2="755"/>
<line x1="541.5" y1="749" x2="541.5" y2="755"/>
<line x1="601.5" y1="749" x2="601.5" y2="755"/>
<line x1="661.5" y1="749" x2="661.5" y2="755"/>
<line x1="61.5" y1="789" x2="61.5" y2="793"/>
<line x1="61.5" y1="826" x2="61.5" y2="830"/>
<line x1="121.5" y1="789" x2="121.5" y2="793"/>
<line x1="121.5" y1="826" x2="121.5" y2="830"/>
<line x1="181.5" y1="789" x2="181.5" y2="793"/>
<line x1="181.5" y1="826" x2="181.5" y2="830"/>
<line x1="241.5" y1="789" x2="241.5" y2="793"/>
<line x1="241.5" y1="826" x2="241.5" y2="830"/>
<line x1="301.5" y1="789" x2="301.5" y2="793"/>
<line x1="301.5" y1="826" x2="301.5" y2="830"/>
<line x1="361.5" y1="789" x2="361.5" y2="793"/>
<line x1="361.5" y1="826" x2="361.5" y2="830"/>
<line x1="421.5" y1="789" x2="421.5" y2="793"/>
<line x1="421.5" y1="826" x2="421.5" y2="830"/>
<line x1="481.5" y1="789" x2="481.5" y2="793"/>
<line x1="481.5" y1="826" x2="481.5" y2="830"/>
<line x1="541.5" y1="789" x2="541.5" y2="793"/>
<line x1="541.5" y1="826" x2="541.5" y2="830"/>
<line x1="601.5" y1="789" x2="601.5" y2="793"/>
<line x1="601.5" y1="826" x2="601.5" y2="830"/>
<line x1="661.5" y1="789" x2="661.5" y2="793"/>
<line x1="661.5" y1="826" x2="661.5" y2="830"/>
<line x1="61.5" y1="863" x2="61.5" y2="867"/>
<line x1="136.5" y1="863" x2="136.5" y2="867"/>
<line x1="211.5" y1="863" x2="211.5" y2="867"/>
<line x1="286.5" y1="863" x2="286.5" y2="867"/>
<line x1="361.5" y1="863" x2="361.5" y2="867"/>
<line x1="436.5" y1="863" x2="436.5" y2="867"/>
<line x1="511.5" y1="863" x2="511.5" y2="867"/>
<line x1="586.5" y1="863" x2="586.5" y2="867"/>
<line x1="661.5" y1="863" x2="661.5" y2="867"/>
</g>
<g clip-path="url(#box)" shape-rendering="crispEdges">
<polygon points="383,424 382.3,427.4 381.8,436.2 382.3,445.6 383.6,474.1 384.1,481.7 389.1,496.9 389.9,501.9 396.2,532.2 396.7,538.5 400.5,549.3 399.8,562.1 403.1,567.6 410.8,573.1 415.7,579.8 419.7,595.2 422.3,612.9 424.1,632.8 423,638.3 428.5,643.9 430.7,652.7 438.5,662.7 441.8,672.6 438.5,677 448.4,684.8 455,691.4 455,690.5 383.8,425.1 384.6,428.3 385.4,431.5 386.1,434.7 386.9,437.8 387.7,440.8 388.4,443.9 389.2,446.9 390,449.8 390.8,452.7 391.6,455.6 392.5,458.4 393.3,461.2 394.2,464 395.1,466.7 395.9,469.3 396.7,472 397.6,474.6 398.4,477.2 399.2,479.7 400.1,482.2 400.9,484.7 401.8,487.1 402.8,489.5 403.7,491.9 404.7,494.3 405.6,496.6 406.6,498.9 407.3,501.2 407.8,503.5 408.3,505.7 408.8,507.9 409.3,510.1 409.8,512.3 410.3,514.4 410.8,516.5 411.3,518.6 411.8,520.7 412.4,522.8 413.1,524.8 413.7,526.9 414.3,528.9 414.8,530.9 415.4,532.9 416,534.8 416.6,536.8 417.1,538.7 417.7,540.6 418.2,542.5 418.7,544.3 419.2,546.2 419.7,548 420.1,549.8 420.6,551.6 421.1,553.4 421.6,555.2 422.1,556.9 422.7,558.6 423.2,560.4 423.7,562.1 424.3,563.8 424.8,565.4 425.3,567.1 425.8,568.7 426.3,570.4 426.8,572 427.3,573.6 427.8,575.2 428.3,576.7 428.7,578.3 429.2,579.9 429.6,581.4 430.1,582.9 430.5,584.4 431,585.9 431.4,587.4 431.8,588.9 432.3,590.3 432.7,591.8 433.1,593.2 433.5,594.6 433.9,596.1 434.3,597.5 434.7,598.9 435.1,600.2 435.5,601.6 435.9,603 436.3,604.3 436.6,605.6 437,607 437.3,608.3 437.6,609.6 438,610.9 438.3,612.2 438.6,613.4 439,614.7 439.3,616 439.6,617.2 439.9,618.5 440.2,619.7 440.5,620.9 440.8,622.1 441.1,623.3 441.4,624.5 441.7,625.7 442,626.9 442.3,628.1 442.5,629.3 442.8,630.4 443.1,631.6 443.4,632.7 443.6,633.9 443.9,635 444.1,636.1 444.4,637.2 444.7,638.3 444.9,639.4 445.2,640.5 445.4,641.6 445.7,642.6 445.9,643.7 446.2,644.8 446.4,645.8 446.6,646.9 446.9,647.9 447.1,648.9 447.3,650 447.6,651 447.8,652 448,653 448.2,654 448.4,655 448.6,656 448.8,657 449.1,658 449.3,659 449.5,659.9 449.7,660.9 449.8,661.9 450,662.8 450.2,663.8 450.4,664.7 450.6,665.7 450.8,666.6 451,667.6 451.1,668.5 451.3,669.4 451.5,670.3 451.7,671.3 451.8,672.2 452,673.1 452.2,674 452.3,674.9 452.5,675.8 452.7,676.6 452.8,677.5 453,678.4 453.1,679.3 453.3,680.1 453.5,681 453.6,681.9 453.8,682.7 453.9,683.6 454,684.4 454.2,685.3 454.3,686.1 454.5,687 454.6,687.8 454.7,688.6 454.9,689.5 455,690.3" fill="#008000" shape-rendering="auto"/>
<path d="M83 677.5h5M85.5 675v5M78 678.5h5M80.5 676v5M69 682.5h5M71.5 680v5M61 685.5h5M63.5 683v5M64 692.5h5M66.5 690v5M64 706.5h5M66.5 704v5M64 713.5h5M66.5 711v5M77 725.5h5M79.5 723v5M59 730.5h5M61.5 728v5" stroke="#fff" stroke-width="1" fill="none"/>
<polyline points="85.3,677.3 80.2,678.5 71.4,682.3 63.8,685.7 66.3,692 66.3,706.7 66.7,713.9 79.8,725.2 61.7,730.3" fill="none" stroke="#e87800" stroke-width="1" stroke-linejoin="round"/>
<path d="M59 676.5h5M61.5 674v5M83 678.5h5M85.5 676v5M93 680.5h5M95.5 678v5M148 686.5h5M150.5 684v5M189 694.5h5M191.5 692v5M153 706.5h5M155.5 704v5M162 713.5h5M164.5 711v5M190 725.5h5M192.5 723v5M198 726.5h5M200.5 724v5M253 730.5h5M255.5 728v5" stroke="#fff" stroke-width="1" fill="none"/>
<polyline points="61.7,676.4 85.3,678.1 95.4,680.2 150,686.3 191.1,694.2 155.8,706.3 164.7,713.2 192.1,725.3 200.5,726.3 255.3,730" fill="none" stroke="#ffff00" stroke-width="1" stroke-linejoin="round"/>
<path d="M209 730.5h5M211.5 728v5M197 724.5h5M199.5 722v5M196 713.5h5M198.5 711v5M197 706.5h5M199.5 704v5M200 694.5h5M202.5 692v5M210 685.5h5M212.5 683v5M210 680.5h5M212.5 678v5M233 672.5h5M235.5 670v5M210 671.5h5M212.5 669v5M185 669.5h5M187.5 667v5M175 665.5h5M177.5 663v5M166 661.5h5M168.5 659v5M181 659.5h5M183.5 657v5M163 651.5h5M165.5 649v5" stroke="#fff" stroke-width="1" fill="none"/>
<polyline points="211.6,730 199.5,724.2 198.4,713.7 199.5,706.3 202.1,694.2 212.6,685.3 212.6,680.5 235.8,672.1 212.1,671.1 187.4,669 177.9,665.3 168.4,661.6 183.7,659.5 165.3,651.6" fill="none" stroke="#c8c800" stroke-width="1" stroke-linejoin="round"/>
<path d="M137 50.5h5M139.5 48v5M132 76.5h5M134.5 74v5M123 89.5h5M125.5 87v5M150 110.5h5M152.5 108v5M167 122.5h5M169.5 120v5M167 139.5h5M169.5 137v5M179 147.5h5M181.5 145v5M179 161.5h5M181.5 159v5M185 176.5h5M187.5 174v5M191 217.5h5M193.5 215v5M197 239.5h5M199.5 237v5M197 250.5h5M199.5 248v5M203 261.5h5M205.5 259v5M191 286.5h5M193.5 284v5M191 312.5h5M193.5 310v5M209 321.5h5M211.5 319v5M197 329.5h5M199.5 327v5M227 381.5h5M229.5 379v5M215 394.5h5M217.5 392v5M215 415.5h5M217.5 413v5M220 419.5h5M222.5 417v5M256 436.5h5M258.5 434v5M293 445.5h5M295.5 443v5M288 448.5h5M290.5 446v5M245 473.5h5M247.5 471v5M233 476.5h5M235.5 474v5M233 482.5h5M235.5 480v5M245 496.5h5M247.5 494v5M227 502.5h5M229.5 500v5M233 529.5h5M235.5 527v5M215 532.5h5M217.5 530v5M215 538.5h5M217.5 536v5M215 549.5h5M217.5 547v5M203 561.5h5M205.5 559v5M161 574.5h5M163.5 572v5M173 579.5h5M175.5 577v5M173 598.5h5M175.5 596v5M179 605.5h5M181.5 603v5M161 612.5h5M163.5 610v5M173 615.5h5M175.5 613v5M149 620.5h5M151.5 618v5M161 622.5h5M163.5 620v5M161 632.5h5M163.5 630v5M131 638.5h5M133.5 636v5M149 644.5h5M151.5 642v5M131 650.5h5M133.5 648v5M143 654.5h5M145.5 652v5M131 659.5h5M133.5 657v5M131 662.5h5M133.5 660v5M149 664.5h5M151.5 662v5M149 670.5h5M151.5 668v5M162 672.5h5M164.5 670v5M137 676.5h5M139.5 674v5M119 684.5h5M121.5 682v5M89 694.5h5M91.5 692v5M106 706.5h5M108.5 704v5M100 707.5h5M102.5 705v5M119 713.5h5M121.5 711v5M113 725.5h5M115.5 723v5M107 730.5h5M109.5 728v5" stroke="#fff" stroke-width="1" fill="none"/>
<polyline points="139.6,50 134.5,76.2 125.3,89.7 152.2,110.4 169,122.2 169.4,139.4 181.2,147.5 181.2,161.3 187.3,176.1 193.1,217 199.4,239.3 199.7,250.6 205.6,261.6 193.1,286.3 193.1,312.4 211.2,321.4 199.7,329.5 229.4,381.5 217.4,394.3 217.4,415.8 222.6,419.6 258.8,436.8 295.3,445.3 290.4,448.4 247.5,473.1 235.3,476.4 235.3,482.7 247.5,496.8 229.4,502.1 235.5,529.3 217.4,532.2 217.4,538.1 217.4,549.5 205.7,561.2 163.6,574.3 175.4,579.3 175.8,598.5 181.4,605.2 163,612.3 175.8,615.4 151.1,620.3 163.9,622.2 163.9,632.6 133.1,638.3 151.6,644.2 133.1,650.1 145.5,654.4 133.1,659.6 133.1,662.4 151.1,664.3 151.1,670 164.4,672.4 139.1,676.8 121.4,684.8 91.1,694.9 108.8,706.3 102.9,707.1 121.4,713.5 115.1,725.2 109.7,730.3" fill="none" stroke="#00ff00" stroke-width="1" stroke-linejoin="round"/>
<path d="M108 50.5h5M110.5 48v5M139 76.5h5M141.5 74v5M123 89.5h5M125.5 87v5M155 110.5h5M157.5 108v5M148 122.5h5M150.5 120v5M149 139.5h5M151.5 137v5M149 147.5h5M151.5 145v5M166 161.5h5M168.5 159v5M152 176.5h5M154.5 174v5M146 217.5h5M148.5 215v5M168 239.5h5M170.5 237v5M159 249.5h5M161.5 247v5M161 261.5h5M163.5 259v5M136 286.5h5M138.5 284v5M145 312.5h5M147.5 310v5M158 321.5h5M160.5 319v5M144 329.5h5M146.5 327v5M175 381.5h5M177.5 379v5M162 394.5h5M164.5 392v5M160 415.5h5M162.5 413v5M166 418.5h5M168.5 416v5M199 436.5h5M201.5 434v5M237 445.5h5M239.5 443v5M232 449.5h5M234.5 447v5M186 473.5h5M188.5 471v5M175 476.5h5M177.5 474v5M178 482.5h5M180.5 480v5M191 496.5h5M193.5 494v5M171 502.5h5M173.5 500v5M175 529.5h5M177.5 527v5M158 532.5h5M160.5 530v5M156 538.5h5M158.5 536v5M156 549.5h5M158.5 547v5M144 562.5h5M146.5 560v5M103 574.5h5M105.5 572v5M117 578.5h5M119.5 576v5M120 598.5h5M122.5 596v5M130 605.5h5M132.5 603v5M108 611.5h5M110.5 609v5M115 615.5h5M117.5 613v5M108 613.5h5M110.5 611v5M108 623.5h5M110.5 621v5M136 630.5h5M138.5 628v5M151 632.5h5M153.5 630v5M144 636.5h5M146.5 634v5M157 641.5h5M159.5 639v5M148 650.5h5M150.5 648v5M164 654.5h5M166.5 652v5M131 659.5h5M133.5 657v5M165 663.5h5M167.5 661v5M134 672.5h5M136.5 670v5M133 672.5h5M135.5 670v5M128 676.5h5M130.5 674v5M118 679.5h5M120.5 677v5M92 685.5h5M94.5 683v5M88 694.5h5M90.5 692v5M73 706.5h5M75.5 704v5M76 713.5h5M78.5 711v5M103 725.5h5M105.5 723v5M129 729.5h5M131.5 727v5" stroke="#fff" stroke-width="1" fill="none"/>
<polyline points="110.1,50 141.3,76.2 125.3,89.7 157.3,110.4 150.5,122.2 151.4,139.4 151.4,147.5 168.2,161.3 154.2,176.1 148,217 170.4,239.3 161.5,249.8 163.5,261.9 138.4,286.3 147.7,312.4 160.1,321.4 146.3,329.5 177.4,381.1 164.7,394.3 162.6,415.8 168.9,418.9 201.2,436.2 239.1,445.3 234.2,449.5 188.5,473.1 177.4,476.4 180.5,482.7 193.6,496.8 173.6,502.1 177,529.3 160.6,532.2 158.5,538.1 158.4,549.5 146.3,562.1 105,574.5 119,578.6 122.6,598.5 132.7,605.6 110.9,611.3 117.5,615.4 110.9,613.5 110.9,623.1 138.4,630.2 153,632.1 146.4,636.9 159.2,641.6 150.2,650.1 166.3,654.4 133.6,659.1 167.2,663.4 136.5,672.4 135.8,672.6 130.7,676.4 120.6,679.8 94.5,685.3 90.7,694.9 75.6,706.3 78.5,713.5 105.5,725.2 131.1,729.9" fill="none" stroke="#ff1493" stroke-width="1" stroke-linejoin="round"/>
<path d="M586 50.5h5M588.5 48v5M545 76.5h5M547.5 74v5M535 89.5h5M537.5 87v5M516 110.5h5M518.5 108v5M511 122.5h5M513.5 120v5M494 139.5h5M496.5 137v5M486 147.5h5M488.5 145v5M471 161.5h5M473.5 159v5M445 176.5h5M447.5 174v5M410 217.5h5M412.5 215v5M399 239.5h5M401.5 237v5M387 250.5h5M389.5 248v5M360 261.5h5M362.5 259v5M340 286.5h5M342.5 284v5M361 312.5h5M363.5 310v5M361 321.5h5M363.5 319v5M366 329.5h5M368.5 327v5M368 370.5h5M370.5 368v5M368 381.5h5M370.5 379v5M361 394.5h5M363.5 392v5M335 416.5h5M337.5 414v5M334 419.5h5M336.5 417v5M299 435.5h5M301.5 433v5M314 437.5h5M316.5 435v5M337 445.5h5M339.5 443v5M336 450.5h5M338.5 448v5M353 473.5h5M355.5 471v5M358 476.5h5M360.5 474v5M328 481.5h5M330.5 479v5M329 496.5h5M331.5 494v5M338 497.5h5M340.5 495v5M304 501.5h5M306.5 499v5M339 529.5h5M341.5 527v5M352 532.5h5M354.5 530v5M341 538.5h5M343.5 536v5M335 549.5h5M337.5 547v5M306 562.5h5M308.5 560v5M384 573.5h5M386.5 571v5M401 575.5h5M403.5 573v5M403 584.5h5M405.5 582v5M416 596.5h5M418.5 594v5M418 606.5h5M420.5 604v5M422 620.5h5M424.5 618v5M423 631.5h5M425.5 629v5M418 638.5h5M420.5 636v5M405 645.5h5M407.5 643v5M416 650.5h5M418.5 648v5M404 654.5h5M406.5 652v5M381 661.5h5M383.5 659v5M405 665.5h5M407.5 663v5M408 669.5h5M410.5 667v5M416 672.5h5M418.5 670v5M415 676.5h5M417.5 674v5M436 678.5h5M438.5 676v5M447 685.5h5M449.5 683v5M448 694.5h5M450.5 692v5M436 706.5h5M438.5 704v5M434 713.5h5M436.5 711v5M431 725.5h5M433.5 723v5M433 730.5h5M435.5 728v5" stroke="#fff" stroke-width="1" fill="none"/>
<polyline points="600,44 588.7,50.9 547.4,76.5 537.1,89.2 518.5,110.4 513.2,122.2 496.4,139 488.2,147.3 473.4,161.4 447.8,176.7 412.1,217 401.1,239.5 389.3,250.6 362.8,261.2 342.9,286.5 363.2,312.5 363.5,321.2 368.4,329.4 370.2,370.5 370.5,381.4 363.4,394.5 337.6,416 336.1,419.3 301.5,435.5 316.6,437.5 339.4,445.6 338.6,450.1 355.8,473.4 360.3,476.1 330.5,481.7 331.3,496.9 340.6,497.6 306.5,501.9 341.4,529.2 354.5,532.2 343.2,538.5 337.6,549.2 308,562 386.5,573.6 403.1,575.4 405.3,584.2 418.6,596.4 420.1,606.3 424.1,620.7 425.9,631.7 420.8,638.3 407.5,645 418.6,650.1 406.4,654.9 383.2,661.5 407.5,665.5 410.8,669.3 418.6,672.2 417,676.6 438.5,678.1 449.1,685.9 450.6,694.7 438.5,706.9 436.2,713.5 433.6,725.6 435.1,730" fill="none" stroke="#00ffff" stroke-width="1" stroke-linejoin="round"/>
<path d="M658 110.5h5M660.5 108v5M649 122.5h5M651.5 120v5M637 139.5h5M639.5 137v5M627 147.5h5M629.5 145v5M612 161.5h5M614.5 159v5M597 176.5h5M599.5 174v5M548 217.5h5M550.5 215v5M526 239.5h5M528.5 237v5M518 250.5h5M520.5 248v5M500 261.5h5M502.5 259v5M470 286.5h5M472.5 284v5M430 312.5h5M432.5 310v5M410 329.5h5M412.5 327v5M383 380.5h5M385.5 378v5M383 394.5h5M385.5 392v5M382 416.5h5M384.5 414v5M380 427.5h5M382.5 425v5M379 436.5h5M381.5 434v5M380 445.5h5M382.5 443v5M381 474.5h5M383.5 472v5M382 481.5h5M384.5 479v5M387 496.5h5M389.5 494v5M387 501.5h5M389.5 499v5M394 532.5h5M396.5 530v5M394 538.5h5M396.5 536v5M398 549.5h5M400.5 547v5M397 562.5h5M399.5 560v5M401 567.5h5M403.5 565v5M408 573.5h5M410.5 571v5M413 579.5h5M415.5 577v5M417 595.5h5M419.5 593v5M420 612.5h5M422.5 610v5M422 632.5h5M424.5 630v5M421 638.5h5M423.5 636v5M426 643.5h5M428.5 641v5M428 652.5h5M430.5 650v5M436 662.5h5M438.5 660v5M439 672.5h5M441.5 670v5M436 677.5h5M438.5 675v5M446 684.5h5M448.5 682v5M453 691.5h5M455.5 689v5M472 704.5h5M474.5 702v5M482 712.5h5M484.5 710v5M496 724.5h5M498.5 722v5M510 730.5h5M512.5 728v5" stroke="#fff" stroke-width="1" fill="none"/>
<polyline points="672,97 660,110.4 651.1,122.2 639.4,139 629.3,147.3 614.3,161.4 599.6,176.7 550.4,217.4 528.2,239.5 520.6,250.4 502.3,261.3 472.2,286.4 432,312.5 412,329.5 385.6,380.6 385.6,394.5 384.9,416 382.3,427.4 381.8,436.2 382.3,445.6 383.6,474.1 384.1,481.7 389.1,496.9 389.9,501.9 396.2,532.2 396.7,538.5 400.5,549.3 399.8,562.1 403.1,567.6 410.8,573.1 415.7,579.8 419.7,595.2 422.3,612.9 424.1,632.8 423,638.3 428.5,643.9 430.7,652.7 438.5,662.7 441.8,672.6 438.5,677 448.4,684.8 455,691.4 474.9,704.6 484.9,712.4 498.1,724.5 512.5,730" fill="none" stroke="#ff0000" stroke-width="1" stroke-linejoin="round"/>
<polyline points="455,690.3 454.9,689.5 454.7,688.6 454.6,687.8 454.5,687 454.3,686.1 454.2,685.3 454,684.4 453.9,683.6 453.8,682.7 453.6,681.9 453.5,681 453.3,680.1 453.1,679.3 453,678.4 452.8,677.5 452.7,676.6 452.5,675.8 452.3,674.9 452.2,674 452,673.1 451.8,672.2 451.7,671.3 451.5,670.3 451.3,669.4 451.1,668.5 451,667.6 450.8,666.6 450.6,665.7 450.4,664.7 450.2,663.8 450,662.8 449.8,661.9 449.7,660.9 449.5,659.9 449.3,659 449.1,658 448.8,657 448.6,656 448.4,655 448.2,654 448,653 447.8,652 447.6,651 447.3,650 447.1,648.9 446.9,647.9 446.6,646.9 446.4,645.8 446.2,644.8 445.9,643.7 445.7,642.6 445.4,641.6 445.2,640.5 444.9,639.4 444.7,638.3 444.4,637.2 444.1,636.1 443.9,635 443.6,633.9 443.4,632.7 443.1,631.6 442.8,630.4 442.5,629.3 442.3,628.1 442,626.9 441.7,625.7 441.4,624.5 441.1,623.3 440.8,622.1 440.5,620.9 440.2,619.7 439.9,618.5 439.6,617.2 439.3,616 439,614.7 438.6,613.4 438.3,612.2 438,610.9 437.6,609.6 437.3,608.3 437,607 436.6,605.6 436.3,604.3 435.9,603 435.5,601.6 435.1,600.2 434.7,598.9 434.3,597.5 433.9,596.1 433.5,594.6 433.1,593.2 432.7,591.8 432.3,590.3 431.8,588.9 431.4,587.4 431,585.9 430.5,584.4 430.1,582.9 429.6,581.4 429.2,579.9 428.7,578.3 428.3,576.7 427.8,575.2 427.3,573.6 426.8,572 426.3,570.4 425.8,568.7 425.3,567.1 424.8,565.4 424.3,563.8 423.7,562.1 423.2,560.4 422.7,558.6 422.1,556.9 421.6,555.2 421.1,553.4 420.6,551.6 420.1,549.8 419.7,548 419.2,546.2 418.7,544.3 418.2,542.5 417.7,540.6 417.1,538.7 416.6,536.8 416,534.8 415.4,532.9 414.8,530.9 414.3,528.9 413.7,526.9 413.1,524.8 412.4,522.8 411.8,520.7 411.3,518.6 410.8,516.5 410.3,514.4 409.8,512.3 409.3,510.1 408.8,507.9 408.3,505.7 407.8,503.5 407.3,501.2 406.6,498.9 405.6,496.6 404.7,494.3 403.7,491.9 402.8,489.5 401.8,487.1 400.9,484.7 400.1,482.2 399.2,479.7 398.4,477.2 397.6,474.6 396.7,472 395.9,469.3 395.1,466.7 394.2,464 393.3,461.2 392.5,458.4 391.6,455.6 390.8,452.7 390,449.8 389.2,446.9 388.4,443.9 387.7,440.8 386.9,437.8 386.1,434.7 385.4,431.5 384.6,428.3 383.8,425.1 383.1,421.8 382.3,418.5 381.5,415.1 380.9,411.7 380.3,408.2 379.7,404.7 379.2,401.1 378.7,397.5 378.2,393.8 377.8,390 377.4,386.2 377,382.3 376.6,378.3 376.3,374.3 375.9,370.2 375.2,366 374.5,361.7 373.8,357.3 373.1,352.9 372.5,348.4 371.9,343.7 371.4,339 371.2,334.2 371.1,329.2 370.9,324.2 370.9,319 370.7,313.7 370.6,308.3 370.5,302.8 370.5,297.2 370.6,291.4 370.7,285.5 370.9,279.5 371.1,273.3 371.4,267 371.9,260.6 372.8,254 373.7,247.2 374.8,240.3 375.7,233.2 376.6,225.9 377.6,218.4 378.7,210.7 380,202.8 381.2,194.6 382.4,186.3 384.4,177.7 386.9,168.8 389.6,159.7 392.4,150.2 395.5,140.5 397.9,130.4 400.2,120 402.7,109.3 405.5,98.2 408.6,86.6 412.2,74.6 415.9,62.2 419.9,49.3 423.9,35.8 429,21.8 432.6,12.1" fill="none" stroke="#ff00ff" stroke-width="2" stroke-linejoin="round"/>
<polyline points="455.5,690.3 455.4,689.5 455.2,688.6 455.1,687.8 455,687 454.8,686.1 454.7,685.3 454.5,684.4 454.4,683.6 454.3,682.7 454.1,681.9 454,681 453.8,680.1 453.6,679.3 453.5,678.4 453.3,677.5 453.2,676.6 453,675.8 452.8,674.9 452.7,674 452.5,673.1 452.3,672.2 452.2,671.3 452,670.3 451.8,669.4 451.6,668.5 451.5,667.6 451.3,666.6 451.1,665.7 450.9,664.7 450.7,663.8 450.5,662.8 450.3,661.9 450.2,660.9 450,659.9 449.8,659 449.6,658 449.3,657 449.1,656 448.9,655 448.7,654 448.5,653 448.3,652 448.1,651 447.8,650 447.6,648.9 447.4,647.9 447.1,646.9 446.9,645.8 446.7,644.8 446.4,643.7 446.2,642.6 445.9,641.6 445.7,640.5 445.4,639.4 445.2,638.3 444.9,637.2 444.6,636.1 444.4,635 444.1,633.9 443.9,632.7 443.6,631.6 443.3,630.4 443,629.3 442.8,628.1 442.5,626.9 442.2,625.7 441.9,624.5 441.6,623.3 441.3,622.1 441,620.9 440.7,619.7 440.4,618.5 440.1,617.2 439.8,616 439.5,614.7 439.1,613.4 438.8,612.2 438.5,610.9 438.1,609.6 437.8,608.3 437.5,607 437.1,605.6 436.8,604.3 436.4,603 436,601.6 435.6,600.2 435.2,598.9 434.8,597.5 434.4,596.1 434,594.6 433.6,593.2 433.2,591.8 432.8,590.3 432.3,588.9 431.9,587.4 431.5,585.9 431,584.4 430.6,582.9 430.1,581.4 429.7,579.9 429.2,578.3 428.8,576.7 428.3,575.2 427.8,573.6 427.3,572 426.8,570.4 426.3,568.7 425.8,567.1 425.3,565.4 424.8,563.8 424.2,562.1 423.7,560.4 423.2,558.6 422.6,556.9 422.1,555.2 421.6,553.4 421.1,551.6 420.6,549.8 420.2,548 419.7,546.2 419.2,544.3 418.7,542.5 418.2,540.6 417.6,538.7 417.1,536.8 416.5,534.8 415.9,532.9 415.3,530.9 414.8,528.9 414.2,526.9 413.6,524.8 412.9,522.8 412.3,520.7 411.8,518.6 411.3,516.5 410.8,514.4 410.3,512.3 409.8,510.1 409.3,507.9 408.8,505.7 408.3,503.5 407.8,501.2 407.1,498.9 406.1,496.6 405.2,494.3 404.2,491.9 403.3,489.5 402.3,487.1 401.4,484.7 400.6,482.2 399.7,479.7 398.9,477.2 398.1,474.6 397.2,472 396.4,469.3 395.6,466.7 394.7,464 393.8,461.2 393,458.4 392.1,455.6 391.3,452.7 390.5,449.8 389.7,446.9 388.9,443.9 388.2,440.8 387.4,437.8 386.6,434.7 385.9,431.5 385.1,428.3 384.3,425.1 383.6,421.8 382.8,418.5 382,415.1 381.4,411.7 380.8,408.2 380.2,404.7 379.7,401.1 379.2,397.5 378.7,393.8 378.3,390 377.9,386.2 377.5,382.3 377.1,378.3 376.8,374.3 376.4,370.2 375.7,366 375,361.7 374.3,357.3 373.6,352.9 373,348.4 372.4,343.7 371.9,339 371.7,334.2 371.6,329.2 371.4,324.2 371.4,319 371.2,313.7 371.1,308.3 371,302.8 371,297.2 371.1,291.4 371.2,285.5 371.4,279.5 371.6,273.3 371.9,267 372.4,260.6 373.3,254 374.2,247.2 375.3,240.3 376.2,233.2 377.1,225.9 378.1,218.4 379.2,210.7 380.5,202.8 381.7,194.6 382.9,186.3 384.9,177.7 387.4,168.8 390.1,159.7 392.9,150.2 396,140.5 398.4,130.4 400.7,120 403.2,109.3 406,98.2 409.1,86.6 412.7,74.6 416.4,62.2 420.4,49.3 424.4,35.8 429.5,21.8 433.1,12.1" fill="none" stroke="#ffc0ff" stroke-width="1" stroke-linejoin="round"/>
<polyline points="455,690.3 460.4,694.3 465.7,698.3 470.9,702.2 476.1,706 481.3,709.8 486.4,713.4 491.6,716.9 496.8,720.4 502.1,723.7 507.3,726.9 512.5,730" fill="none" stroke="#ff00ff" stroke-width="2" stroke-linejoin="round"/>
<polyline points="455.5,690.8 460.9,694.8 466.2,698.8 471.4,702.7 476.6,706.5 481.8,710.3 486.9,713.9 492.1,717.4 497.3,720.9 502.6,724.2 507.8,727.4 513,730.5" fill="none" stroke="#ffc0ff" stroke-width="1" stroke-linejoin="round"/>
<polyline points="432.9,730 455,690.3" fill="none" stroke="#ff00ff" stroke-width="1" stroke-linejoin="round"/>
<line x1="61" y1="690.5" x2="625" y2="690.5" stroke="#ff00ff" stroke-width="1"/>
</g>
<rect x="195.5" y="702.5" width="8" height="8" rx="1" fill="#c8c800"/>
<text x="199.5" y="709.8" font-size="9" font-weight="bold" fill="#3a3a00" text-anchor="middle">1</text>
<rect x="208.5" y="676.5" width="8" height="8" rx="1" fill="#c8c800"/>
<text x="212.5" y="683.8" font-size="9" font-weight="bold" fill="#3a3a00" text-anchor="middle">2</text>
<rect x="161.5" y="647.5" width="8" height="8" rx="1" fill="#c8c800"/>
<text x="165.5" y="654.8" font-size="9" font-weight="bold" fill="#3a3a00" text-anchor="middle">3</text>
<rect x="67.5" y="607.5" width="43" height="17" fill="#000" stroke="#ffff00"/>
<text x="89" y="621" font-size="13" fill="#ffff00" text-anchor="middle">CAPE</text>
<rect x="67.5" y="636.5" width="57" height="17" fill="#000" stroke="#e07000"/>
<text x="96" y="650" font-size="13" fill="#e07000" text-anchor="middle">CINH * 5</text>
<rect x="625.5" y="681.5" width="30" height="17" fill="#000" stroke="#ff00ff" stroke-width="1.5"/>
<text x="641" y="695" font-size="13" fill="#ff00ff" text-anchor="middle">LCL</text>
<text x="52.5" y="54.7" text-anchor="end" font-size="14" fill="#fff" textLength="20.5" lengthAdjust="spacingAndGlyphs">100</text>
<text x="52.5" y="325.7" text-anchor="end" font-size="14" fill="#fff" textLength="20.5" lengthAdjust="spacingAndGlyphs">200</text>
<text x="52.5" y="453.7" text-anchor="end" font-size="14" fill="#fff" textLength="20.5" lengthAdjust="spacingAndGlyphs">300</text>
<text x="52.5" y="533.7" text-anchor="end" font-size="14" fill="#fff" textLength="20.5" lengthAdjust="spacingAndGlyphs">400</text>
<text x="52.5" y="591.2" text-anchor="end" font-size="14" fill="#fff" textLength="20.5" lengthAdjust="spacingAndGlyphs">500</text>
<text x="52.5" y="634.8" text-anchor="end" font-size="14" fill="#fff" textLength="20.5" lengthAdjust="spacingAndGlyphs">600</text>
<text x="52.5" y="669.5" text-anchor="end" font-size="14" fill="#fff" textLength="20.5" lengthAdjust="spacingAndGlyphs">700</text>
<text x="52.5" y="698.6" text-anchor="end" font-size="14" fill="#fff" textLength="20.5" lengthAdjust="spacingAndGlyphs">800</text>
<text x="52.5" y="724.1" text-anchor="end" font-size="14" fill="#fff" textLength="20.5" lengthAdjust="spacingAndGlyphs">900</text>
<text x="52.5" y="745.1" text-anchor="end" font-size="14" fill="#fff" textLength="27.5" lengthAdjust="spacingAndGlyphs">1000</text>
<text x="670" y="54.7" text-anchor="start" font-size="14" fill="#fff" textLength="45" lengthAdjust="spacingAndGlyphs">16283m</text>
<text x="670" y="325.7" text-anchor="start" font-size="14" fill="#fff" textLength="45" lengthAdjust="spacingAndGlyphs">11873m</text>
<text x="670" y="453.7" text-anchor="start" font-size="14" fill="#fff" textLength="38" lengthAdjust="spacingAndGlyphs">9273m</text>
<text x="670" y="533.7" text-anchor="start" font-size="14" fill="#fff" textLength="38" lengthAdjust="spacingAndGlyphs">7286m</text>
<text x="670" y="591.2" text-anchor="start" font-size="14" fill="#fff" textLength="38" lengthAdjust="spacingAndGlyphs">5653m</text>
<text x="670" y="634.8" text-anchor="start" font-size="14" fill="#fff" textLength="38" lengthAdjust="spacingAndGlyphs">4256m</text>
<text x="670" y="669.5" text-anchor="start" font-size="14" fill="#fff" textLength="38" lengthAdjust="spacingAndGlyphs">3039m</text>
<text x="670" y="698.6" text-anchor="start" font-size="14" fill="#fff" textLength="38" lengthAdjust="spacingAndGlyphs">1951m</text>
<text x="670" y="724.1" text-anchor="start" font-size="14" fill="#fff" textLength="31" lengthAdjust="spacingAndGlyphs">957m</text>
<text x="61.5" y="768" text-anchor="middle" font-size="14" fill="#fff" textLength="18.7" lengthAdjust="spacingAndGlyphs">-50</text>
<text x="61.5" y="805.5" text-anchor="middle" font-size="14" fill="#fff" textLength="6.5" lengthAdjust="spacingAndGlyphs">0</text>
<text x="61.5" y="842.5" text-anchor="middle" font-size="14" fill="#fff" textLength="6.5" lengthAdjust="spacingAndGlyphs">0</text>
<text x="121.5" y="768" text-anchor="middle" font-size="14" fill="#fff" textLength="18.7" lengthAdjust="spacingAndGlyphs">-40</text>
<text x="121.5" y="805.5" text-anchor="middle" font-size="14" fill="#fff" textLength="13.5" lengthAdjust="spacingAndGlyphs">10</text>
<text x="121.5" y="842.5" text-anchor="middle" font-size="14" fill="#fff" textLength="20.5" lengthAdjust="spacingAndGlyphs">300</text>
<text x="181.5" y="768" text-anchor="middle" font-size="14" fill="#fff" textLength="18.7" lengthAdjust="spacingAndGlyphs">-30</text>
<text x="181.5" y="805.5" text-anchor="middle" font-size="14" fill="#fff" textLength="13.5" lengthAdjust="spacingAndGlyphs">20</text>
<text x="181.5" y="842.5" text-anchor="middle" font-size="14" fill="#fff" textLength="20.5" lengthAdjust="spacingAndGlyphs">600</text>
<text x="241.5" y="768" text-anchor="middle" font-size="14" fill="#fff" textLength="18.7" lengthAdjust="spacingAndGlyphs">-20</text>
<text x="241.5" y="805.5" text-anchor="middle" font-size="14" fill="#fff" textLength="13.5" lengthAdjust="spacingAndGlyphs">30</text>
<text x="241.5" y="842.5" text-anchor="middle" font-size="14" fill="#fff" textLength="20.5" lengthAdjust="spacingAndGlyphs">900</text>
<text x="301.5" y="768" text-anchor="middle" font-size="14" fill="#fff" textLength="18.7" lengthAdjust="spacingAndGlyphs">-10</text>
<text x="301.5" y="805.5" text-anchor="middle" font-size="14" fill="#fff" textLength="13.5" lengthAdjust="spacingAndGlyphs">40</text>
<text x="301.5" y="842.5" text-anchor="middle" font-size="14" fill="#fff" textLength="27.5" lengthAdjust="spacingAndGlyphs">1200</text>
<text x="361.5" y="768" text-anchor="middle" font-size="14" fill="#fff" textLength="6.5" lengthAdjust="spacingAndGlyphs">0</text>
<text x="361.5" y="805.5" text-anchor="middle" font-size="14" fill="#fff" textLength="13.5" lengthAdjust="spacingAndGlyphs">50</text>
<text x="361.5" y="842.5" text-anchor="middle" font-size="14" fill="#fff" textLength="27.5" lengthAdjust="spacingAndGlyphs">1500</text>
<text x="421.5" y="768" text-anchor="middle" font-size="14" fill="#fff" textLength="13.5" lengthAdjust="spacingAndGlyphs">10</text>
<text x="421.5" y="805.5" text-anchor="middle" font-size="14" fill="#fff" textLength="13.5" lengthAdjust="spacingAndGlyphs">60</text>
<text x="421.5" y="842.5" text-anchor="middle" font-size="14" fill="#fff" textLength="27.5" lengthAdjust="spacingAndGlyphs">1800</text>
<text x="481.5" y="768" text-anchor="middle" font-size="14" fill="#fff" textLength="13.5" lengthAdjust="spacingAndGlyphs">20</text>
<text x="481.5" y="805.5" text-anchor="middle" font-size="14" fill="#fff" textLength="13.5" lengthAdjust="spacingAndGlyphs">70</text>
<text x="481.5" y="842.5" text-anchor="middle" font-size="14" fill="#fff" textLength="27.5" lengthAdjust="spacingAndGlyphs">2100</text>
<text x="541.5" y="768" text-anchor="middle" font-size="14" fill="#fff" textLength="13.5" lengthAdjust="spacingAndGlyphs">30</text>
<text x="541.5" y="805.5" text-anchor="middle" font-size="14" fill="#fff" textLength="13.5" lengthAdjust="spacingAndGlyphs">80</text>
<text x="541.5" y="842.5" text-anchor="middle" font-size="14" fill="#fff" textLength="27.5" lengthAdjust="spacingAndGlyphs">2400</text>
<text x="601.5" y="768" text-anchor="middle" font-size="14" fill="#fff" textLength="13.5" lengthAdjust="spacingAndGlyphs">40</text>
<text x="601.5" y="805.5" text-anchor="middle" font-size="14" fill="#fff" textLength="13.5" lengthAdjust="spacingAndGlyphs">90</text>
<text x="601.5" y="842.5" text-anchor="middle" font-size="14" fill="#fff" textLength="27.5" lengthAdjust="spacingAndGlyphs">2700</text>
<text x="661.5" y="768" text-anchor="middle" font-size="14" fill="#fff" textLength="13.5" lengthAdjust="spacingAndGlyphs">50</text>
<text x="661.5" y="805.5" text-anchor="middle" font-size="14" fill="#fff" textLength="20.5" lengthAdjust="spacingAndGlyphs">100</text>
<text x="661.5" y="842.5" text-anchor="middle" font-size="14" fill="#fff" textLength="27.5" lengthAdjust="spacingAndGlyphs">3000</text>
<text x="61.5" y="879" text-anchor="middle" font-size="14" fill="#fff" textLength="25.7" lengthAdjust="spacingAndGlyphs">-100</text>
<text x="136.5" y="879" text-anchor="middle" font-size="14" fill="#fff" textLength="18.7" lengthAdjust="spacingAndGlyphs">-50</text>
<text x="211.5" y="879" text-anchor="middle" font-size="14" fill="#fff" textLength="6.5" lengthAdjust="spacingAndGlyphs">0</text>
<text x="286.5" y="879" text-anchor="middle" font-size="14" fill="#fff" textLength="13.5" lengthAdjust="spacingAndGlyphs">50</text>
<text x="361.5" y="879" text-anchor="middle" font-size="14" fill="#fff" textLength="20.5" lengthAdjust="spacingAndGlyphs">100</text>
<text x="436.5" y="879" text-anchor="middle" font-size="14" fill="#fff" textLength="20.5" lengthAdjust="spacingAndGlyphs">150</text>
<text x="511.5" y="879" text-anchor="middle" font-size="14" fill="#fff" textLength="20.5" lengthAdjust="spacingAndGlyphs">200</text>
<text x="586.5" y="879" text-anchor="middle" font-size="14" fill="#fff" textLength="20.5" lengthAdjust="spacingAndGlyphs">250</text>
<text x="661.5" y="879" text-anchor="middle" font-size="14" fill="#fff" textLength="20.5" lengthAdjust="spacingAndGlyphs">300</text>
<text x="361.7" y="781" text-anchor="middle" font-size="14" fill="#fff" textLength="171" lengthAdjust="spacingAndGlyphs">Temperature, Dewpoint&#160; [ °C]</text>
<text x="360.2" y="819" text-anchor="middle" font-size="14" fill="#fff" textLength="106.5" lengthAdjust="spacingAndGlyphs">Windspeed&#160; [ knt]</text>
<text x="360.8" y="857" text-anchor="middle" font-size="14" fill="#fff" textLength="137" lengthAdjust="spacingAndGlyphs">CAPE, CINH * 5&#160; [ J/kg]</text>
<text x="361.5" y="892.5" text-anchor="middle" font-size="14" fill="#fff" textLength="204.5" lengthAdjust="spacingAndGlyphs">Storm Relative Helicity&#160; [ m^2/s^2 ]</text>
<g fill="#fff" font-size="16" font-weight="bold">
<text x="62" y="29" textLength="242" lengthAdjust="spacingAndGlyphs">Station: 06610 Payerne (LSMP)</text>
<text x="329" y="29" textLength="128.5" lengthAdjust="spacingAndGlyphs">Date: 03.06.2020</text>
<text x="480" y="29" textLength="91" lengthAdjust="spacingAndGlyphs">Time: 1200Z</text>
</g>
<line x1="761.5" y1="40" x2="761.5" y2="770" stroke="#00ff00" shape-rendering="crispEdges"/>
<line x1="826.5" y1="40" x2="826.5" y2="770" stroke="#ff1493" shape-rendering="crispEdges"/>
<path d="M761.5 76.6 L753.4 48.2 M761.5 89.7 L747.1 64 M761.5 108.9 L754.3 82.3 M761.5 122.8 L745.2 98.4 M761.5 139.8 L745.2 115.6 M761.5 147.4 L741.2 126.3 M761.5 161.4 L748.4 136 M761.5 176.5 L740.2 157 M761.5 217 L736.1 202.4 M761.5 219 L736.1 204.4 M761.5 239.7 L742.1 217 M761.5 250.5 L739.2 232.1 M761.5 261.2 L737.3 245 M761.5 286.5 L733.2 278.7 M761.5 311.8 L736.4 298.2 M761.5 321.7 L735.1 309.5 M761.5 329.5 L734.1 319.4 M761.5 381.4 L735.1 370.6 M761.5 394.6 L734.1 383.3 M761.5 415.2 L733.2 406.4 M761.5 419.5 L733.2 410.4 M761.5 435.5 L732.2 431.3 M761.5 437.3 L732.2 434.4 M761.5 445.6 L733.2 437.6 M761.5 449.6 L733.2 440.8 M761.5 473.6 L732.2 471.1 M761.5 476.5 L733.2 474.2 M761.5 482.2 L733.2 474.9 M761.5 496.4 L734.1 487 M761.5 497.6 L734.1 488.2 M761.5 502.5 L733.2 494.5 M761.5 529.3 L732.2 525.2 M761.5 532.4 L732.2 527.4 M761.5 538.8 L732.2 537.5 M761.5 549.5 L732.2 546.3 M761.5 561.5 L732.2 559.4 M761.5 563.4 L732.2 562.4 M761.5 573.5 L732.2 570.3 M761.5 575.4 L732.2 576.7 M761.5 579.6 L733.2 586.8 M761.5 586.5 L733.2 595.6 M761.5 598.2 L734.1 608.7 M761.5 605.2 L733.2 619.7 M761.5 612.5 L732.2 612.5 M761.5 615.3 L734.1 619 M761.5 620.3 L732.2 623.1 M761.5 622.9 L732.2 627.7 M761.5 630.2 L742.4 652.8 M761.5 631.4 L748.1 658.6 M761.5 694.4 L758.6 651.6 M761.5 675.9 L743.5 692.1 M761.5 682.9 L737.2 702 M761.5 685.2 L747.6 701.4 M761.5 693.3 L732 693.3 M761.5 707.2 L732 701.4 M761.5 707.2 L732 704.3 M761.5 713.5 L732 704.9 M761.5 724.5 L743.5 706 M761.5 726.9 L756.3 700.2 M761.5 670 L758 640 M761.5 690 L756 650 M761.5 700 L754 660 M761.5 696.8 L756.3 715.3 M761.5 680 L760 645 M826.5 76.6 L840.6 51.4 M826.5 89.7 L838.7 63.1 M826.5 108.9 L838.7 84.2 M826.5 108.9 L825.5 93.1 M826.5 122.8 L826 110 M826.5 139.8 L827 127 M826.5 145.5 L818.5 119.4 M826.5 147.4 L827.5 132 M826.5 161.4 L826 150 M826.5 176.5 L815.3 149.3 M826.5 218.2 L807.1 194.2 M826.5 220 L807.1 196.2 M826.5 239.7 L817.2 211.3 M826.5 250.5 L813.1 225.2 M826.5 261.2 L809.9 238.5 M826.5 286.5 L800.8 273.3 M826.5 312.4 L808.4 290.3 M826.5 321.7 L803 303.2 M826.5 329.2 L802.1 313.3 M826.5 381.4 L802.3 365.1 M826.5 394.3 L802.3 379.1 M826.5 415.2 L800.2 402.2 M826.5 419.5 L800.8 406.3 M826.5 435.5 L798 429.4 M826.5 437.3 L797.3 432.2 M826.5 445.6 L798.9 434.4 M826.5 449.6 L799.5 437.6 M826.5 473.6 L797.3 470.5 M826.5 476.5 L797.7 471.1 M826.5 482.2 L800.8 472.4 M826.5 496.4 L800.8 482.5 M826.5 497.6 L800.8 484 M826.5 502.5 L798.9 490.7 M826.5 529.3 L798.3 523.6 M826.5 532.4 L798.3 525.5 M826.5 538.8 L797.3 536.2 M826.5 549.5 L797.3 545.5 M826.5 561.5 L797.3 558.3 M826.5 563.4 L797.3 562.1 M826.5 573.5 L798 565.7 M826.5 575.4 L797.3 576.7 M826.5 579.6 L800.2 592.5 M826.5 586.5 L805.2 599.4 M826.5 598.2 L802.3 601.6 M826.5 605.2 L803.1 615.9 M826.5 612.5 L798 608.3 M826.5 620.3 L798.3 627.9 M826.5 622.9 L798.9 632.3 M826.5 640 L843.6 663.2 M826.5 648.1 L843.6 673.6 M826.5 653.9 L843.6 677.7 M826.5 662 L843.6 686.3 M826.5 666.7 L841.2 689.2 M826.5 674.8 L837.8 693.3 M826.5 636.6 L823.3 659.7 M826.5 673.6 L822.2 702 M826.5 694.4 L855.7 692.1 M826.5 706 L855.1 700.2 M826.5 704.9 L850.5 690.4 M826.5 724.5 L839.5 699.1 M826.5 730.3 L847.6 710.1 M826.5 706 L834.3 714.1 M826.5 680.6 L838.9 706 M826.5 645 L829 690 M826.5 640 L827.5 700 M826.5 105 L826.5 176 M825.5 93 L825.5 108 M827.5 128 L827.5 146" stroke="#fff" stroke-width="1" fill="none" shape-rendering="crispEdges"/>
<text x="747" y="32" font-size="13" font-weight="bold" fill="#00ff00" textLength="28" lengthAdjust="spacingAndGlyphs">OBS</text>
<text x="818" y="32" font-size="13" font-weight="bold" fill="#ff1493" textLength="17.5" lengthAdjust="spacingAndGlyphs">SR</text>
<g font-size="13" fill="#fff">
<text x="894" y="39.5" text-decoration="underline">Parameter</text>
<text x="1123" y="39.5" fill="#ffffff" text-anchor="end" text-decoration="underline">Value LCL</text>
<text x="1213.5" y="39.5" fill="#ffffff" text-anchor="end" text-decoration="underline">Value CCL</text>
<text x="1230" y="39.5" text-decoration="underline">Unit</text>
<text x="894" y="61.5">Convective Temperature:</text>
<text x="1123" y="61.5" fill="#ffff00" text-anchor="end">23.13</text>
<text x="1230" y="61.5">[°C]</text>
<text x="894" y="78.5">Snowfall Height:</text>
<text x="1123" y="78.5" fill="#ffffff" text-anchor="end">2649.68</text>
<text x="1230" y="78.5">[m]</text>
<text x="894" y="103.5" text-decoration="underline">Parcels: Using 50mB mean layer LCL + CCL</text>
<text x="894" y="123.5">Lifted Index:</text>
<text x="1123" y="123.5" fill="#ff0000" text-anchor="end">-2.62</text>
<text x="1213.5" y="123.5" fill="#ff0000" text-anchor="end">-2.74</text>
<text x="1230" y="123.5">[°C]</text>
<text x="894" y="140.5">CAPE ML:</text>
<text x="1123" y="140.5" fill="#ff0000" text-anchor="end">732.01</text>
<text x="1213.5" y="140.5" fill="#ffff00" text-anchor="end">767.89</text>
<text x="1230" y="140.5">[J/kg]</text>
<text x="894" y="157.5">CINH | LSI (LCL: 786mB):</text>
<text x="1123" y="157.5" fill="#ff0000" text-anchor="end">6.80</text>
<text x="1123" y="157.5" fill="#ffffff" text-anchor="start">,</text>
<text x="1136" y="157.5" fill="#ff0000" text-anchor="start">-1.49</text>
<text x="1230" y="157.5">[J/kg], [°C]</text>
<text x="894" y="174.5">CAPE SFC:</text>
<text x="1123" y="174.5" fill="#ffff00" text-anchor="end">970.78</text>
<text x="1213.5" y="174.5" fill="#ff0000" text-anchor="end">890.09</text>
<text x="1230" y="174.5">[J/kg]</text>
<text x="894" y="191.5">CAPE MU | CINH MU:</text>
<text x="1123" y="191.5" fill="#ffff00" text-anchor="end">970.78</text>
<text x="1123" y="191.5" fill="#ffffff" text-anchor="start">,</text>
<text x="1136" y="191.5" fill="#ff0000" text-anchor="start">0.00</text>
<text x="1230" y="191.5">[J/kg]</text>
<text x="894" y="208.5">3km SFC CAPE | IL CAPE:</text>
<text x="1123" y="208.5" fill="#ffff00" text-anchor="end">95.15</text>
<text x="1123" y="208.5" fill="#ffffff" text-anchor="start">,</text>
<text x="1136" y="208.5" fill="#ff0000" text-anchor="start">1153.27</text>
<text x="1230" y="208.5">[J/kg]</text>
<text x="894" y="225.5">DCAPE (LFS = 621mB):</text>
<text x="1123" y="225.5" fill="#ffff00" text-anchor="end">370.98</text>
<text x="1230" y="225.5">[J/kg]</text>
<text x="894" y="242.5">850-600 Lapse Rate:</text>
<text x="1123" y="242.5" fill="#ff0000" text-anchor="end">21.30</text>
<text x="1230" y="242.5">[°C]</text>
<text x="894" y="259.5">FM Hail Size | SHIP | LHP:</text>
<text x="1123" y="259.5" fill="#ffff00" text-anchor="end">0.6 - 1.3</text>
<text x="1123" y="259.5" fill="#ffffff" text-anchor="start">,</text>
<text x="1136" y="259.5" fill="#00ff00" text-anchor="start">0.48</text>
<text x="1160" y="259.5" fill="#ffffff" text-anchor="start">,</text>
<text x="1173" y="259.5" fill="#00ff00" text-anchor="start">0.00</text>
<text x="1230" y="259.5">[cm], [1], [1]</text>
<text x="894" y="276.5">Estofex Exp. Hail Param:</text>
<text x="1123" y="276.5" fill="#ff0000" text-anchor="end">3.30</text>
<text x="1230" y="276.5">[cm]</text>
<text x="894" y="293.5">Max. Hail Size (OLD, MU, IL):</text>
<text x="1123" y="293.5" fill="#ffff00" text-anchor="end">1.90</text>
<text x="1123" y="293.5" fill="#ffffff" text-anchor="start">,</text>
<text x="1136" y="293.5" fill="#ffff00" text-anchor="start">2.18</text>
<text x="1160" y="293.5" fill="#ffffff" text-anchor="start">,</text>
<text x="1173" y="293.5" fill="#ffff00" text-anchor="start">2.68</text>
<text x="1230" y="293.5">[cm]</text>
<text x="894" y="313.5">LCL / CCL (AGL):</text>
<text x="1123" y="313.5" fill="#ffff00" text-anchor="end">1607.40</text>
<text x="1213.5" y="313.5" fill="#ffff00" text-anchor="end">1630.15</text>
<text x="1230" y="313.5">[m]</text>
<text x="894" y="330.5">Convective Height:</text>
<text x="1123" y="330.5" fill="#ffff00" text-anchor="end">7.77</text>
<text x="1213.5" y="330.5" fill="#ffff00" text-anchor="end">7.79</text>
<text x="1230" y="330.5">[km]</text>
<text x="894" y="355.5" text-decoration="underline">Convective Indices</text>
<text x="894" y="375.5">Showalter Index:</text>
<text x="1123" y="375.5" fill="#ff0000" text-anchor="end">-1.74</text>
<text x="1230" y="375.5">[°C]</text>
<text x="894" y="392.5">Modified Thompson Index:</text>
<text x="1123" y="392.5" fill="#ff0000" text-anchor="end">41.64</text>
<text x="1230" y="392.5">[°C]</text>
<text x="894" y="409.5">Total Totals Index:</text>
<text x="1123" y="409.5" fill="#ff0000" text-anchor="end">54.10</text>
<text x="1230" y="409.5">[°C]</text>
<text x="894" y="426.5">KO Index:</text>
<text x="1123" y="426.5" fill="#ff0000" text-anchor="end">-13.99</text>
<text x="1230" y="426.5">[1]</text>
<text x="894" y="443.5">Craven SigSvr / 1000:</text>
<text x="1123" y="443.5" fill="#ff0000" text-anchor="end">9.03</text>
<text x="1230" y="443.5">[m^3/s^3]</text>
<text x="894" y="460.5">SCP RM (new, old):</text>
<text x="1123" y="460.5" fill="#00ff00" text-anchor="end">0.01</text>
<text x="1123" y="460.5" fill="#ffffff" text-anchor="start">,</text>
<text x="1136" y="460.5" fill="#00ff00" text-anchor="start">0.13</text>
<text x="1230" y="460.5">[1]</text>
<text x="894" y="477.5">STP (new, old):</text>
<text x="1123" y="477.5" fill="#00ff00" text-anchor="end">0.00</text>
<text x="1123" y="477.5" fill="#ffffff" text-anchor="start">,</text>
<text x="1136" y="477.5" fill="#00ff00" text-anchor="start">0.01</text>
<text x="1230" y="477.5">[1]</text>
<text x="894" y="494.5">SB STP (fix) | CWASP:</text>
<text x="1123" y="494.5" fill="#00ff00" text-anchor="end">0.01</text>
<text x="1123" y="494.5" fill="#ffffff" text-anchor="start">,</text>
<text x="1136" y="494.5" fill="#00ff00" text-anchor="start">44.44</text>
<text x="1230" y="494.5">[1], [%]</text>
<text x="894" y="511.5">DCP | MMP | MSP:</text>
<text x="1123" y="511.5" fill="#00ff00" text-anchor="end">0.14</text>
<text x="1123" y="511.5" fill="#ffffff" text-anchor="start">,</text>
<text x="1136" y="511.5" fill="#00ff00" text-anchor="start">36.06</text>
<text x="1167" y="511.5" fill="#ffffff" text-anchor="start">,</text>
<text x="1180" y="511.5" fill="#00ff00" text-anchor="start">26.23</text>
<text x="1230" y="511.5">[1], [%], [%]</text>
<text x="894" y="528.5">MB Comp | SHERBE:</text>
<text x="1123" y="528.5" fill="#00ff00" text-anchor="end">0.00</text>
<text x="1123" y="528.5" fill="#ffffff" text-anchor="start">,</text>
<text x="1136" y="528.5" fill="#ffff00" text-anchor="start">0.53</text>
<text x="1230" y="528.5">[1], [1]</text>
<text x="894" y="545.5">Exp. Supercell Index CH:</text>
<text x="1123" y="545.5" fill="#ffff00" text-anchor="end">1.39</text>
<text x="1230" y="545.5">[1]</text>
<text x="894" y="562.5">SWISS 12 Index:</text>
<text x="1123" y="562.5" fill="#ff0000" text-anchor="end">-8.98</text>
<text x="1230" y="562.5">[1]</text>
<text x="894" y="579.5">Precipitable Water:</text>
<text x="1123" y="579.5" fill="#ffff00" text-anchor="end">25.68</text>
<text x="1230" y="579.5">[mm]</text>
<text x="894" y="604.5" text-decoration="underline">Wind Parameters</text>
<text x="894" y="624.5">Storm Direction | Motion:</text>
<text x="1123" y="624.5" fill="#ffffff" text-anchor="end">269.50</text>
<text x="1123" y="624.5" fill="#ffffff" text-anchor="start">,</text>
<text x="1136" y="624.5" fill="#00ff00" text-anchor="start">9.84</text>
<text x="1230" y="624.5">[°], [knt]</text>
<text x="894" y="641.5">500m Critical Angle:</text>
<text x="1123" y="641.5" fill="#00ff00" text-anchor="end">344.38</text>
<text x="1230" y="641.5">[°]</text>
<text x="894" y="661.5">SR Wind Sfc-2km:</text>
<text x="1123" y="661.5" fill="#00ff00" text-anchor="end">3.48</text>
<text x="1230" y="661.5">[knt]</text>
<text x="894" y="678.5">SR Wind 4km-6km:</text>
<text x="1123" y="678.5" fill="#00ff00" text-anchor="end">9.13</text>
<text x="1230" y="678.5">[knt]</text>
<text x="894" y="695.5">SR Wind 9km-11km:</text>
<text x="1123" y="695.5" fill="#ff0000" text-anchor="end">18.28</text>
<text x="1230" y="695.5">[knt] HP</text>
<text x="894" y="715.5">Effective Shear 6000:</text>
<text x="1123" y="715.5" fill="#ffff00" text-anchor="end">23.97</text>
<text x="1230" y="715.5">[knt]</text>
<text x="894" y="735.5">Bulk Richardson Number:</text>
<text x="1123" y="735.5" fill="#ffff00" text-anchor="end">43.04</text>
<text x="1213.5" y="735.5" fill="#ffff00" text-anchor="end">45.15</text>
<text x="1230" y="735.5">[1]</text>
<text x="894" y="755.5">3km Effective SRH:</text>
<text x="1123" y="755.5" fill="#00ff00" text-anchor="end">-30.76</text>
<text x="1230" y="755.5">[m^2/s^2]</text>
<text x="894" y="772.5">Max 3km SRH (0-2km) | AGL:</text>
<text x="1123" y="772.5" fill="#00ff00" text-anchor="end">73.62</text>
<text x="1123" y="772.5" fill="#ffffff" text-anchor="start">,</text>
<text x="1136" y="772.5" fill="#00ff00" text-anchor="start">2000.00</text>
<text x="1230" y="772.5">[m^2/s^2], [m]</text>
<text x="894" y="792.5">3km Energy Helicity Index:</text>
<text x="1123" y="792.5" fill="#00ff00" text-anchor="end">0.14</text>
<text x="1213.5" y="792.5" fill="#00ff00" text-anchor="end">0.15</text>
<text x="1230" y="792.5">[1]</text>
<text x="894" y="809.5">3km Vorticity Gen. Pot.:</text>
<text x="1123" y="809.5" fill="#00ff00" text-anchor="end">0.10</text>
<text x="1213.5" y="809.5" fill="#00ff00" text-anchor="end">0.10</text>
<text x="1230" y="809.5">[m/s^2]</text>
</g>
<g font-size="13">
<rect x="729" y="827.5" width="16" height="8" fill="#ff0000"/>
<text x="753" y="836" fill="#ff0000">Temperature Profile</text>
<rect x="729" y="847.5" width="16" height="8" fill="#00ffff"/>
<text x="753" y="856" fill="#00ffff">Dewpoint Profile</text>
<rect x="729" y="867.5" width="16" height="8" fill="#00ff00"/>
<text x="753" y="876" fill="#00ff00">OBS Windspeed Profile</text>
<rect x="729" y="887.5" width="16" height="8" fill="#ff1493"/>
<text x="753" y="896" fill="#ff1493">SR Windspeed Profile</text>
<rect x="729" y="907.5" width="16" height="8" fill="#c8c800"/>
<text x="753" y="916" fill="#c8c800">Sfc-3km Storm Relative Helicity Profile</text>
<rect x="729" y="927.5" width="16" height="8" fill="#3c3a00"/>
<text x="753" y="936" fill="#3c3a00">Effective Layer (CAPE &gt;= 100 J/kg)</text>
<rect x="1079" y="827.5" width="16" height="8" fill="#00ff00"/>
<text x="1103" y="836" fill="#00ff00">No / Non Severe Thunderstorms</text>
<rect x="1079" y="847.5" width="16" height="8" fill="#ffff00"/>
<text x="1103" y="856" fill="#ffff00">Scattered / Moderate Thunderstorms</text>
<rect x="1079" y="867.5" width="16" height="8" fill="#ff0000"/>
<text x="1103" y="876" fill="#ff0000">Widespread / Severe Thunderstorms</text>
</g>
</svg></body></html>
